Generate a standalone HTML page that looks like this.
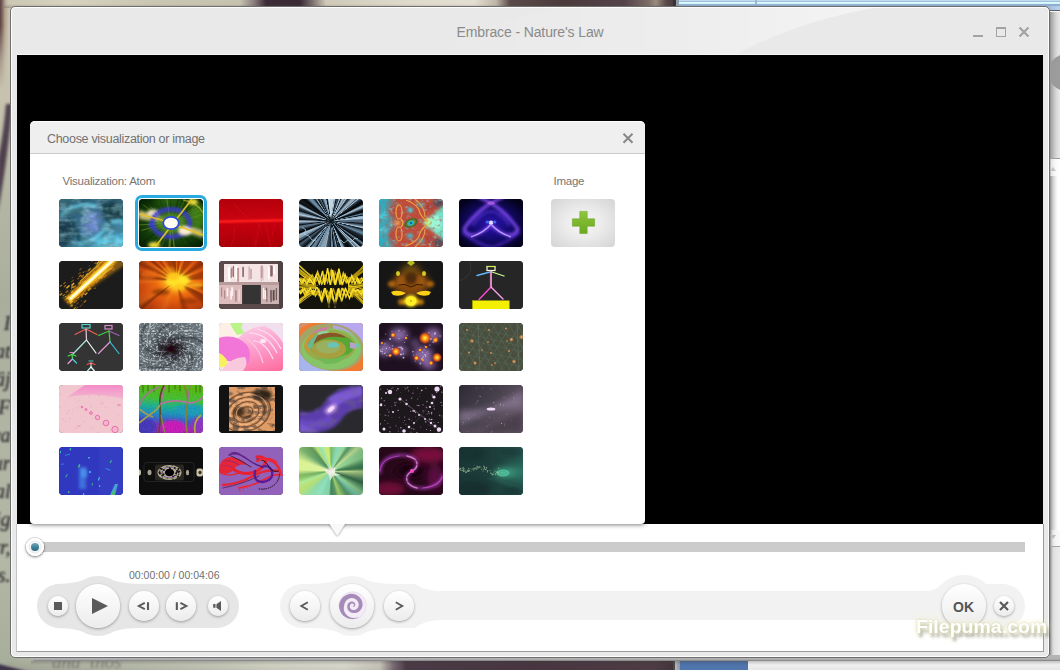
<!DOCTYPE html>
<html>
<head>
<meta charset="utf-8">
<title>Embrace - Nature's Law</title>
<style>
*{box-sizing:border-box;margin:0;padding:0}
html,body{width:1060px;height:670px;overflow:hidden}
body{position:relative;font-family:"Liberation Sans",sans-serif;background:#b9bcaa;color:#666}
.abs{position:absolute}
#desk{position:absolute;left:0;top:0;width:1060px;height:670px;overflow:hidden;background:#b4b8a6}
#desk div{position:absolute}
#win{position:absolute;left:10px;top:6px;width:1040px;height:652px;background:#e9e9e9;border:1px solid #6e6e6e;border-radius:5px;box-shadow:inset 0 0 0 1px #fdfdfd;overflow:hidden}
#title{position:absolute;left:430px;top:24.2px;width:200px;text-align:center;font-size:14px;line-height:16px;color:#8a8a8a;letter-spacing:-.12px;white-space:nowrap}
#video{position:absolute;left:17px;top:55px;width:1026px;height:469px;background:#000}
#panel{position:absolute;left:16px;top:524px;width:1028px;height:128px;background:#fff;border:1px solid #9a9a9a;border-top:none;border-left-color:#c6c6c6}
#dlg{position:absolute;left:30px;top:121px;width:615px;height:403px;background:#fff;border-radius:5px 5px 4px 4px;box-shadow:0 1px 4px rgba(0,0,0,.5)}
#dlgh{position:absolute;left:0;top:0;width:615px;height:33px;background:#efefef;border-top:1px solid #fdfdfd;border-bottom:1px solid #c9c9c9;border-radius:5px 5px 0 0}
.t{position:absolute;white-space:nowrap;color:#6b6b6b}
.th{position:absolute;width:64px;height:48px;border-radius:4px;overflow:hidden;background:#333}
.th svg{position:absolute;left:0;top:0;width:64px;height:48px;display:block}
.btn{position:absolute;border-radius:50%;background:linear-gradient(#ffffff,#ececec);box-shadow:0 1px 3px rgba(0,0,0,.35)}
</style>
</head>
<body>
<div id="desk">
  <!-- left strip: blurred book page -->
  <div style="left:0;top:0;width:14px;height:670px;background:linear-gradient(180deg,#c9c2ae 0px,#cbc6b2 60px,#c3c0ac 120px,#b4b6a4 200px,#a9ae9c 300px,#b0b4a3 420px,#b3b7a6 560px,#aab09d 640px,#a6ad9a 670px)"></div>
  <div style="left:0;top:0;width:14px;height:90px;background:linear-gradient(90deg,#5e4044 0px,#7a6058 2px,rgba(160,140,124,.6) 5px,rgba(200,194,174,0) 9px);-webkit-mask-image:linear-gradient(180deg,#000 0px,#000 25px,rgba(0,0,0,.35) 60px,transparent 90px);mask-image:linear-gradient(180deg,#000 0px,#000 25px,rgba(0,0,0,.35) 60px,transparent 90px)"></div>
  <svg style="position:absolute;left:0;top:100px" width="14" height="140" viewBox="0 100 14 140"><defs><filter id="dk1" x="-50%" y="-10%" width="200%" height="120%"><feGaussianBlur stdDeviation="1.6"/></filter></defs><path d="M12 104 Q9 150 -2 212 L-2 160 Q4 130 6 104Z" fill="#3a2a3c" opacity=".85" filter="url(#dk1)"/></svg>
  <div id="book" style="left:-40px;top:309px;width:50.500px;height:300px;font-family:'Liberation Serif',serif;font-style:italic;font-size:20px;line-height:28px;color:#303032;text-align:right;filter:blur(.9px);opacity:.92;white-space:nowrap;text-shadow:0 0 1px #303032">
    <div style="position:static;height:28px">I</div><div style="position:static;height:28px">nat</div><div style="position:static;height:28px">räj</div><div style="position:static;height:28px">F</div><div style="position:static;height:28px">eva</div><div style="position:static;height:28px">tur</div><div style="position:static;height:28px">mal</div><div style="position:static;height:28px">lig</div><div style="position:static;height:28px">err,</div><div style="position:static;height:28px">s.</div>
  </div>
  <!-- top strip -->
  <div style="left:4px;top:0;width:676px;height:8px;background:linear-gradient(90deg,rgba(201,194,174,0) 0px,#cdc8b4 8px,#d6d2bf 60px,#cac6b2 150px,#c6c2b0 236px,#8a7e7c 250px,#3c2c38 262px,#3a2a36 296px,#7a6e6c 308px,#cfc9b8 322px,#dedacb 400px,#e4dfd2 470px,#c0b6a8 492px,#5a4a48 506px,#4a3a3c 560px,#54424a 620px,#7c6c66 644px,#9a8c80 652px,#5a4a48 662px,#4a3c40 669px,#2c2c2c 670px,#3c3c3c 672px,#c4c4c4 673px,#d0d0d0 676px)"></div>
  <div style="left:4px;top:4px;width:676px;height:4px;background:linear-gradient(180deg,rgba(90,84,70,0),rgba(90,84,70,.35))"></div>
  <!-- top right: blue window frame -->
  <div style="left:679px;top:0;width:381px;height:9px;background:linear-gradient(180deg,#c3daef 0px,#c0d8ee 1px,#a2c1dd 1px,#a2c1dd 2px,#e6fcfd 2px,#c6f2f8 4px,#93b2d2 4px,#8faacb 6px,#9ab4d4 9px)"></div>
  <div style="left:676px;top:0;width:3px;height:8px;background:#8e9aa8"></div>
  <div style="left:755px;top:0;width:2px;height:4px;background:#9ab8d6"></div>
  <!-- right strip -->
  <div style="left:1046px;top:6px;width:14px;height:155px;background:linear-gradient(90deg,#8c8c8c 0px,#8c8c8c 4px,#a4a4a4 5px,#c4c4c4 8px,#dcdcdc 11px,#e8e8e8 14px)"></div>
  <div style="left:1046px;top:6px;width:14px;height:4px;background:linear-gradient(90deg,#9ab4d4 0px,#a8c4e2 6px,#b8d2ec 14px)"></div>
  <div style="left:1050px;top:10px;width:10px;height:1px;background:#5e5e5e"></div>
  <div style="left:1050px;top:11px;width:10px;height:1px;background:#f4f4f4"></div>
  <div style="left:1048px;top:54px;width:37px;height:37px;border-radius:50%;background:radial-gradient(circle at 50% 50%,#a0a0a0 0%,#9a9a9a 70%,#8c8c8c 100%)"></div>
  <div style="left:1046px;top:158px;width:14px;height:1px;background:#a0a0a0"></div>
  <div style="left:1046px;top:159px;width:14px;height:17px;background:linear-gradient(90deg,#9a9a9a 0px,#9a9a9a 4px,#e4e4e4 5px,#f8f8f8 9px,#ffffff 14px)"></div>
  <div style="left:1050px;top:167px;width:0;height:0;border-left:3px solid transparent;border-right:3px solid transparent;border-bottom:4px solid #c4c4c4"></div>
  <div style="left:1046px;top:176px;width:14px;height:354px;background:linear-gradient(90deg,#8c8c8c 0px,#8c8c8c 4px,#a8a8a8 5px,#cfcfcf 7px,#f2f2f2 10px,#ffffff 12px)"></div>
  <div style="left:1046px;top:530px;width:14px;height:16px;background:linear-gradient(90deg,#8c8c8c 0px,#8c8c8c 4px,#b4b4b4 5px,#e8e8e8 7px,#f6f6f6 10px,#fafafa 14px)"></div>
  <div style="left:1050px;top:535px;width:0;height:0;border-left:3px solid transparent;border-right:3px solid transparent;border-top:4px solid #bdbdbd"></div>
  <div style="left:1046px;top:546px;width:14px;height:1px;background:#a4a4a4"></div>
  <div style="left:1046px;top:547px;width:14px;height:120px;background:linear-gradient(90deg,#8c8c8c 0px,#8c8c8c 4px,#a6a6a6 5px,#cacaca 6px,#e2e2e2 8px,#ececec 14px)"></div>
  <!-- bottom strip -->
  <div style="left:14px;top:650px;width:660px;height:20px;background:linear-gradient(90deg,#a9ae9c 0px,#b2b6a4 40px,#bcc0ae 120px,#c8ccbc 200px,#d8d9ca 260px,#e0e0d3 330px,#cdcabf 366px,#7a6a72 380px,#4a3a46 392px,#47363f 520px,#4d3c44 640px,#43343c 660px)"></div>
  <div style="left:0px;top:660px;width:400px;height:10px;background:linear-gradient(180deg,rgba(80,80,70,0),rgba(70,66,70,.12))"></div>
  <div id="book2" style="left:52px;top:652px;width:120px;height:20px;font-family:'Liberation Serif',serif;font-style:italic;font-size:19px;line-height:20px;color:#4a4a48;filter:blur(1.2px);opacity:.5;white-space:nowrap">ana&nbsp; thos</div>
  <svg style="position:absolute;left:0;top:656px" width="60" height="14" viewBox="0 656 60 14"><defs><filter id="dk2" x="-20%" y="-50%" width="140%" height="200%"><feGaussianBlur stdDeviation="1.200"/></filter></defs><path d="M-4 663.5 L34 673 L-4 674Z" fill="#3c3448" filter="url(#dk2)"/></svg>
  <div style="left:673px;top:655px;width:2px;height:15px;background:#4a4a4a"></div>
  <div style="left:675px;top:655px;width:5px;height:15px;background:linear-gradient(90deg,#b8b8b8,#8e96a4)"></div>
  <div style="left:680px;top:655px;width:68px;height:15px;background:linear-gradient(180deg,#4b70a6,#4f76ad)"></div>
  <div style="left:748px;top:655px;width:312px;height:15px;background:linear-gradient(180deg,#fafafa 0px,#f4f4f4 8px,#e6e6e6 15px)"></div>
  <!-- window shadow band under the window -->
  <div style="left:30px;top:655px;width:1030px;height:6px;background:linear-gradient(180deg,#b4b4b4 0px,#b4b4b4 3px,#a8a8a8 5px,#6e6e6e 6px);clip-path:polygon(0 0,100% 0,100% 100%,4px 100%,0 3px)"></div>
  <div style="left:31px;top:661px;width:1029px;height:4px;background:linear-gradient(180deg,rgba(60,60,60,.28),rgba(60,60,60,0))"></div>
</div>
<div id="win"><svg style="position:absolute;left:0;top:0" width="1038" height="48" viewBox="11 7 1038 48"><defs><linearGradient id="tbg" x1="0" y1="0" x2="1" y2="0"><stop offset="0" stop-color="#fff" stop-opacity="0"/><stop offset=".55" stop-color="#fff" stop-opacity=".18"/><stop offset="1" stop-color="#fff" stop-opacity=".5"/></linearGradient></defs><path d="M420 55 L735 55 Q800 20 880 7 L560 7 Q470 30 420 55Z" fill="url(#tbg)"/></svg></div>
<div id="title">Embrace - Nature's Law</div>
<svg class="abs" style="left:960px;top:20px" width="80" height="24" viewBox="960 20 80 24">
  <g fill="none" stroke="#a3a3a3">
    <path d="M973 36 H983" stroke-width="2"/>
    <rect x="996.5" y="28" width="9" height="8.5" stroke-width="1"/>
    <path d="M996 28 H1006" stroke-width="2"/>
    <path d="M1019.500 27.500 L1028.500 36.500 M1028.500 27.500 L1019.500 36.500" stroke-width="2.200"/>
  </g>
</svg>
<div class="abs" style="left:17px;top:54px;width:1026px;height:1px;background:#f7f7f7"></div>
<div id="video"></div>
<div id="panel"></div>
<!-- seek bar -->
<div class="abs" style="left:36px;top:542px;width:989px;height:10px;background:#cccccc"></div>
<div class="abs" id="knob" style="left:26px;top:538px;width:18px;height:18px;border-radius:50%;background:linear-gradient(#ffffff,#f0f0f0);box-shadow:0 1px 3px rgba(0,0,0,.5),0 0 0 1px rgba(0,0,0,.10),inset 0 0 0 2.500px #fff,inset 0 0 0 3.500px #e9e9e9"></div>
<div class="abs" style="left:31px;top:543px;width:8px;height:8px;border-radius:50%;background:linear-gradient(180deg,#6fa9b9 0%,#3f8196 55%,#2a677d 100%)"></div>

<div class="t" id="time" style="left:129px;top:568px;font-size:10.5px;line-height:14px;color:#707070">00:00:00 / 00:04:06</div>

<svg class="abs" style="left:0;top:560px" width="1060" height="92" viewBox="0 560 1060 92">
  <g fill="#e6e6e6">
    <rect x="37" y="584" width="202" height="44" rx="22"/>
    <circle cx="98" cy="606" r="30"/>
    <path d="M55 584 Q72 584 82 580.600 L82 590 L55 590Z"/><path d="M141 584 Q124 584 114 580.600 L114 590 L141 590Z"/><path d="M55 628 Q72 628 82 631.400 L82 622 L55 622Z"/><path d="M141 628 Q124 628 114 631.400 L114 622 L141 622Z"/>
  </g>
  <g fill="#f2f2f2">
    <rect x="280" y="584" width="142" height="44" rx="22"/>
    <circle cx="352" cy="606" r="30"/>
    <path d="M309 584 Q326 584 336 580.600 L336 590 L309 590Z"/><path d="M395 584 Q378 584 368 580.600 L368 590 L395 590Z"/><path d="M309 628 Q326 628 336 631.400 L336 622 L309 622Z"/><path d="M395 628 Q378 628 368 631.400 L368 622 L395 622Z"/>
    <rect x="400" y="591" width="560" height="29"/>
    <path d="M400 584 L415 584 Q425 591 440 591 L440 620 Q425 620 415 628 L400 628Z"/>
    <rect x="950" y="584" width="75" height="44" rx="22"/>
    <circle cx="964" cy="606" r="31"/>
    <path d="M926 591 Q936 591 942 584 L986 584 Q992 584 1000 584 L1000 628 Q992 628 986 628 L942 628 Q936 620 926 620Z"/>
  </g>
</svg>

<div class="btn" style="left:48px;top:596px;width:20px;height:20px"></div>
<div class="btn" style="left:76px;top:584px;width:44px;height:44px"></div>
<div class="btn" style="left:129px;top:591px;width:30px;height:30px"></div>
<div class="btn" style="left:166px;top:591px;width:30px;height:30px"></div>
<div class="btn" style="left:208px;top:596px;width:20px;height:20px"></div>
<div class="btn" style="left:290px;top:591px;width:30px;height:30px"></div>
<div class="btn" style="left:330px;top:584px;width:44px;height:44px"></div>
<div class="btn" style="left:384px;top:591px;width:30px;height:30px"></div>
<div class="btn" style="left:942px;top:584px;width:44px;height:44px"></div>
<div class="btn" style="left:994px;top:596px;width:20px;height:20px"></div>

<svg class="abs" style="left:0;top:560px" width="1060" height="92" viewBox="0 560 1060 92">
  <rect x="54" y="602" width="8" height="8" fill="#5a5a5a"/>
  <path d="M92 598 L108 606 L92 614Z" fill="#5a5a5a"/>
  <g fill="none" stroke="#5a5a5a" stroke-width="1.6">
    <path d="M144.800 602.800 L138.800 606 L144.800 609.200" stroke-width="1.900"/>
    <path d="M148 602.200 V610" stroke-width="2.100"/>
    <path d="M176.850 602.200 V610" stroke-width="2.100"/>
    <path d="M180.400 602.800 L186.400 606 L180.400 609.200" stroke-width="1.900"/>
    <path d="M307.8 602.3 L301.3 606 L307.8 609.7" stroke-width="1.8"/>
    <path d="M395.8 602.3 L402.3 606 L395.8 609.7" stroke-width="1.8"/>
    <path d="M1000 602 L1008 610 M1008 602 L1000 610" stroke-width="2.2"/>
  </g>
  <path d="M213.200 604.100 h2.300 v3.700 h-2.300Z M216.400 604.300 L221 601 V610.900 L216.400 607.700Z" fill="#5a5a5a"/>
  <!-- spiral icon -->
  <g><circle cx="352.6" cy="605.5" r="13.700" fill="#f3ecf6" stroke="#e6dcec" stroke-width=".8"/><path d="M359.3 617.1 L356.7 618.3 L354.0 618.9 L351.2 618.9 L348.4 618.4 L345.8 617.3 L343.4 615.7 L341.5 613.5 L340.1 611.1 L339.3 608.3 L339.0 605.5 L339.6 602.7 L340.7 600.2 L342.2 598.0 L344.2 596.2 L346.5 594.9 L348.9 594.1 L351.4 593.8 L353.8 594.1 L356.1 594.8 L358.1 595.9 L359.8 597.5 L361.2 599.3 L362.1 601.3 L362.5 603.4 L362.6 605.5 L362.0 607.5 L361.1 609.3 L359.9 610.8 L358.4 611.9 L356.8 612.7 L355.1 613.1 L353.4 613.1 L351.8 612.8 L350.4 612.2 L349.2 611.3 L348.3 610.3 L347.6 609.1 L347.3 607.9 L347.2 606.7 L347.4 605.5 L347.6 604.4 L348.1 603.5 L348.8 602.7 L349.6 602.2 L350.4 601.8 L351.3 601.6 L352.2 601.6 L353.0 601.8 L353.7 602.1 L354.3 602.5 L354.8 603.1 L355.1 603.7 L355.2 604.3 L355.3 604.9 L355.2 605.5 L354.9 606.0 L354.5 606.4 L354.2 606.6 L353.7 606.8 L353.4 606.8 L353.0 606.7 L352.8 606.0 L352.9 606.1 L353.1 606.1 L353.3 606.0 L353.5 605.9 L353.7 605.7 L353.9 605.5 L353.9 605.2 L353.9 604.9 L353.8 604.6 L353.7 604.3 L353.5 604.0 L353.2 603.8 L352.8 603.6 L352.4 603.5 L352.0 603.5 L351.5 603.6 L351.1 603.8 L350.7 604.1 L350.4 604.5 L350.2 605.0 L350.1 605.5 L349.9 606.1 L349.8 606.7 L349.9 607.5 L350.2 608.2 L350.7 608.8 L351.3 609.4 L352.1 609.8 L353.1 610.1 L354.1 610.1 L355.1 609.8 L356.1 609.4 L357.0 608.7 L357.7 607.8 L358.3 606.7 L358.7 605.5 L358.7 604.2 L358.5 602.9 L357.9 601.6 L357.1 600.5 L356.1 599.5 L354.8 598.7 L353.4 598.2 L351.8 598.1 L350.3 598.3 L348.7 598.8 L347.3 599.7 L346.1 600.8 L345.2 602.2 L344.5 603.8 L344.2 605.5 L343.8 607.4 L343.8 609.4 L344.3 611.5 L345.4 613.5 L346.9 615.3 L349.0 616.7 L351.3 617.7 L353.9 618.1 L356.6 617.8 L359.2 616.9Z" fill="#a68bb9"/></g>
</svg>
<div class="t" style="left:953px;top:599px;font-size:14px;line-height:16px;font-weight:bold;color:#555">OK</div>
<div class="t" id="wm" style="left:915.500px;top:615.500px;font-size:17.5px;line-height:22px;font-weight:bold;color:#fff;transform:scaleX(1.116);transform-origin:0 0;filter:blur(.35px);text-shadow:0 0 2px rgba(205,205,160,.95),0 0 5px rgba(238,238,200,.9),0 0 9px rgba(244,244,214,.7),2px 4px 3px rgba(60,60,48,.5)">Filepuma.com</div>
<div id="dlg"><div id="dlgh"></div></div>
<div class="t" id="dt" style="left:47px;top:131px;font-size:12.5px;line-height:16px;color:#727272;letter-spacing:-.31px">Choose visualization or image</div>
<svg class="abs" style="left:620px;top:130px" width="16" height="16" viewBox="620 130 16 16"><path d="M623.500 133.700 L632.500 142.700 M632.500 133.700 L623.500 142.700" stroke="#888" stroke-width="2" fill="none"/></svg>
<div class="t" id="vt" style="left:62.500px;top:173.500px;font-size:11.5px;line-height:15px;color:#767676;letter-spacing:-.23px">Visualization: Atom</div>
<div class="t" id="it" style="left:553.500px;top:173.500px;font-size:11.5px;line-height:15px;color:#767676;letter-spacing:-.25px">Image</div>
<div class="abs" style="left:135px;top:195px;width:72px;height:56px;border:3px solid #29abe2;border-radius:7px;background:#fff"></div>
<div class="th" style="left:59px;top:199px"><svg viewBox="0 0 64 48" preserveAspectRatio="none"><defs><filter id="b1a" x="-20%" y="-20%" width="140%" height="140%"><feGaussianBlur stdDeviation="0.6"/></filter><filter id="b1b" x="-60%" y="-60%" width="220%" height="220%"><feGaussianBlur stdDeviation="1.5"/></filter><filter id="b1c" x="-100%" y="-100%" width="300%" height="300%"><feGaussianBlur stdDeviation="3"/></filter><linearGradient id="g1" x1="0" y1="0" x2="1" y2="1"><stop offset="0" stop-color="#245668"/><stop offset=".45" stop-color="#346a88"/><stop offset="1" stop-color="#48a4c8"/></linearGradient><filter id="n1" x="0" y="0" width="100%" height="100%"><feTurbulence type="fractalNoise" baseFrequency=".06 .12" numOctaves="3" seed="11"/><feColorMatrix values="0 0 0 0 .06  0 0 0 0 .17  0 0 0 0 .2  2.6 0 0 0 -1.05"/></filter><filter id="m1" x="0" y="0" width="100%" height="100%"><feTurbulence type="fractalNoise" baseFrequency=".09 .16" numOctaves="3" seed="5"/><feColorMatrix values="0 0 0 0 .52  0 0 0 0 .86  0 0 0 0 .96  0 2.6 0 0 -1.15"/></filter></defs><rect width="64" height="48" fill="url(#g1)"/><g filter="url(#b1c)"><ellipse cx="55" cy="12" rx="13" ry="11" fill="#163842"/><ellipse cx="5" cy="34" rx="11" ry="14" fill="#123644"/><ellipse cx="32" cy="24" rx="8" ry="12" fill="#7088d4" transform="rotate(25 32 24)"/><ellipse cx="50" cy="44" rx="18" ry="6" fill="#62d2ee"/><ellipse cx="42" cy="35" rx="6" ry="4" fill="#1c4858"/><ellipse cx="22" cy="45" rx="10" ry="4" fill="#3a90b4"/></g><g filter="url(#b1b)" fill="none" stroke-linecap="round"><path d="M3 16 Q14 4 36 7" stroke="#66cce8" stroke-width="3.600"/><path d="M20 46 Q36 42 46 30 T63 23" stroke="#6cd2ee" stroke-width="3"/><path d="M10 20 Q20 30 20 42" stroke="#1a4452" stroke-width="3.500"/><path d="M42 3 Q50 14 51 26" stroke="#1b424c" stroke-width="3"/><path d="M26 10 Q36 18 38 32" stroke="#92a6e8" stroke-width="2"/></g><rect width="64" height="48" filter="url(#n1)" opacity=".7"/><rect width="64" height="48" filter="url(#m1)" opacity=".4"/></svg></div>
<div class="th" style="left:139px;top:199px"><svg viewBox="0 0 64 48" preserveAspectRatio="none"><defs><filter id="b2a" x="-20%" y="-20%" width="140%" height="140%"><feGaussianBlur stdDeviation="0.6"/></filter><filter id="b2b" x="-60%" y="-60%" width="220%" height="220%"><feGaussianBlur stdDeviation="1.5"/></filter><filter id="b2c" x="-100%" y="-100%" width="300%" height="300%"><feGaussianBlur stdDeviation="3"/></filter><radialGradient id="g2" cx=".5" cy=".5" r=".7"><stop offset="0" stop-color="#4e7e1c"/><stop offset=".4" stop-color="#1c4e0c"/><stop offset="1" stop-color="#041c04"/></radialGradient></defs><rect width="64" height="48" fill="url(#g2)"/><g filter="url(#b2c)"><ellipse cx="58" cy="18" rx="9" ry="14" fill="#3c7c14"/><ellipse cx="30" cy="2" rx="14" ry="4" fill="#2c6410"/></g><g filter="url(#b2a)"><path d="M39.7 22.4 L69.4 13.4" stroke="#6a9a24" stroke-width="0.4" opacity=".55"/><path d="M26.9 28.6 L18 40.6" stroke="#0a3006" stroke-width="0.7" opacity=".55"/><path d="M29.1 29.6 L20.8 53.3" stroke="#b0bc38" stroke-width="0.4" opacity=".55"/><path d="M28.7 18.6 L15.3 -12.3" stroke="#082806" stroke-width="0.6" opacity=".55"/><path d="M30.6 18.1 L25.3 -15.3" stroke="#94b42c" stroke-width="0.7" opacity=".55"/><path d="M24.5 26 L9.5 32.1" stroke="#6a9a24" stroke-width="0.8" opacity=".55"/><path d="M26.7 28.5 L6.7 53" stroke="#051c04" stroke-width="0.6" opacity=".55"/><path d="M38 20 L48.1 9.6" stroke="#346c12" stroke-width="0.5" opacity=".55"/><path d="M39.9 24.9 L56.9 27.8" stroke="#346c12" stroke-width="0.7" opacity=".55"/><path d="M26.9 28.6 L13.4 46.6" stroke="#b0bc38" stroke-width="0.5" opacity=".55"/><path d="M38.3 20.3 L59.9 2" stroke="#082806" stroke-width="0.7" opacity=".55"/><path d="M38.7 20.7 L53.8 9.9" stroke="#b0bc38" stroke-width="0.6" opacity=".55"/><path d="M39.9 23.3 L70.9 19.3" stroke="#346c12" stroke-width="0.9" opacity=".55"/><path d="M25.5 27.5 L4.3 44.2" stroke="#082806" stroke-width="0.7" opacity=".55"/><path d="M24 24.4 L-6.3 26.4" stroke="#b0bc38" stroke-width="0.7" opacity=".55"/><path d="M34.3 18.3 L41.3 -7.2" stroke="#051c04" stroke-width="0.8" opacity=".55"/><path d="M24.2 25.5 L2.4 31.4" stroke="#b0bc38" stroke-width="0.8" opacity=".55"/><path d="M24 24.5 L9.2 25.9" stroke="#94b42c" stroke-width="0.8" opacity=".55"/><path d="M36.1 18.8 L51 -8.1" stroke="#b0bc38" stroke-width="0.5" opacity=".55"/><path d="M38.8 20.8 L53.1 10.9" stroke="#0a3006" stroke-width="0.8" opacity=".55"/><path d="M24 23.8 L2.6 23.2" stroke="#082806" stroke-width="0.7" opacity=".55"/><path d="M25.3 27.3 L3.6 42.9" stroke="#051c04" stroke-width="0.7" opacity=".55"/><path d="M39.3 21.6 L61 11.3" stroke="#6a9a24" stroke-width="0.8" opacity=".55"/><path d="M27.7 29 L22.1 39.3" stroke="#0a3006" stroke-width="0.5" opacity=".55"/><path d="M31.7 18 L31.4 4.7" stroke="#082806" stroke-width="0.4" opacity=".55"/><path d="M25.3 20.7 L4.3 6" stroke="#6a9a24" stroke-width="0.8" opacity=".55"/><path d="M37.2 28.5 L47.6 42" stroke="#0a3006" stroke-width="0.5" opacity=".55"/><path d="M37.9 19.9 L52 5.4" stroke="#082806" stroke-width="0.8" opacity=".55"/><path d="M39.5 26.1 L56.3 33.1" stroke="#346c12" stroke-width="0.7" opacity=".55"/><path d="M38.9 27 L65.8 43.4" stroke="#6a9a24" stroke-width="0.4" opacity=".55"/><path d="M39 21.1 L54.9 11.2" stroke="#346c12" stroke-width="0.8" opacity=".55"/><path d="M36.4 29 L44.1 42.4" stroke="#082806" stroke-width="0.4" opacity=".55"/><path d="M25.2 20.8 L2 5.1" stroke="#346c12" stroke-width="0.5" opacity=".55"/><path d="M39.8 25.4 L56.9 29.8" stroke="#b0bc38" stroke-width="0.7" opacity=".55"/><path d="M31.9 18 L31.6 -0.3" stroke="#051c04" stroke-width="0.4" opacity=".55"/><path d="M24.4 25.9 L-1.1 35" stroke="#082806" stroke-width="0.4" opacity=".55"/><path d="M31.3 30 L29.7 50.7" stroke="#b0bc38" stroke-width="0.8" opacity=".55"/><path d="M24.1 25 L9.4 27.9" stroke="#082806" stroke-width="0.7" opacity=".55"/><path d="M36.2 18.9 L41.8 8.3" stroke="#0a3006" stroke-width="0.8" opacity=".55"/><path d="M37.6 28.3 L53.5 46.2" stroke="#051c04" stroke-width="0.6" opacity=".55"/><path d="M28.2 29.3 L14.5 56.9" stroke="#94b42c" stroke-width="0.5" opacity=".55"/><path d="M25.7 20.3 L10.6 7.2" stroke="#6a9a24" stroke-width="0.7" opacity=".55"/><path d="M39.7 22.5 L63.7 15.7" stroke="#94b42c" stroke-width="0.4" opacity=".55"/><path d="M36.2 29.1 L42.7 41.1" stroke="#082806" stroke-width="0.5" opacity=".55"/><path d="M38.9 21 L61.1 7.2" stroke="#6a9a24" stroke-width="0.9" opacity=".55"/><path d="M32.9 30 L35.1 51.6" stroke="#94b42c" stroke-width="0.4" opacity=".55"/><path d="M33.1 29.9 L36.8 59.1" stroke="#b0bc38" stroke-width="0.8" opacity=".55"/><path d="M31.7 30 L30.9 51.3" stroke="#b0bc38" stroke-width="0.8" opacity=".55"/><path d="M36.7 28.9 L47.4 45.5" stroke="#346c12" stroke-width="0.5" opacity=".55"/><path d="M30.7 18.1 L28.2 1" stroke="#6a9a24" stroke-width="0.4" opacity=".55"/></g><g filter="url(#b2b)"><path d="M0 11 L0 20 L30 25 L30 21Z" fill="#e8d488" opacity=".85"/><path d="M34 24 L64 31 L64 39 L34 28Z" fill="#ecd890" opacity=".8"/><ellipse cx="14" cy="14" rx="6" ry="3.500" fill="#f0e0c0"/></g><ellipse cx="32" cy="24" rx="18.500" ry="13.500" fill="none" stroke="#4040d4" stroke-width="5" opacity=".8" filter="url(#b2b)"/><ellipse cx="32" cy="24" rx="19.500" ry="14.500" fill="none" stroke="#3434c4" stroke-width="2.400" stroke-dasharray="1.700 1.300" opacity=".5" filter="url(#b2a)"/><ellipse cx="32" cy="24" rx="14" ry="10" fill="#4e8828" opacity=".8" filter="url(#b2b)"/><g filter="url(#b2b)"><ellipse cx="46" cy="32" rx="7" ry="4.500" fill="#fcecd0"/><ellipse cx="15" cy="46" rx="6" ry="3" fill="#e8dc3c"/><ellipse cx="54" cy="3" rx="5" ry="3" fill="#f0e040"/><ellipse cx="12" cy="26" rx="2.500" ry="2" fill="#3040e0"/></g><g filter="url(#b2a)" opacity=".92"><path d="M0 15 L30 23" stroke="#e8c020" stroke-width="1.600"/><path d="M36 26 L64 36" stroke="#e8c020" stroke-width="1.600"/><path d="M16 48 L53 0" stroke="#e0c428" stroke-width="1.800"/><path d="M44 1 Q58 3 64 14" stroke="#d8c830" stroke-width="1.400" fill="none" opacity=".6"/></g><ellipse cx="32" cy="24" rx="7.800" ry="6.200" fill="#fffce0" stroke="#3048e8" stroke-width="1.800" filter="url(#b2a)"/><ellipse cx="32" cy="24" rx="6.200" ry="4.800" fill="#fffdf0"/></svg></div>
<div class="th" style="left:219px;top:199px"><svg viewBox="0 0 64 48" preserveAspectRatio="none"><defs><filter id="b3a" x="-20%" y="-20%" width="140%" height="140%"><feGaussianBlur stdDeviation="0.6"/></filter><filter id="b3b" x="-60%" y="-60%" width="220%" height="220%"><feGaussianBlur stdDeviation="1.5"/></filter><filter id="b3c" x="-100%" y="-100%" width="300%" height="300%"><feGaussianBlur stdDeviation="3"/></filter><linearGradient id="g3" x1="0" y1="0" x2="0.03" y2="1"><stop offset="0" stop-color="#b2000a"/><stop offset=".42" stop-color="#c80410"/><stop offset=".47" stop-color="#ff1c1c"/><stop offset=".53" stop-color="#c4000e"/><stop offset="1" stop-color="#a80008"/></linearGradient></defs><rect width="64" height="48" fill="url(#g3)"/><g filter="url(#b3a)"><path d="M15.2 24 L15.9 48" stroke="#d81820" stroke-width=".5" opacity=".45"/><path d="M23.7 24 L25.3 48" stroke="#d81820" stroke-width=".5" opacity=".45"/><path d="M40 24 L33.1 48" stroke="#d81820" stroke-width=".5" opacity=".45"/><path d="M0.8 24 L6.2 48" stroke="#d81820" stroke-width=".5" opacity=".45"/><path d="M16.6 24 L12.3 48" stroke="#d81820" stroke-width=".5" opacity=".45"/><path d="M63.7 24 L63.2 48" stroke="#d81820" stroke-width=".5" opacity=".45"/><path d="M53.5 24 L53.2 48" stroke="#d81820" stroke-width=".5" opacity=".45"/><path d="M40.9 24 L35.3 48" stroke="#d81820" stroke-width=".5" opacity=".45"/><path d="M40.6 24 L46.5 48" stroke="#d81820" stroke-width=".5" opacity=".45"/><path d="M33.5 24 L37.3 48" stroke="#d81820" stroke-width=".5" opacity=".45"/><path d="M43 24 L36 48" stroke="#d81820" stroke-width=".5" opacity=".45"/><path d="M48.5 24 L50 48" stroke="#d81820" stroke-width=".5" opacity=".45"/><path d="M19.3 24 L11.8 48" stroke="#d81820" stroke-width=".5" opacity=".45"/><path d="M55.4 24 L55 48" stroke="#d81820" stroke-width=".5" opacity=".45"/><path d="M46 24 L52.1 48" stroke="#d81820" stroke-width=".5" opacity=".45"/><path d="M45.7 24 L52.4 48" stroke="#d81820" stroke-width=".5" opacity=".45"/><path d="M25.3 24 L30.1 48" stroke="#d81820" stroke-width=".5" opacity=".45"/><path d="M28.5 24 L35.4 48" stroke="#d81820" stroke-width=".5" opacity=".45"/><path d="M56.2 24 L49.8 48" stroke="#d81820" stroke-width=".5" opacity=".45"/><path d="M8.7 24 L4.2 48" stroke="#d81820" stroke-width=".5" opacity=".45"/><path d="M61.8 24 L60.8 48" stroke="#d81820" stroke-width=".5" opacity=".45"/><path d="M40.1 24 L36.9 48" stroke="#d81820" stroke-width=".5" opacity=".45"/><path d="M14 4 L30 20 M30 21 L52 0 M40 10 L64 22 M0 8 L20 20" stroke="#d81018" stroke-width=".6" opacity=".6"/></g></svg></div>
<div class="th" style="left:299px;top:199px;background:conic-gradient(from 0deg at 32px 22px,#6a8aa4 0deg,#141c22 2.3deg,#2c3c48 4.9deg,#0a0e12 6.4deg,#b4cee0 9.1deg,#0a0e12 13.2deg,#384c5c 15.2deg,#2c3c48 17.7deg,#b4cee0 21.8deg,#0a0e12 23.8deg,#b4cee0 28deg,#6a8aa4 32.1deg,#b4cee0 33.9deg,#141c22 37.3deg,#4a6278 42deg,#05080a 43.5deg,#0c1014 45.9deg,#2c3c48 48.9deg,#b4cee0 51deg,#384c5c 52.5deg,#0a0e12 56.8deg,#05080a 61.2deg,#b4cee0 65deg,#384c5c 69.2deg,#0c1014 71.1deg,#0c1014 74.5deg,#6a8aa4 77.3deg,#0a0e12 79.6deg,#88a8c0 81.1deg,#b4cee0 84.6deg,#586f84 87.6deg,#4a6278 90.5deg,#586f84 92.3deg,#0c1014 94.2deg,#586f84 98.6deg,#b4cee0 102.1deg,#0c1014 104deg,#4a6278 107.9deg,#6a8aa4 111.4deg,#1a242c 115.8deg,#141c22 120deg,#05080a 122.1deg,#6a8aa4 125.5deg,#2c3c48 127.1deg,#0a0e12 129.4deg,#141c22 130.7deg,#b4cee0 132.2deg,#4a6278 136.1deg,#b4cee0 137.3deg,#2c3c48 139.7deg,#0c1014 143.7deg,#05080a 148deg,#1a242c 151.6deg,#6a8aa4 153.9deg,#b4cee0 158.3deg,#0c1014 160deg,#2c3c48 163.3deg,#0a0e12 165.7deg,#88a8c0 168.2deg,#4a6278 170.1deg,#05080a 174.8deg,#6a8aa4 176.4deg,#6a8aa4 179.1deg,#0a0e12 180.7deg,#2c3c48 182.1deg,#2c3c48 185.5deg,#384c5c 188.9deg,#6a8aa4 191.8deg,#0a0e12 194.2deg,#384c5c 195.8deg,#0c1014 198.1deg,#6a8aa4 201.6deg,#6a8aa4 204.5deg,#88a8c0 207.3deg,#0c1014 208.7deg,#586f84 211.4deg,#6a8aa4 215.9deg,#0a0e12 218.8deg,#b4cee0 220.2deg,#6a8aa4 222.3deg,#0c1014 226.2deg,#2c3c48 230.6deg,#4a6278 232.9deg,#05080a 236.2deg,#586f84 238.8deg,#141c22 242.4deg,#88a8c0 246.3deg,#0c1014 248.8deg,#05080a 250.8deg,#2c3c48 255.2deg,#586f84 257.7deg,#586f84 260.6deg,#0c1014 262.9deg,#586f84 266deg,#b4cee0 270.1deg,#0c1014 272.5deg,#1a242c 277.1deg,#b4cee0 281.4deg,#586f84 286.1deg,#0c1014 288deg,#2c3c48 292.4deg,#b4cee0 296.4deg,#0a0e12 300deg,#141c22 304.3deg,#05080a 307.8deg,#0c1014 310.7deg,#6a8aa4 315.2deg,#6a8aa4 319.3deg,#0a0e12 323.8deg,#b4cee0 327.2deg,#0c1014 328.8deg,#384c5c 333.2deg,#6a8aa4 334.6deg,#05080a 336.4deg,#384c5c 338.8deg,#88a8c0 342.8deg,#88a8c0 347.2deg,#0a0e12 348.5deg,#1a242c 352.2deg,#b4cee0 355.2deg,#2c3c48 358.6deg,#1a242c 359.9deg,#6a8aa4 360deg)"><svg viewBox="0 0 64 48" preserveAspectRatio="none"><defs><filter id="b4a" x="-20%" y="-20%" width="140%" height="140%"><feGaussianBlur stdDeviation="0.6"/></filter><filter id="b4b" x="-60%" y="-60%" width="220%" height="220%"><feGaussianBlur stdDeviation="1.5"/></filter><filter id="b4c" x="-100%" y="-100%" width="300%" height="300%"><feGaussianBlur stdDeviation="3"/></filter></defs><g filter="url(#b4a)"><path d="M32 22 L29 0 L35 0Z" fill="#cfe4f2" opacity=".9"/><path d="M32 22 L52 0 L57 0Z" fill="#c0d8ea" opacity=".8"/><path d="M32 22 L0 40 L0 35Z" fill="#a8c4d8" opacity=".8"/><path d="M32 22 L22 48 L27 48Z" fill="#b8d0e2" opacity=".7"/></g><circle cx="32" cy="22" r="3.500" fill="#0c1216" filter="url(#b4b)"/><path d="M3 28 l4 3 l-2 4 l5 2 l3 4 l4 1 M38 43 l4 -2 l3 3 l4 -3 l3 2 l4 -4 l3 1" stroke="#b0d4ea" stroke-width=".7" fill="none"/></svg></div>
<div class="th" style="left:379px;top:199px"><svg viewBox="0 0 64 48" preserveAspectRatio="none"><defs><filter id="b5a" x="-20%" y="-20%" width="140%" height="140%"><feGaussianBlur stdDeviation="0.6"/></filter><filter id="b5b" x="-60%" y="-60%" width="220%" height="220%"><feGaussianBlur stdDeviation="1.5"/></filter><filter id="b5c" x="-100%" y="-100%" width="300%" height="300%"><feGaussianBlur stdDeviation="3"/></filter><filter id="n5" x="0" y="0" width="100%" height="100%"><feTurbulence type="fractalNoise" baseFrequency=".2 .25" numOctaves="2" seed="21"/><feColorMatrix values="0 0 0 0 .2  0 0 0 0 .74  0 0 0 0 .8  3.4 0 0 0 -1.9"/></filter><filter id="m5" x="0" y="0" width="100%" height="100%"><feTurbulence type="fractalNoise" baseFrequency=".3 .35" numOctaves="2" seed="3"/><feColorMatrix values="0 0 0 0 .42  0 0 0 0 .12  0 0 0 0 .12  0 3.2 0 0 -1.6"/></filter><linearGradient id="g5" x1="0" y1="0" x2="1" y2="0"><stop offset="0" stop-color="#2cb4c6"/><stop offset=".14" stop-color="#3aa8b8" stop-opacity=".85"/><stop offset=".3" stop-color="#40a0b0" stop-opacity="0"/></linearGradient></defs><rect width="64" height="48" fill="#c04a38"/><rect width="64" height="48" fill="url(#g5)"/><g filter="url(#b5b)"><path d="M66 6 L52 17 L43 24 L52 31 L66 42Z" fill="#6ee4c8"/><ellipse cx="57" cy="24" rx="6" ry="8" fill="#9cf8d4"/><ellipse cx="49" cy="23" rx="3" ry="5" fill="#c4f088"/><ellipse cx="60" cy="4" rx="6" ry="5" fill="#5a4a54"/><ellipse cx="60" cy="44" rx="6" ry="5" fill="#5a5058"/><ellipse cx="50" cy="8" rx="4" ry="3" fill="#a84038"/><ellipse cx="50" cy="40" rx="4" ry="3" fill="#a84038"/><ellipse cx="31" cy="11" rx="3" ry="2.500" fill="#34c8dc"/><ellipse cx="31" cy="37" rx="3" ry="2.500" fill="#34c8dc"/><ellipse cx="5" cy="17" rx="3" ry="2.500" fill="#48d8e8"/><ellipse cx="5" cy="31" rx="3" ry="2.500" fill="#48d8e8"/><ellipse cx="2" cy="4" rx="5" ry="5" fill="#28b0c4"/><ellipse cx="2" cy="44" rx="5" ry="5" fill="#28b0c4"/><ellipse cx="14" cy="12" rx="4" ry="5" fill="#c04434"/><ellipse cx="14" cy="36" rx="4" ry="5" fill="#c04434"/><ellipse cx="42" cy="6" rx="3" ry="2" fill="#38b4c4"/><ellipse cx="42" cy="42" rx="3" ry="2" fill="#38b4c4"/><ellipse cx="18" cy="24" rx="3.500" ry="2.500" fill="#f0a458"/></g><rect width="64" height="48" filter="url(#n5)" opacity=".6"/><rect width="64" height="48" filter="url(#m5)" opacity=".55"/><g filter="url(#b5a)" fill="none" stroke="#f0a040" stroke-width="1.200"><ellipse cx="20" cy="13" rx="3" ry="7"/><ellipse cx="20" cy="35" rx="3" ry="7"/><path d="M27 1 Q40 6 41 14 Q44 20 48 22"/><path d="M27 47 Q40 42 41 34 Q44 28 48 26"/><path d="M36 0 Q46 8 46 18" stroke="#e8b048" opacity=".8"/><path d="M36 48 Q46 40 46 30" stroke="#e8b048" opacity=".8"/><path d="M22 20 Q26 24 22 28" stroke="#f0b050"/></g><g transform="rotate(-24 32 24)" filter="url(#b5a)"><ellipse cx="32" cy="24" rx="7" ry="4.200" fill="#3a6a2a"/><ellipse cx="32" cy="24" rx="5" ry="3" fill="#7a8a28"/><ellipse cx="32" cy="24" rx="3" ry="2.300" fill="#18bce0"/><ellipse cx="32" cy="24" rx="1" ry=".9" fill="#0a3040"/></g></svg></div>
<div class="th" style="left:459px;top:199px"><svg viewBox="0 0 64 48" preserveAspectRatio="none"><defs><filter id="b6a" x="-20%" y="-20%" width="140%" height="140%"><feGaussianBlur stdDeviation="0.6"/></filter><filter id="b6b" x="-60%" y="-60%" width="220%" height="220%"><feGaussianBlur stdDeviation="1.5"/></filter><filter id="b6c" x="-100%" y="-100%" width="300%" height="300%"><feGaussianBlur stdDeviation="3"/></filter><radialGradient id="g6" cx=".5" cy=".52" r=".62"><stop offset="0" stop-color="#2a14ac"/><stop offset=".5" stop-color="#150a70"/><stop offset="1" stop-color="#03021a"/></radialGradient></defs><rect width="64" height="48" fill="url(#g6)"/><g fill="none" filter="url(#b6b)" stroke-linecap="round"><path d="M44 -2 Q20 8 5 30 Q12 44 32 26" stroke="#7c46ea" stroke-width="3"/><path d="M20 -2 Q44 8 59 30 Q52 44 32 26" stroke="#7c46ea" stroke-width="3"/><path d="M4 34 Q20 46 32 48 M60 34 Q44 46 32 48" stroke="#4424b8" stroke-width="2.400"/><path d="M14 26 Q22 14 32 12 Q42 14 50 26" stroke="#4a2cc8" stroke-width="2"/></g><g fill="none" filter="url(#b6a)"><path d="M12 38 Q26 33 32 25 Q38 33 52 38" stroke="#b898ff" stroke-width="1.300"/><ellipse cx="32" cy="4" rx="3.500" ry="1.800" fill="#c868e0" opacity=".6"/><ellipse cx="32" cy="23.500" rx="2.400" ry="2" fill="#e8e0ff"/><ellipse cx="28.500" cy="23" rx="2" ry="1.500" fill="#4a60f0"/><ellipse cx="35.500" cy="23" rx="2" ry="1.500" fill="#4a60f0"/></g></svg></div>
<div class="th" style="left:59px;top:261px"><svg viewBox="0 0 64 48" preserveAspectRatio="none"><defs><filter id="b7a" x="-20%" y="-20%" width="140%" height="140%"><feGaussianBlur stdDeviation="0.6"/></filter><filter id="b7b" x="-60%" y="-60%" width="220%" height="220%"><feGaussianBlur stdDeviation="1.5"/></filter><filter id="b7c" x="-100%" y="-100%" width="300%" height="300%"><feGaussianBlur stdDeviation="3"/></filter></defs><rect width="64" height="48" fill="#1c1c1c"/><g filter="url(#b7b)"><path d="M8 41 L58 -5" stroke="#e89a14" stroke-width="9" opacity=".8"/><path d="M28 26 L66 0" stroke="#c88010" stroke-width="6" opacity=".6"/><path d="M22 24 L48 -2" stroke="#c07810" stroke-width="5" opacity=".6"/></g><rect x="44.8" y="4.8" width="3.7" height="1.4" fill="#a05a0c" opacity="0.9" transform="rotate(-42 44.8 4.8)"/><rect x="20.2" y="34.1" width="3.5" height="1.3" fill="#e89818" opacity="0.5" transform="rotate(-42 20.2 34.1)"/><rect x="54.5" y="2.2" width="2.1" height="0.8" fill="#c87810" opacity="0.5" transform="rotate(-42 54.5 2.2)"/><rect x="36.8" y="22.1" width="1.8" height="0.7" fill="#c87810" opacity="0.5" transform="rotate(-42 36.8 22.1)"/><rect x="11.8" y="26.9" width="3.2" height="1.2" fill="#f8c838" opacity="0.8" transform="rotate(-42 11.8 26.9)"/><rect x="45.6" y="3.1" width="3.6" height="1.4" fill="#e89818" opacity="0.8" transform="rotate(-42 45.6 3.1)"/><rect x="54" y="-0.5" width="3.7" height="1.4" fill="#f0b828" opacity="0.5" transform="rotate(-42 54 -0.5)"/><rect x="51.1" y="8.4" width="2.6" height="1" fill="#d88814" opacity="0.6" transform="rotate(-42 51.1 8.4)"/><rect x="28.7" y="21.6" width="1.4" height="0.5" fill="#e89818" opacity="0.8" transform="rotate(-42 28.7 21.6)"/><rect x="37.2" y="2.4" width="3.8" height="1.4" fill="#f0b828" opacity="0.9" transform="rotate(-42 37.2 2.4)"/><rect x="42.7" y="13.5" width="2.6" height="1" fill="#f0b828" opacity="0.5" transform="rotate(-42 42.7 13.5)"/><rect x="30.8" y="22.4" width="2.8" height="1" fill="#a05a0c" opacity="0.5" transform="rotate(-42 30.8 22.4)"/><rect x="29.3" y="20.2" width="3" height="1.1" fill="#e89818" opacity="0.7" transform="rotate(-42 29.3 20.2)"/><rect x="44" y="-2.7" width="1.9" height="0.7" fill="#c87810" opacity="0.6" transform="rotate(-42 44 -2.7)"/><rect x="46.8" y="6.5" width="2.6" height="1" fill="#f8c838" opacity="0.6" transform="rotate(-42 46.8 6.5)"/><rect x="55.4" y="-0.1" width="2.6" height="1" fill="#a05a0c" opacity="0.7" transform="rotate(-42 55.4 -0.1)"/><rect x="46.3" y="-0.9" width="1.3" height="0.5" fill="#c87810" opacity="0.7" transform="rotate(-42 46.3 -0.9)"/><rect x="9.5" y="40.2" width="3.5" height="1.3" fill="#f8c838" opacity="0.7" transform="rotate(-42 9.5 40.2)"/><rect x="40.6" y="12.2" width="3.5" height="1.3" fill="#a05a0c" opacity="0.7" transform="rotate(-42 40.6 12.2)"/><rect x="44" y="4.6" width="2.4" height="0.9" fill="#f8c838" opacity="0.6" transform="rotate(-42 44 4.6)"/><rect x="50.7" y="7.7" width="3.8" height="1.4" fill="#f0b828" opacity="0.8" transform="rotate(-42 50.7 7.7)"/><rect x="50.9" y="-5.9" width="2.6" height="1" fill="#f8c838" opacity="0.7" transform="rotate(-42 50.9 -5.9)"/><rect x="28.3" y="26.5" width="3" height="1.1" fill="#f8c838" opacity="0.9" transform="rotate(-42 28.3 26.5)"/><rect x="15.7" y="25.5" width="1.4" height="0.5" fill="#f8c838" opacity="0.9" transform="rotate(-42 15.7 25.5)"/><rect x="28.7" y="9.1" width="3.7" height="1.4" fill="#f8c838" opacity="0.5" transform="rotate(-42 28.7 9.1)"/><rect x="37.3" y="9.9" width="3.8" height="1.4" fill="#f8c838" opacity="0.5" transform="rotate(-42 37.3 9.9)"/><rect x="23.4" y="11.6" width="2.2" height="0.8" fill="#e89818" opacity="0.8" transform="rotate(-42 23.4 11.6)"/><rect x="35.1" y="2.6" width="2.5" height="1" fill="#c87810" opacity="0.8" transform="rotate(-42 35.1 2.6)"/><rect x="32.8" y="19.6" width="1.4" height="0.5" fill="#c87810" opacity="0.8" transform="rotate(-42 32.8 19.6)"/><rect x="43.1" y="3.8" width="3.6" height="1.4" fill="#f8c838" opacity="0.5" transform="rotate(-42 43.1 3.8)"/><rect x="51.2" y="3.8" width="3.1" height="1.2" fill="#d88814" opacity="0.5" transform="rotate(-42 51.2 3.8)"/><rect x="30.5" y="21.8" width="2.1" height="0.8" fill="#f0b828" opacity="0.6" transform="rotate(-42 30.5 21.8)"/><rect x="25.6" y="15.8" width="2.3" height="0.9" fill="#c87810" opacity="0.5" transform="rotate(-42 25.6 15.8)"/><rect x="46" y="8.9" width="3" height="1.1" fill="#f8c838" opacity="0.6" transform="rotate(-42 46 8.9)"/><rect x="39.4" y="14.2" width="3.3" height="1.2" fill="#f0b828" opacity="0.9" transform="rotate(-42 39.4 14.2)"/><rect x="25.7" y="29.8" width="2" height="0.8" fill="#a05a0c" opacity="0.7" transform="rotate(-42 25.7 29.8)"/><rect x="41.9" y="13.7" width="3.6" height="1.4" fill="#e89818" opacity="0.7" transform="rotate(-42 41.9 13.7)"/><rect x="29.6" y="25.1" width="3.5" height="1.3" fill="#a05a0c" opacity="0.9" transform="rotate(-42 29.6 25.1)"/><rect x="40.8" y="13.7" width="2.3" height="0.9" fill="#c87810" opacity="0.9" transform="rotate(-42 40.8 13.7)"/><rect x="22.8" y="16.5" width="2.1" height="0.8" fill="#d88814" opacity="0.6" transform="rotate(-42 22.8 16.5)"/><rect x="26.5" y="13.8" width="3" height="1.1" fill="#f0b828" opacity="0.7" transform="rotate(-42 26.5 13.8)"/><rect x="48.8" y="4.5" width="3.1" height="1.2" fill="#a05a0c" opacity="0.5" transform="rotate(-42 48.8 4.5)"/><rect x="5.5" y="35.9" width="1.9" height="0.7" fill="#f8c838" opacity="0.8" transform="rotate(-42 5.5 35.9)"/><rect x="12.7" y="31.1" width="1.5" height="0.6" fill="#d88814" opacity="0.8" transform="rotate(-42 12.7 31.1)"/><rect x="17.5" y="31.4" width="2.8" height="1.1" fill="#e89818" opacity="0.7" transform="rotate(-42 17.5 31.4)"/><rect x="-0.4" y="33.6" width="2.5" height="0.9" fill="#a05a0c" opacity="0.7" transform="rotate(-42 -0.4 33.6)"/><rect x="10.9" y="40.6" width="1.4" height="0.5" fill="#f8c838" opacity="0.8" transform="rotate(-42 10.9 40.6)"/><rect x="37.1" y="18.4" width="3.3" height="1.2" fill="#d88814" opacity="0.6" transform="rotate(-42 37.1 18.4)"/><rect x="53.8" y="2" width="2.4" height="0.9" fill="#f8c838" opacity="0.8" transform="rotate(-42 53.8 2)"/><rect x="52.3" y="1.2" width="2.3" height="0.8" fill="#f8c838" opacity="0.7" transform="rotate(-42 52.3 1.2)"/><rect x="27.5" y="19.6" width="3.7" height="1.4" fill="#d88814" opacity="0.8" transform="rotate(-42 27.5 19.6)"/><rect x="23.6" y="29.2" width="3.6" height="1.3" fill="#c87810" opacity="0.5" transform="rotate(-42 23.6 29.2)"/><rect x="11.3" y="44.2" width="2.4" height="0.9" fill="#e89818" opacity="0.5" transform="rotate(-42 11.3 44.2)"/><rect x="16.1" y="32.8" width="2.8" height="1.1" fill="#c87810" opacity="0.8" transform="rotate(-42 16.1 32.8)"/><rect x="14.2" y="25.5" width="2.8" height="1.1" fill="#a05a0c" opacity="0.7" transform="rotate(-42 14.2 25.5)"/><rect x="56" y="4" width="1.4" height="0.5" fill="#c87810" opacity="0.5" transform="rotate(-42 56 4)"/><rect x="22.6" y="43.3" width="1.5" height="0.6" fill="#d88814" opacity="0.6" transform="rotate(-42 22.6 43.3)"/><rect x="51.5" y="-1.6" width="1.4" height="0.5" fill="#a05a0c" opacity="0.9" transform="rotate(-42 51.5 -1.6)"/><rect x="29.2" y="22.8" width="3.2" height="1.2" fill="#f0b828" opacity="0.9" transform="rotate(-42 29.2 22.8)"/><rect x="10.9" y="36" width="1.9" height="0.7" fill="#d88814" opacity="0.5" transform="rotate(-42 10.9 36)"/><rect x="19.8" y="30.9" width="3" height="1.1" fill="#d88814" opacity="0.9" transform="rotate(-42 19.8 30.9)"/><rect x="32.3" y="23.3" width="1.4" height="0.5" fill="#f8c838" opacity="0.8" transform="rotate(-42 32.3 23.3)"/><rect x="42.9" y="5.5" width="3.6" height="1.4" fill="#e89818" opacity="0.9" transform="rotate(-42 42.9 5.5)"/><rect x="43.3" y="-0.2" width="2.5" height="0.9" fill="#d88814" opacity="0.6" transform="rotate(-42 43.3 -0.2)"/><rect x="18.4" y="27.1" width="1.4" height="0.5" fill="#d88814" opacity="0.6" transform="rotate(-42 18.4 27.1)"/><rect x="12.6" y="37.6" width="3.4" height="1.3" fill="#f8c838" opacity="0.5" transform="rotate(-42 12.6 37.6)"/><rect x="33.1" y="21.9" width="2.4" height="0.9" fill="#f8c838" opacity="0.6" transform="rotate(-42 33.1 21.9)"/><rect x="26.2" y="25.4" width="1.8" height="0.7" fill="#d88814" opacity="0.9" transform="rotate(-42 26.2 25.4)"/><rect x="6.1" y="31.3" width="3.6" height="1.4" fill="#d88814" opacity="0.7" transform="rotate(-42 6.1 31.3)"/><rect x="40.9" y="8.5" width="3.1" height="1.1" fill="#a05a0c" opacity="0.9" transform="rotate(-42 40.9 8.5)"/><rect x="35.3" y="22" width="2" height="0.8" fill="#a05a0c" opacity="0.9" transform="rotate(-42 35.3 22)"/><rect x="20.1" y="34" width="3.5" height="1.3" fill="#a05a0c" opacity="0.7" transform="rotate(-42 20.1 34)"/><rect x="21.8" y="35.7" width="2.1" height="0.8" fill="#c87810" opacity="0.7" transform="rotate(-42 21.8 35.7)"/><rect x="40.4" y="1.7" width="2.4" height="0.9" fill="#e89818" opacity="0.7" transform="rotate(-42 40.4 1.7)"/><rect x="43.7" y="1.5" width="2" height="0.8" fill="#f8c838" opacity="0.5" transform="rotate(-42 43.7 1.5)"/><rect x="44.1" y="15.8" width="3.7" height="1.4" fill="#c87810" opacity="0.8" transform="rotate(-42 44.1 15.8)"/><rect x="5.5" y="38.9" width="1.4" height="0.5" fill="#f8c838" opacity="0.8" transform="rotate(-42 5.5 38.9)"/><rect x="43.2" y="8.1" width="2.9" height="1.1" fill="#f8c838" opacity="0.7" transform="rotate(-42 43.2 8.1)"/><rect x="15.9" y="34.7" width="3.7" height="1.4" fill="#f8c838" opacity="0.7" transform="rotate(-42 15.9 34.7)"/><rect x="38.7" y="16.1" width="2.6" height="1" fill="#e89818" opacity="0.9" transform="rotate(-42 38.7 16.1)"/><rect x="28.4" y="29.1" width="3.7" height="1.4" fill="#f8c838" opacity="0.7" transform="rotate(-42 28.4 29.1)"/><rect x="48.5" y="-5.4" width="2.8" height="1" fill="#d88814" opacity="0.7" transform="rotate(-42 48.5 -5.4)"/><rect x="40.7" y="13.8" width="3.7" height="1.4" fill="#e89818" opacity="0.5" transform="rotate(-42 40.7 13.8)"/><rect x="25.7" y="17.2" width="2.5" height="0.9" fill="#c87810" opacity="0.8" transform="rotate(-42 25.7 17.2)"/><rect x="24.9" y="30.9" width="1.7" height="0.6" fill="#e89818" opacity="0.5" transform="rotate(-42 24.9 30.9)"/><rect x="27.4" y="27.2" width="2.7" height="1" fill="#d88814" opacity="0.9" transform="rotate(-42 27.4 27.2)"/><rect x="39.6" y="1.1" width="2.8" height="1" fill="#c87810" opacity="0.9" transform="rotate(-42 39.6 1.1)"/><rect x="13.8" y="35.5" width="2.6" height="1" fill="#c87810" opacity="0.8" transform="rotate(-42 13.8 35.5)"/><rect x="16.8" y="34.9" width="2.9" height="1.1" fill="#f8c838" opacity="0.8" transform="rotate(-42 16.8 34.9)"/><rect x="45.8" y="0.2" width="1.4" height="0.5" fill="#e89818" opacity="0.6" transform="rotate(-42 45.8 0.2)"/><rect x="31" y="21.7" width="2.2" height="0.8" fill="#e89818" opacity="0.9" transform="rotate(-42 31 21.7)"/><rect x="42.3" y="10.6" width="1.6" height="0.6" fill="#c87810" opacity="0.5" transform="rotate(-42 42.3 10.6)"/><rect x="26.2" y="27.9" width="1.6" height="0.6" fill="#f8c838" opacity="0.8" transform="rotate(-42 26.2 27.9)"/><rect x="50.8" y="5.6" width="1.6" height="0.6" fill="#e89818" opacity="0.5" transform="rotate(-42 50.8 5.6)"/><rect x="14.5" y="41.2" width="3.8" height="1.4" fill="#d88814" opacity="0.6" transform="rotate(-42 14.5 41.2)"/><rect x="28.3" y="22.4" width="3.2" height="1.2" fill="#e89818" opacity="0.5" transform="rotate(-42 28.3 22.4)"/><rect x="18.4" y="36.7" width="3.5" height="1.3" fill="#c87810" opacity="0.5" transform="rotate(-42 18.4 36.7)"/><rect x="25.2" y="29.5" width="2.3" height="0.8" fill="#e89818" opacity="0.6" transform="rotate(-42 25.2 29.5)"/><rect x="11.5" y="29.4" width="1.4" height="0.5" fill="#f8c838" opacity="0.8" transform="rotate(-42 11.5 29.4)"/><rect x="19.6" y="15.4" width="2.2" height="0.8" fill="#e89818" opacity="0.9" transform="rotate(-42 19.6 15.4)"/><rect x="0.5" y="30.9" width="1.4" height="0.5" fill="#f0b828" opacity="0.9" transform="rotate(-42 0.5 30.9)"/><rect x="7.1" y="26.6" width="3.8" height="1.4" fill="#f8c838" opacity="0.9" transform="rotate(-42 7.1 26.6)"/><rect x="10.9" y="38.2" width="3.3" height="1.3" fill="#d88814" opacity="0.8" transform="rotate(-42 10.9 38.2)"/><rect x="46.4" y="3.7" width="3.6" height="1.4" fill="#e89818" opacity="0.7" transform="rotate(-42 46.4 3.7)"/><rect x="45.3" y="-4.8" width="1.6" height="0.6" fill="#f0b828" opacity="0.7" transform="rotate(-42 45.3 -4.8)"/><rect x="31.9" y="22.1" width="2.6" height="1" fill="#d88814" opacity="0.9" transform="rotate(-42 31.9 22.1)"/><rect x="20.9" y="15.1" width="1.9" height="0.7" fill="#f0b828" opacity="0.9" transform="rotate(-42 20.9 15.1)"/><rect x="8" y="26" width="3.1" height="1.2" fill="#d88814" opacity="0.5" transform="rotate(-42 8 26)"/><rect x="33.7" y="11.3" width="2.6" height="1" fill="#f8c838" opacity="0.5" transform="rotate(-42 33.7 11.3)"/><rect x="13.4" y="35" width="3.4" height="1.3" fill="#e89818" opacity="0.9" transform="rotate(-42 13.4 35)"/><rect x="22.1" y="36.5" width="2.2" height="0.8" fill="#d88814" opacity="0.7" transform="rotate(-42 22.1 36.5)"/><rect x="4.5" y="25.7" width="2.9" height="1.1" fill="#e89818" opacity="0.7" transform="rotate(-42 4.5 25.7)"/><rect x="0.4" y="34" width="3.3" height="1.2" fill="#f0b828" opacity="0.7" transform="rotate(-42 0.4 34)"/><rect x="12" y="25.4" width="1.8" height="0.7" fill="#e89818" opacity="0.9" transform="rotate(-42 12 25.4)"/><rect x="43.3" y="5" width="1.6" height="0.6" fill="#c87810" opacity="0.9" transform="rotate(-42 43.3 5)"/><rect x="20.7" y="14.3" width="1.3" height="0.5" fill="#a05a0c" opacity="0.8" transform="rotate(-42 20.7 14.3)"/><rect x="52.8" y="0.9" width="3.7" height="1.4" fill="#a05a0c" opacity="0.5" transform="rotate(-42 52.8 0.9)"/><rect x="50.3" y="-0.6" width="2.4" height="0.9" fill="#e89818" opacity="0.8" transform="rotate(-42 50.3 -0.6)"/><rect x="30.8" y="20.6" width="3.8" height="1.4" fill="#f0b828" opacity="0.6" transform="rotate(-42 30.8 20.6)"/><rect x="32.8" y="23.3" width="3.7" height="1.4" fill="#e89818" opacity="0.5" transform="rotate(-42 32.8 23.3)"/><rect x="20.4" y="45.2" width="2.7" height="1" fill="#a05a0c" opacity="0.7" transform="rotate(-42 20.4 45.2)"/><rect x="20.4" y="27.9" width="2.1" height="0.8" fill="#a05a0c" opacity="0.8" transform="rotate(-42 20.4 27.9)"/><rect x="18.5" y="28.2" width="3.2" height="1.2" fill="#e89818" opacity="0.6" transform="rotate(-42 18.5 28.2)"/><rect x="42.6" y="15.8" width="1.7" height="0.6" fill="#f8c838" opacity="0.8" transform="rotate(-42 42.6 15.8)"/><rect x="19.4" y="25.2" width="1.4" height="0.5" fill="#f0b828" opacity="0.5" transform="rotate(-42 19.4 25.2)"/><rect x="36.6" y="20.9" width="3.1" height="1.2" fill="#e89818" opacity="0.9" transform="rotate(-42 36.6 20.9)"/><rect x="37.8" y="12.5" width="3.5" height="1.3" fill="#c87810" opacity="0.5" transform="rotate(-42 37.8 12.5)"/><rect x="13.8" y="26.6" width="2.9" height="1.1" fill="#c87810" opacity="0.9" transform="rotate(-42 13.8 26.6)"/><rect x="14.4" y="34.8" width="1.7" height="0.6" fill="#f0b828" opacity="0.6" transform="rotate(-42 14.4 34.8)"/><rect x="41.8" y="17.4" width="1.9" height="0.7" fill="#d88814" opacity="0.9" transform="rotate(-42 41.8 17.4)"/><rect x="40.1" y="16.9" width="3.2" height="1.2" fill="#e89818" opacity="0.5" transform="rotate(-42 40.1 16.9)"/><rect x="31.3" y="24.5" width="3.4" height="1.3" fill="#c87810" opacity="0.7" transform="rotate(-42 31.3 24.5)"/><rect x="49.8" y="-5.3" width="1.4" height="0.5" fill="#d88814" opacity="0.8" transform="rotate(-42 49.8 -5.3)"/><rect x="42.2" y="11.6" width="3.5" height="1.3" fill="#a05a0c" opacity="0.7" transform="rotate(-42 42.2 11.6)"/><rect x="9.2" y="42.2" width="1.7" height="0.6" fill="#e89818" opacity="0.6" transform="rotate(-42 9.2 42.2)"/><rect x="-3.3" y="28.6" width="2.4" height="0.9" fill="#a05a0c" opacity="0.8" transform="rotate(-42 -3.3 28.6)"/><rect x="12.2" y="44.9" width="2.1" height="0.8" fill="#f8c838" opacity="0.5" transform="rotate(-42 12.2 44.9)"/><rect x="34" y="23.9" width="1.5" height="0.6" fill="#e89818" opacity="0.6" transform="rotate(-42 34 23.9)"/><rect x="-5.8" y="26.1" width="3.4" height="1.3" fill="#e89818" opacity="0.8" transform="rotate(-42 -5.8 26.1)"/><rect x="42.2" y="11.2" width="1.6" height="0.6" fill="#e89818" opacity="0.8" transform="rotate(-42 42.2 11.2)"/><rect x="32.7" y="22" width="3.6" height="1.4" fill="#f0b828" opacity="0.6" transform="rotate(-42 32.7 22)"/><rect x="30.5" y="15.1" width="3.2" height="1.2" fill="#a05a0c" opacity="0.5" transform="rotate(-42 30.5 15.1)"/><rect x="54.3" y="-1.6" width="2.9" height="1.1" fill="#f0b828" opacity="0.9" transform="rotate(-42 54.3 -1.6)"/><rect x="25.5" y="25.9" width="3.3" height="1.2" fill="#f0b828" opacity="0.7" transform="rotate(-42 25.5 25.9)"/><rect x="12.7" y="32.1" width="2.4" height="0.9" fill="#d88814" opacity="0.9" transform="rotate(-42 12.7 32.1)"/><rect x="7.5" y="41.6" width="2.7" height="1" fill="#d88814" opacity="0.9" transform="rotate(-42 7.5 41.6)"/><rect x="48.4" y="9.7" width="3.4" height="1.3" fill="#f0b828" opacity="0.6" transform="rotate(-42 48.4 9.7)"/><rect x="14.4" y="34.9" width="1.6" height="0.6" fill="#e89818" opacity="0.8" transform="rotate(-42 14.4 34.9)"/><rect x="6.9" y="26.7" width="1.6" height="0.6" fill="#e89818" opacity="0.9" transform="rotate(-42 6.9 26.7)"/><rect x="25.4" y="33.5" width="3.5" height="1.3" fill="#f0b828" opacity="0.9" transform="rotate(-42 25.4 33.5)"/><rect x="34.7" y="12.2" width="1.4" height="0.5" fill="#d88814" opacity="0.7" transform="rotate(-42 34.7 12.2)"/><rect x="18.6" y="28.6" width="1.4" height="0.5" fill="#f0b828" opacity="0.9" transform="rotate(-42 18.6 28.6)"/><rect x="46.8" y="9.4" width="3.6" height="1.4" fill="#c87810" opacity="0.8" transform="rotate(-42 46.8 9.4)"/><rect x="44" y="15.2" width="1.6" height="0.6" fill="#f0b828" opacity="0.5" transform="rotate(-42 44 15.2)"/><rect x="37.4" y="6.6" width="3.2" height="1.2" fill="#f8c838" opacity="0.8" transform="rotate(-42 37.4 6.6)"/><rect x="29.8" y="16.4" width="1.7" height="0.6" fill="#e89818" opacity="0.8" transform="rotate(-42 29.8 16.4)"/><rect x="23.4" y="31.7" width="2.3" height="0.9" fill="#c87810" opacity="0.6" transform="rotate(-42 23.4 31.7)"/><rect x="11.9" y="31.1" width="3.1" height="1.2" fill="#f0b828" opacity="0.8" transform="rotate(-42 11.9 31.1)"/><rect x="27.4" y="15.5" width="2.4" height="0.9" fill="#d88814" opacity="0.6" transform="rotate(-42 27.4 15.5)"/><rect x="54.3" y="-0.9" width="2.2" height="0.8" fill="#e89818" opacity="0.9" transform="rotate(-42 54.3 -0.9)"/><rect x="15.5" y="28.3" width="2.5" height="1" fill="#f0b828" opacity="0.6" transform="rotate(-42 15.5 28.3)"/><rect x="7.7" y="40.3" width="2.9" height="1.1" fill="#a05a0c" opacity="0.6" transform="rotate(-42 7.7 40.3)"/><rect x="21.6" y="40" width="1.5" height="0.6" fill="#c87810" opacity="0.6" transform="rotate(-42 21.6 40)"/><rect x="47" y="6.3" width="2.6" height="1" fill="#e89818" opacity="0.7" transform="rotate(-42 47 6.3)"/><rect x="32.2" y="20.4" width="3.4" height="1.3" fill="#c87810" opacity="0.5" transform="rotate(-42 32.2 20.4)"/><rect x="48.2" y="-1.1" width="2.9" height="1.1" fill="#f0b828" opacity="0.6" transform="rotate(-42 48.2 -1.1)"/><rect x="7.1" y="35.5" width="3.1" height="1.2" fill="#c87810" opacity="0.7" transform="rotate(-42 7.1 35.5)"/><rect x="24.3" y="23.4" width="3.8" height="1.4" fill="#d88814" opacity="0.5" transform="rotate(-42 24.3 23.4)"/><rect x="9.1" y="35" width="1.9" height="0.7" fill="#f8c838" opacity="0.7" transform="rotate(-42 9.1 35)"/><rect x="46.4" y="8.8" width="2.1" height="0.8" fill="#f0b828" opacity="0.6" transform="rotate(-42 46.4 8.8)"/><rect x="52.1" y="-2.1" width="1.6" height="0.6" fill="#f8c838" opacity="0.9" transform="rotate(-42 52.1 -2.1)"/><rect x="14.1" y="28.8" width="3.8" height="1.4" fill="#c87810" opacity="0.7" transform="rotate(-42 14.1 28.8)"/><rect x="21.2" y="25.4" width="2.7" height="1" fill="#f0b828" opacity="0.9" transform="rotate(-42 21.2 25.4)"/><rect x="11.4" y="34.7" width="2" height="0.7" fill="#f8c838" opacity="0.7" transform="rotate(-42 11.4 34.7)"/><rect x="35.8" y="13.5" width="2.6" height="1" fill="#c87810" opacity="0.9" transform="rotate(-42 35.8 13.5)"/><rect x="35.3" y="11.7" width="2.2" height="0.8" fill="#e89818" opacity="0.7" transform="rotate(-42 35.3 11.7)"/><rect x="24.5" y="33.4" width="2.3" height="0.9" fill="#d88814" opacity="0.5" transform="rotate(-42 24.5 33.4)"/><rect x="19.6" y="28.3" width="1.4" height="0.5" fill="#c87810" opacity="0.9" transform="rotate(-42 19.6 28.3)"/><rect x="38.1" y="11.8" width="2.5" height="0.9" fill="#d88814" opacity="0.8" transform="rotate(-42 38.1 11.8)"/><rect x="53.1" y="0.2" width="3.5" height="1.3" fill="#a05a0c" opacity="0.7" transform="rotate(-42 53.1 0.2)"/><rect x="38.9" y="17.8" width="3.2" height="1.2" fill="#a05a0c" opacity="0.5" transform="rotate(-42 38.9 17.8)"/><rect x="0.7" y="25.3" width="1.4" height="0.5" fill="#f8c838" opacity="0.5" transform="rotate(-42 0.7 25.3)"/><rect x="25.7" y="25.1" width="3.3" height="1.2" fill="#f8c838" opacity="0.8" transform="rotate(-42 25.7 25.1)"/><rect x="55.8" y="-0.9" width="3.5" height="1.3" fill="#e89818" opacity="0.7" transform="rotate(-42 55.8 -0.9)"/><rect x="43.1" y="16" width="1.7" height="0.6" fill="#f0b828" opacity="0.6" transform="rotate(-42 43.1 16)"/><rect x="28.1" y="17.7" width="3.4" height="1.3" fill="#d88814" opacity="0.8" transform="rotate(-42 28.1 17.7)"/><rect x="35.2" y="20.1" width="2.1" height="0.8" fill="#f0b828" opacity="0.5" transform="rotate(-42 35.2 20.1)"/><rect x="7.1" y="37.3" width="3.6" height="1.3" fill="#f8c838" opacity="0.9" transform="rotate(-42 7.1 37.3)"/><rect x="20.8" y="31.6" width="1.6" height="0.6" fill="#f8c838" opacity="0.9" transform="rotate(-42 20.8 31.6)"/><rect x="43.8" y="4.6" width="2.8" height="1" fill="#e89818" opacity="0.7" transform="rotate(-42 43.8 4.6)"/><rect x="17" y="27.3" width="2" height="0.7" fill="#f0b828" opacity="0.8" transform="rotate(-42 17 27.3)"/><rect x="22.8" y="33.8" width="1.7" height="0.7" fill="#e89818" opacity="0.8" transform="rotate(-42 22.8 33.8)"/><rect x="47.5" y="-2.1" width="3.6" height="1.4" fill="#f8c838" opacity="0.5" transform="rotate(-42 47.5 -2.1)"/><rect x="23.4" y="22.4" width="3.7" height="1.4" fill="#f0b828" opacity="0.6" transform="rotate(-42 23.4 22.4)"/><rect x="32.3" y="0" width="3" height="1.1" fill="#d88814" opacity="0.9" transform="rotate(-42 32.3 0)"/><rect x="22.2" y="35.5" width="1.3" height="0.5" fill="#c87810" opacity="0.7" transform="rotate(-42 22.2 35.5)"/><rect x="40.3" y="9.4" width="3.4" height="1.3" fill="#f8c838" opacity="0.8" transform="rotate(-42 40.3 9.4)"/><rect x="18" y="18.1" width="2.6" height="1" fill="#c87810" opacity="0.7" transform="rotate(-42 18 18.1)"/><rect x="47.6" y="6.6" width="3.7" height="1.4" fill="#d88814" opacity="0.8" transform="rotate(-42 47.6 6.6)"/><rect x="52.4" y="4.4" width="3.3" height="1.2" fill="#f0b828" opacity="0.6" transform="rotate(-42 52.4 4.4)"/><rect x="41.4" y="10.8" width="1.4" height="0.5" fill="#d88814" opacity="0.5" transform="rotate(-42 41.4 10.8)"/><rect x="46.3" y="9.7" width="1.7" height="0.6" fill="#f0b828" opacity="0.7" transform="rotate(-42 46.3 9.7)"/><rect x="30.6" y="18.2" width="3.1" height="1.2" fill="#e89818" opacity="0.5" transform="rotate(-42 30.6 18.2)"/><rect x="-3.3" y="22.2" width="2.7" height="1" fill="#d88814" opacity="0.7" transform="rotate(-42 -3.3 22.2)"/><rect x="25.2" y="15.2" width="2.5" height="0.9" fill="#a05a0c" opacity="0.6" transform="rotate(-42 25.2 15.2)"/><rect x="17.1" y="42.9" width="2.8" height="1" fill="#a05a0c" opacity="0.8" transform="rotate(-42 17.1 42.9)"/><rect x="11.6" y="20.8" width="3.7" height="1.4" fill="#a05a0c" opacity="0.6" transform="rotate(-42 11.6 20.8)"/><rect x="33.1" y="25.6" width="2.4" height="0.9" fill="#a05a0c" opacity="0.6" transform="rotate(-42 33.1 25.6)"/><rect x="21.1" y="22" width="3.6" height="1.3" fill="#e89818" opacity="0.8" transform="rotate(-42 21.1 22)"/><rect x="16.6" y="29.6" width="3.1" height="1.1" fill="#f0b828" opacity="0.7" transform="rotate(-42 16.6 29.6)"/><rect x="55.5" y="-0.1" width="2.5" height="0.9" fill="#e89818" opacity="0.5" transform="rotate(-42 55.5 -0.1)"/><rect x="25.6" y="25.6" width="2.5" height="0.9" fill="#e89818" opacity="0.9" transform="rotate(-42 25.6 25.6)"/><rect x="28.6" y="28.4" width="3.1" height="1.2" fill="#d88814" opacity="0.7" transform="rotate(-42 28.6 28.4)"/><rect x="25" y="21" width="2.8" height="1.1" fill="#f0b828" opacity="0.9" transform="rotate(-42 25 21)"/><rect x="29.7" y="22.1" width="3.8" height="1.4" fill="#f8c838" opacity="0.6" transform="rotate(-42 29.7 22.1)"/><rect x="30.2" y="26.1" width="2" height="0.8" fill="#d88814" opacity="0.5" transform="rotate(-42 30.2 26.1)"/><rect x="14.3" y="47.8" width="2.6" height="1" fill="#f0b828" opacity="0.8" transform="rotate(-42 14.3 47.8)"/><rect x="31" y="16" width="3.7" height="1.4" fill="#c87810" opacity="0.8" transform="rotate(-42 31 16)"/><rect x="19" y="12.9" width="3.1" height="1.2" fill="#c87810" opacity="0.5" transform="rotate(-42 19 12.9)"/><rect x="46.9" y="1" width="3.2" height="1.2" fill="#c87810" opacity="0.6" transform="rotate(-42 46.9 1)"/><rect x="24.9" y="26.1" width="2.5" height="0.9" fill="#e89818" opacity="0.9" transform="rotate(-42 24.9 26.1)"/><rect x="28" y="10.5" width="1.3" height="0.5" fill="#e89818" opacity="0.6" transform="rotate(-42 28 10.5)"/><rect x="18.7" y="22.3" width="3.5" height="1.3" fill="#f0b828" opacity="0.6" transform="rotate(-42 18.7 22.3)"/><rect x="39.5" y="15.7" width="2.5" height="1" fill="#e89818" opacity="0.9" transform="rotate(-42 39.5 15.7)"/><rect x="40.8" y="13.4" width="2.8" height="1" fill="#f8c838" opacity="0.5" transform="rotate(-42 40.8 13.4)"/><rect x="18.8" y="28.7" width="3.4" height="1.3" fill="#d88814" opacity="0.9" transform="rotate(-42 18.8 28.7)"/><rect x="56.6" y="0.1" width="1.6" height="0.6" fill="#f0b828" opacity="0.7" transform="rotate(-42 56.6 0.1)"/><rect x="44.5" y="2.1" width="3.2" height="1.2" fill="#f0b828" opacity="0.9" transform="rotate(-42 44.5 2.1)"/><rect x="30.7" y="22" width="3.5" height="1.3" fill="#f0b828" opacity="0.6" transform="rotate(-42 30.7 22)"/><rect x="46.8" y="9.9" width="3.3" height="1.2" fill="#a05a0c" opacity="0.9" transform="rotate(-42 46.8 9.9)"/><rect x="39.4" y="18.1" width="1.6" height="0.6" fill="#c87810" opacity="0.6" transform="rotate(-42 39.4 18.1)"/><rect x="45.1" y="8.2" width="2" height="0.8" fill="#a05a0c" opacity="0.5" transform="rotate(-42 45.1 8.2)"/><rect x="29.2" y="22.7" width="1.3" height="0.5" fill="#a05a0c" opacity="0.8" transform="rotate(-42 29.2 22.7)"/><rect x="48.4" y="6.1" width="1.6" height="0.6" fill="#f8c838" opacity="0.5" transform="rotate(-42 48.4 6.1)"/><rect x="21.6" y="34.3" width="3.7" height="1.4" fill="#e89818" opacity="0.8" transform="rotate(-42 21.6 34.3)"/><rect x="52.2" y="3.7" width="1.9" height="0.7" fill="#c87810" opacity="0.6" transform="rotate(-42 52.2 3.7)"/><rect x="13" y="36.7" width="3.6" height="1.3" fill="#d88814" opacity="0.8" transform="rotate(-42 13 36.7)"/><rect x="15.3" y="36.5" width="2.4" height="0.9" fill="#f8c838" opacity="0.7" transform="rotate(-42 15.3 36.5)"/><rect x="43.2" y="11.4" width="2" height="0.8" fill="#a05a0c" opacity="0.9" transform="rotate(-42 43.2 11.4)"/><rect x="26.5" y="26.9" width="3.2" height="1.2" fill="#a05a0c" opacity="0.7" transform="rotate(-42 26.5 26.9)"/><rect x="36.9" y="17.1" width="1.4" height="0.5" fill="#d88814" opacity="0.9" transform="rotate(-42 36.9 17.1)"/><rect x="22.2" y="33.5" width="3.2" height="1.2" fill="#c87810" opacity="0.8" transform="rotate(-42 22.2 33.5)"/><rect x="10.8" y="41.9" width="3.5" height="1.3" fill="#f0b828" opacity="0.9" transform="rotate(-42 10.8 41.9)"/><rect x="28.5" y="9.8" width="2.6" height="1" fill="#d88814" opacity="0.7" transform="rotate(-42 28.5 9.8)"/><rect x="12.1" y="38.8" width="2.2" height="0.8" fill="#e89818" opacity="0.6" transform="rotate(-42 12.1 38.8)"/><rect x="15.5" y="45" width="1.5" height="0.6" fill="#c87810" opacity="0.7" transform="rotate(-42 15.5 45)"/><rect x="36" y="15.8" width="2.8" height="1.1" fill="#e89818" opacity="0.6" transform="rotate(-42 36 15.8)"/><rect x="24.3" y="41.1" width="3.3" height="1.2" fill="#d88814" opacity="0.8" transform="rotate(-42 24.3 41.1)"/><rect x="27.9" y="27.2" width="1.8" height="0.7" fill="#a05a0c" opacity="0.5" transform="rotate(-42 27.9 27.2)"/><rect x="44" y="1.7" width="3.2" height="1.2" fill="#c87810" opacity="0.9" transform="rotate(-42 44 1.7)"/><rect x="10.8" y="37.9" width="3.2" height="1.2" fill="#c87810" opacity="0.8" transform="rotate(-42 10.8 37.9)"/><rect x="22.6" y="28.9" width="3.6" height="1.4" fill="#e89818" opacity="0.5" transform="rotate(-42 22.6 28.9)"/><rect x="3.3" y="34.7" width="2.9" height="1.1" fill="#f8c838" opacity="0.6" transform="rotate(-42 3.3 34.7)"/><rect x="36.6" y="4.3" width="2.3" height="0.8" fill="#f8c838" opacity="0.5" transform="rotate(-42 36.6 4.3)"/><rect x="37" y="16" width="1.6" height="0.6" fill="#f8c838" opacity="0.9" transform="rotate(-42 37 16)"/><rect x="35.9" y="16.2" width="1.6" height="0.6" fill="#f0b828" opacity="0.9" transform="rotate(-42 35.9 16.2)"/><rect x="43.5" y="12.7" width="3" height="1.1" fill="#f0b828" opacity="0.7" transform="rotate(-42 43.5 12.7)"/><rect x="17.2" y="37.4" width="3.1" height="1.2" fill="#f0b828" opacity="0.5" transform="rotate(-42 17.2 37.4)"/><rect x="43.3" y="11.8" width="2.9" height="1.1" fill="#e89818" opacity="0.9" transform="rotate(-42 43.3 11.8)"/><rect x="37.7" y="16.1" width="3.2" height="1.2" fill="#f0b828" opacity="0.7" transform="rotate(-42 37.7 16.1)"/><rect x="10.9" y="45.4" width="2.7" height="1" fill="#f8c838" opacity="0.5" transform="rotate(-42 10.9 45.4)"/><rect x="47" y="-1.3" width="2.8" height="1.1" fill="#f8c838" opacity="0.7" transform="rotate(-42 47 -1.3)"/><rect x="53.1" y="9" width="3.1" height="1.2" fill="#e89818" opacity="0.5" transform="rotate(-42 53.1 9)"/><rect x="38.9" y="15.8" width="3.8" height="1.4" fill="#f8c838" opacity="0.7" transform="rotate(-42 38.9 15.8)"/><rect x="52.5" y="-0.3" width="3.1" height="1.2" fill="#f0b828" opacity="0.8" transform="rotate(-42 52.5 -0.3)"/><rect x="46.1" y="10.9" width="2.7" height="1" fill="#a05a0c" opacity="0.7" transform="rotate(-42 46.1 10.9)"/><rect x="11.3" y="39.9" width="2.6" height="1" fill="#c87810" opacity="0.6" transform="rotate(-42 11.3 39.9)"/><rect x="45.7" y="1.9" width="2.5" height="1" fill="#f8c838" opacity="0.6" transform="rotate(-42 45.7 1.9)"/><rect x="31.2" y="28.2" width="1.5" height="0.6" fill="#c87810" opacity="0.9" transform="rotate(-42 31.2 28.2)"/><rect x="46.8" y="6.4" width="3.3" height="1.2" fill="#f8c838" opacity="0.7" transform="rotate(-42 46.8 6.4)"/><rect x="32.2" y="20.9" width="2.9" height="1.1" fill="#c87810" opacity="0.9" transform="rotate(-42 32.2 20.9)"/><rect x="35.5" y="7.5" width="2.2" height="0.8" fill="#c87810" opacity="0.8" transform="rotate(-42 35.5 7.5)"/><rect x="32.8" y="14.4" width="2.8" height="1.1" fill="#e89818" opacity="0.8" transform="rotate(-42 32.8 14.4)"/><rect x="20" y="8.7" width="2.8" height="1.1" fill="#d88814" opacity="0.5" transform="rotate(-42 20 8.7)"/><rect x="31.2" y="22" width="3.1" height="1.1" fill="#f8c838" opacity="0.5" transform="rotate(-42 31.2 22)"/><rect x="21.5" y="15.8" width="3.8" height="1.4" fill="#d88814" opacity="0.7" transform="rotate(-42 21.5 15.8)"/><rect x="30.4" y="11.6" width="1.6" height="0.6" fill="#a05a0c" opacity="0.8" transform="rotate(-42 30.4 11.6)"/><rect x="14.1" y="35.9" width="2.2" height="0.8" fill="#c87810" opacity="0.6" transform="rotate(-42 14.1 35.9)"/><rect x="32.2" y="23.9" width="3.6" height="1.3" fill="#c87810" opacity="0.9" transform="rotate(-42 32.2 23.9)"/><rect x="6.3" y="28.3" width="1.4" height="0.5" fill="#f8c838" opacity="0.5" transform="rotate(-42 6.3 28.3)"/><rect x="23" y="32.3" width="2.3" height="0.9" fill="#c87810" opacity="0.7" transform="rotate(-42 23 32.3)"/><rect x="49.4" y="5.5" width="3.8" height="1.4" fill="#f0b828" opacity="0.8" transform="rotate(-42 49.4 5.5)"/><rect x="33.6" y="18.4" width="3.3" height="1.2" fill="#e89818" opacity="0.6" transform="rotate(-42 33.6 18.4)"/><rect x="51.2" y="4.4" width="3.5" height="1.3" fill="#c87810" opacity="0.9" transform="rotate(-42 51.2 4.4)"/><rect x="38.2" y="10.4" width="1.8" height="0.7" fill="#c87810" opacity="0.6" transform="rotate(-42 38.2 10.4)"/><rect x="16.3" y="29.5" width="2.2" height="0.8" fill="#d88814" opacity="0.8" transform="rotate(-42 16.3 29.5)"/><rect x="37.2" y="8.8" width="2.5" height="0.9" fill="#a05a0c" opacity="0.5" transform="rotate(-42 37.2 8.8)"/><rect x="20.7" y="32.5" width="2.9" height="1.1" fill="#a05a0c" opacity="0.7" transform="rotate(-42 20.7 32.5)"/><rect x="16.8" y="28.8" width="2.6" height="1" fill="#c87810" opacity="0.8" transform="rotate(-42 16.8 28.8)"/><rect x="4.1" y="22.6" width="2.9" height="1.1" fill="#e89818" opacity="0.6" transform="rotate(-42 4.1 22.6)"/><rect x="12" y="23.9" width="3.7" height="1.4" fill="#f8c838" opacity="0.9" transform="rotate(-42 12 23.9)"/><rect x="24.3" y="28.3" width="1.6" height="0.6" fill="#f8c838" opacity="0.6" transform="rotate(-42 24.3 28.3)"/><rect x="1" y="25.1" width="2.5" height="0.9" fill="#f8c838" opacity="0.7" transform="rotate(-42 1 25.1)"/><rect x="40.6" y="12" width="1.6" height="0.6" fill="#c87810" opacity="0.5" transform="rotate(-42 40.6 12)"/><rect x="40.7" y="17" width="3.3" height="1.3" fill="#f0b828" opacity="0.9" transform="rotate(-42 40.7 17)"/><rect x="42.4" y="5.4" width="1.5" height="0.6" fill="#f0b828" opacity="0.6" transform="rotate(-42 42.4 5.4)"/><rect x="37.8" y="15" width="3.4" height="1.3" fill="#d88814" opacity="0.7" transform="rotate(-42 37.8 15)"/><rect x="16.3" y="28.3" width="2.5" height="0.9" fill="#a05a0c" opacity="0.7" transform="rotate(-42 16.3 28.3)"/><rect x="43" y="16.3" width="1.7" height="0.6" fill="#c87810" opacity="0.9" transform="rotate(-42 43 16.3)"/><rect x="12.2" y="17.1" width="2.4" height="0.9" fill="#a05a0c" opacity="0.6" transform="rotate(-42 12.2 17.1)"/><rect x="51.2" y="4.5" width="3.5" height="1.3" fill="#f8c838" opacity="0.8" transform="rotate(-42 51.2 4.5)"/><rect x="11.7" y="33.8" width="1.7" height="0.6" fill="#f8c838" opacity="0.7" transform="rotate(-42 11.7 33.8)"/><rect x="39.7" y="9.2" width="1.4" height="0.5" fill="#e89818" opacity="0.8" transform="rotate(-42 39.7 9.2)"/><rect x="35.9" y="21" width="1.6" height="0.6" fill="#f0b828" opacity="0.5" transform="rotate(-42 35.9 21)"/><rect x="53.5" y="-1.6" width="2.8" height="1" fill="#e89818" opacity="0.6" transform="rotate(-42 53.5 -1.6)"/><rect x="44.6" y="8.3" width="2.9" height="1.1" fill="#a05a0c" opacity="0.5" transform="rotate(-42 44.6 8.3)"/><rect x="46.5" y="1.5" width="1.9" height="0.7" fill="#c87810" opacity="0.9" transform="rotate(-42 46.5 1.5)"/><rect x="31.3" y="15.3" width="1.7" height="0.7" fill="#f0b828" opacity="0.8" transform="rotate(-42 31.3 15.3)"/><rect x="41.3" y="4.5" width="3.8" height="1.4" fill="#a05a0c" opacity="0.5" transform="rotate(-42 41.3 4.5)"/><rect x="28.6" y="22.9" width="3.3" height="1.2" fill="#a05a0c" opacity="0.9" transform="rotate(-42 28.6 22.9)"/><rect x="41.2" y="14.7" width="2.5" height="0.9" fill="#a05a0c" opacity="0.5" transform="rotate(-42 41.2 14.7)"/><rect x="19.8" y="23" width="2.4" height="0.9" fill="#f0b828" opacity="0.8" transform="rotate(-42 19.8 23)"/><rect x="18.8" y="33.4" width="3.4" height="1.3" fill="#c87810" opacity="0.9" transform="rotate(-42 18.8 33.4)"/><rect x="43.7" y="7.4" width="1.9" height="0.7" fill="#d88814" opacity="0.7" transform="rotate(-42 43.7 7.4)"/><rect x="47.2" y="9.7" width="2.3" height="0.9" fill="#f0b828" opacity="0.7" transform="rotate(-42 47.2 9.7)"/><rect x="18.4" y="33.7" width="3" height="1.1" fill="#e89818" opacity="0.6" transform="rotate(-42 18.4 33.7)"/><rect x="39.4" y="10.1" width="2.2" height="0.8" fill="#f0b828" opacity="0.9" transform="rotate(-42 39.4 10.1)"/><rect x="37.9" y="11.7" width="2.5" height="0.9" fill="#d88814" opacity="0.6" transform="rotate(-42 37.9 11.7)"/><rect x="35.3" y="27.5" width="1.5" height="0.6" fill="#f8c838" opacity="0.9" transform="rotate(-42 35.3 27.5)"/><rect x="10.8" y="41.7" width="3.1" height="1.1" fill="#f0b828" opacity="0.8" transform="rotate(-42 10.8 41.7)"/><rect x="34.6" y="15.6" width="2.7" height="1" fill="#f8c838" opacity="0.9" transform="rotate(-42 34.6 15.6)"/><rect x="50.1" y="5.7" width="1.6" height="0.6" fill="#e89818" opacity="0.7" transform="rotate(-42 50.1 5.7)"/><rect x="47.2" y="0.7" width="3.4" height="1.3" fill="#a05a0c" opacity="0.9" transform="rotate(-42 47.2 0.7)"/><rect x="42.5" y="7.8" width="3.1" height="1.2" fill="#e89818" opacity="0.5" transform="rotate(-42 42.5 7.8)"/><rect x="12.6" y="45.5" width="1.5" height="0.6" fill="#f8c838" opacity="0.5" transform="rotate(-42 12.6 45.5)"/><rect x="48.5" y="0.8" width="3.1" height="1.2" fill="#f0b828" opacity="0.8" transform="rotate(-42 48.5 0.8)"/><rect x="14.7" y="41.6" width="1.4" height="0.5" fill="#d88814" opacity="0.5" transform="rotate(-42 14.7 41.6)"/><rect x="37.9" y="14.9" width="1.3" height="0.5" fill="#f0b828" opacity="0.6" transform="rotate(-42 37.9 14.9)"/><rect x="53.2" y="-4.9" width="1.9" height="0.7" fill="#a05a0c" opacity="0.9" transform="rotate(-42 53.2 -4.9)"/><rect x="16.5" y="47.4" width="2.8" height="1" fill="#a05a0c" opacity="0.9" transform="rotate(-42 16.5 47.4)"/><rect x="23.6" y="18.2" width="1.6" height="0.6" fill="#a05a0c" opacity="0.5" transform="rotate(-42 23.6 18.2)"/><rect x="41.9" y="12.2" width="2.7" height="1" fill="#d88814" opacity="0.7" transform="rotate(-42 41.9 12.2)"/><rect x="38.2" y="11.1" width="1.9" height="0.7" fill="#f8c838" opacity="0.8" transform="rotate(-42 38.2 11.1)"/><rect x="20" y="29.6" width="1.9" height="0.7" fill="#f8c838" opacity="0.7" transform="rotate(-42 20 29.6)"/><rect x="52.9" y="2.5" width="1.8" height="0.7" fill="#d88814" opacity="0.6" transform="rotate(-42 52.9 2.5)"/><rect x="56.2" y="0.4" width="1.7" height="0.6" fill="#e89818" opacity="0.7" transform="rotate(-42 56.2 0.4)"/><rect x="40.7" y="12.7" width="3.8" height="1.4" fill="#c87810" opacity="0.7" transform="rotate(-42 40.7 12.7)"/><rect x="11.8" y="31.4" width="2.4" height="0.9" fill="#f0b828" opacity="0.7" transform="rotate(-42 11.8 31.4)"/><rect x="46.1" y="9.2" width="1.5" height="0.6" fill="#c87810" opacity="0.9" transform="rotate(-42 46.1 9.2)"/><rect x="22.9" y="29.5" width="2.6" height="1" fill="#c87810" opacity="0.9" transform="rotate(-42 22.9 29.5)"/><rect x="51.5" y="0.8" width="3.2" height="1.2" fill="#a05a0c" opacity="0.9" transform="rotate(-42 51.5 0.8)"/><rect x="18.5" y="38.8" width="1.9" height="0.7" fill="#a05a0c" opacity="0.8" transform="rotate(-42 18.5 38.8)"/><rect x="29.4" y="5.2" width="1.7" height="0.6" fill="#a05a0c" opacity="0.7" transform="rotate(-42 29.4 5.2)"/><rect x="11.5" y="38.7" width="1.4" height="0.5" fill="#c87810" opacity="0.7" transform="rotate(-42 11.5 38.7)"/><rect x="49.3" y="5" width="1.3" height="0.5" fill="#c87810" opacity="0.9" transform="rotate(-42 49.3 5)"/><rect x="26.2" y="24.9" width="2.1" height="0.8" fill="#f0b828" opacity="0.6" transform="rotate(-42 26.2 24.9)"/><rect x="48" y="5.8" width="2.4" height="0.9" fill="#e89818" opacity="0.5" transform="rotate(-42 48 5.8)"/><rect x="29.6" y="16.5" width="3.1" height="1.2" fill="#c87810" opacity="0.9" transform="rotate(-42 29.6 16.5)"/><rect x="42.2" y="8.9" width="1.4" height="0.5" fill="#d88814" opacity="0.9" transform="rotate(-42 42.2 8.9)"/><rect x="19.9" y="34.6" width="2.7" height="1" fill="#c87810" opacity="0.5" transform="rotate(-42 19.9 34.6)"/><rect x="39.4" y="-0.3" width="3" height="1.1" fill="#e89818" opacity="0.7" transform="rotate(-42 39.4 -0.3)"/><rect x="24.1" y="21.1" width="2.7" height="1" fill="#f0b828" opacity="0.8" transform="rotate(-42 24.1 21.1)"/><rect x="26" y="10.9" width="2" height="0.8" fill="#d88814" opacity="0.5" transform="rotate(-42 26 10.9)"/><rect x="20.8" y="26.9" width="2.4" height="0.9" fill="#f0b828" opacity="0.7" transform="rotate(-42 20.8 26.9)"/><rect x="32.2" y="14.3" width="2.6" height="1" fill="#f8c838" opacity="0.9" transform="rotate(-42 32.2 14.3)"/><rect x="31.6" y="18.9" width="2.9" height="1.1" fill="#f0b828" opacity="0.7" transform="rotate(-42 31.6 18.9)"/><rect x="39.3" y="14" width="3.1" height="1.2" fill="#c87810" opacity="0.9" transform="rotate(-42 39.3 14)"/><rect x="48.5" y="2.9" width="2" height="0.8" fill="#a05a0c" opacity="0.8" transform="rotate(-42 48.5 2.9)"/><rect x="17.2" y="33.6" width="1.9" height="0.7" fill="#e89818" opacity="0.7" transform="rotate(-42 17.2 33.6)"/><rect x="3.1" y="37.1" width="1.7" height="0.6" fill="#f0b828" opacity="0.5" transform="rotate(-42 3.1 37.1)"/><g filter="url(#b7a)"><path d="M36.6 20.1 L48.6 9.2" stroke="#f8c838" stroke-width="1.4" opacity=".85"/><path d="M31.7 20.4 L47.3 6.2" stroke="#f8c838" stroke-width="1.2" opacity=".85"/><path d="M36.1 15.3 L58.9 -5.6" stroke="#c88010" stroke-width="0.9" opacity=".85"/><path d="M21.1 20.5 L54.5 -10" stroke="#f0b020" stroke-width="1.2" opacity=".85"/><path d="M29 27.2 L57.7 1" stroke="#c88010" stroke-width="1" opacity=".85"/><path d="M25 26.4 L46.9 6.3" stroke="#e09818" stroke-width="0.8" opacity=".85"/><path d="M19.1 24.2 L55.8 -9.3" stroke="#c88010" stroke-width="0.9" opacity=".85"/><path d="M32.9 19.8 L49.3 4.9" stroke="#c88010" stroke-width="1.4" opacity=".85"/><path d="M27.2 26.6 L49.7 6.2" stroke="#f8c838" stroke-width="1.4" opacity=".85"/><path d="M39.4 18.2 L52.1 6.7" stroke="#f8c838" stroke-width="1.3" opacity=".85"/><path d="M32.2 19.1 L56 -2.7" stroke="#f0b020" stroke-width="1.2" opacity=".85"/><path d="M22.4 23.4 L45.6 2.3" stroke="#f8c838" stroke-width="0.8" opacity=".85"/><path d="M33.1 14.4 L53.3 -4" stroke="#f0b020" stroke-width="1.2" opacity=".85"/><path d="M35.8 22.3 L55.3 4.4" stroke="#c88010" stroke-width="0.9" opacity=".85"/><path d="M27.8 22 L47.1 4.4" stroke="#e09818" stroke-width="1.3" opacity=".85"/><path d="M27.9 25.5 L62.3 -5.9" stroke="#c88010" stroke-width="1.4" opacity=".85"/><path d="M10 39 L56 -3" stroke="#ffd838" stroke-width="4.800"/><path d="M11 38 L54 -1" stroke="#fffbe0" stroke-width="2.400"/></g></svg></div>
<div class="th" style="left:139px;top:261px"><svg viewBox="0 0 64 48" preserveAspectRatio="none"><defs><filter id="b8a" x="-20%" y="-20%" width="140%" height="140%"><feGaussianBlur stdDeviation="0.6"/></filter><filter id="b8b" x="-60%" y="-60%" width="220%" height="220%"><feGaussianBlur stdDeviation="1.5"/></filter><filter id="b8c" x="-100%" y="-100%" width="300%" height="300%"><feGaussianBlur stdDeviation="3"/></filter><radialGradient id="g8" cx=".58" cy=".42" r=".8"><stop offset="0" stop-color="#fff23a"/><stop offset=".18" stop-color="#ffb81c"/><stop offset=".38" stop-color="#ee6c10"/><stop offset=".68" stop-color="#cc4a0e"/><stop offset="1" stop-color="#96320c"/></radialGradient></defs><rect width="64" height="48" fill="url(#g8)"/></svg><div style="position:absolute;left:0;top:0;width:64px;height:48px;background:conic-gradient(from 0deg at 37px 20px,rgba(255,140,30,.0) 0deg,rgba(120,30,4,.55) 6.6deg,rgba(90,24,4,.5) 10.9deg,rgba(255,140,30,.0) 14.5deg,rgba(0,0,0,0) 19.9deg,rgba(90,24,4,.5) 25deg,rgba(120,30,4,.55) 28.4deg,rgba(120,30,4,.55) 35.8deg,rgba(240,100,20,.2) 44.3deg,rgba(120,30,4,.55) 51.2deg,rgba(100,26,4,.65) 56.6deg,rgba(0,0,0,0) 66.3deg,rgba(120,30,4,.55) 73.2deg,rgba(90,24,4,.5) 83.2deg,rgba(240,100,20,.2) 88.8deg,rgba(0,0,0,0) 92.5deg,rgba(100,26,4,.65) 103.4deg,rgba(255,160,40,.22) 112.7deg,rgba(100,26,4,.65) 118.1deg,rgba(90,24,4,.5) 125.9deg,rgba(255,140,30,.0) 133.9deg,rgba(255,140,30,.0) 142.4deg,rgba(0,0,0,0) 151.3deg,rgba(120,30,4,.55) 163.3deg,rgba(255,140,30,.0) 173deg,rgba(0,0,0,0) 185deg,rgba(0,0,0,0) 192.4deg,rgba(255,160,40,.22) 203.8deg,rgba(240,100,20,.2) 212.2deg,rgba(255,140,30,.0) 223.6deg,rgba(0,0,0,0) 228.2deg,rgba(90,24,4,.5) 232.2deg,rgba(255,160,40,.22) 238.3deg,rgba(240,100,20,.2) 250.4deg,rgba(0,0,0,0) 258.2deg,rgba(255,140,30,.0) 263.1deg,rgba(255,160,40,.22) 269.6deg,rgba(100,26,4,.65) 277.5deg,rgba(240,100,20,.2) 288.3deg,rgba(90,24,4,.5) 296.1deg,rgba(255,160,40,.22) 304.4deg,rgba(100,26,4,.65) 309.8deg,rgba(255,140,30,.0) 315.7deg,rgba(120,30,4,.55) 321.4deg,rgba(255,160,40,.22) 326.9deg,rgba(120,30,4,.55) 337.8deg,rgba(120,30,4,.55) 342.6deg,rgba(90,24,4,.5) 346.8deg,rgba(100,26,4,.65) 358deg,rgba(255,140,30,.0) 360deg)"></div><svg viewBox="0 0 64 48" style="z-index:3"><defs><filter id="b8z" x="-60%" y="-60%" width="220%" height="220%"><feGaussianBlur stdDeviation="1.800"/></filter></defs><ellipse cx="39" cy="20" rx="12" ry="6.500" fill="#ffe42c" filter="url(#b8z)"/><ellipse cx="34" cy="15" rx="6" ry="4.500" fill="#ffc81c" filter="url(#b8z)"/><ellipse cx="40" cy="26" rx="6" ry="3" fill="#ffc81c" filter="url(#b8z)"/><ellipse cx="56" cy="24" rx="9" ry="2.500" fill="#ffa81c" filter="url(#b8z)"/><ellipse cx="30" cy="9" rx="6" ry="3" fill="#f09014" filter="url(#b8z)" opacity=".7"/><ellipse cx="10" cy="14" rx="9" ry="4" fill="#f07414" filter="url(#b8z)" opacity=".6"/><ellipse cx="22" cy="31" rx="9" ry="3" fill="#5a1c06" filter="url(#b8z)" opacity=".55"/><ellipse cx="50" cy="40" rx="9" ry="3" fill="#6a2006" filter="url(#b8z)" opacity=".45"/></svg></div>
<div class="th" style="left:219px;top:261px"><svg viewBox="0 0 64 48" preserveAspectRatio="none"><defs><filter id="b9a" x="-20%" y="-20%" width="140%" height="140%"><feGaussianBlur stdDeviation="0.6"/></filter><filter id="b9b" x="-60%" y="-60%" width="220%" height="220%"><feGaussianBlur stdDeviation="1.5"/></filter><filter id="b9c" x="-100%" y="-100%" width="300%" height="300%"><feGaussianBlur stdDeviation="3"/></filter></defs><rect width="64" height="48" fill="#4a3c3c"/><rect x="0" y="0" width="5" height="23" fill="#5e4a4a"/><rect x="5" y="3" width="54" height="18" fill="#f4e4e4"/><rect x="0" y="24" width="23" height="19" fill="#dcbcbc"/><rect x="24" y="24" width="17" height="19" fill="#343434"/><rect x="42" y="24" width="18" height="19" fill="#ccb2b2"/><rect x="0" y="43" width="64" height="5" fill="#5a4a4a"/><rect x="60" y="0" width="4" height="48" fill="#4e4242"/><rect x="5" y="0" width="54" height="3" fill="#5a4848"/><rect x="0" y="21" width="60" height="3" fill="#b89c9c"/><g filter="url(#b9a)"><rect x="29.6" y="5.5" width="1" height="13.2" fill="#c49a9a"/><rect x="23.3" y="5.9" width="1.6" height="10" fill="#8a6464"/><rect x="41.7" y="6.9" width="1" height="13.7" fill="#d8b0b0"/><rect x="14" y="5" width="1" height="11" fill="#8a6464"/><rect x="9.2" y="6.8" width="1.9" height="13.3" fill="#ffffff"/><rect x="16.5" y="4.9" width="1.9" height="13.3" fill="#ffffff"/><rect x="52.5" y="5.6" width="1.3" height="8.3" fill="#c49a9a"/><rect x="50.8" y="4.2" width="1.3" height="11" fill="#c49a9a"/><rect x="18.1" y="6.9" width="2" height="13.8" fill="#c49a9a"/><rect x="12.2" y="6.3" width="2.1" height="9.2" fill="#c49a9a"/><rect x="51.5" y="4.5" width="2.1" height="11" fill="#8a6464"/><rect x="31.3" y="7.7" width="1.4" height="10.4" fill="#c49a9a"/><rect x="41.7" y="4.6" width="2.1" height="12.3" fill="#c49a9a"/><rect x="8.8" y="6.2" width="1.6" height="8.9" fill="#ffffff"/><rect x="43.6" y="6.3" width="0.8" height="13.2" fill="#d8b0b0"/><rect x="54.5" y="4.9" width="1.7" height="8.3" fill="#ffffff"/><rect x="49.1" y="6.1" width="1.6" height="12.1" fill="#ffffff"/><rect x="11.6" y="7.5" width="1.3" height="9.3" fill="#b08080"/><rect x="19.7" y="28.3" width="0.8" height="12" fill="#fff0f0"/><rect x="2" y="26.4" width="1.2" height="9.3" fill="#b08888"/><rect x="7.5" y="27.1" width="1.7" height="8.3" fill="#fff0f0"/><rect x="16.1" y="29.2" width="1.6" height="11.5" fill="#b08888"/><rect x="12.2" y="26.3" width="1.9" height="8.5" fill="#fff0f0"/><rect x="11.2" y="29.8" width="1.8" height="8.7" fill="#fff0f0"/><rect x="5.1" y="29.4" width="1.2" height="8.3" fill="#b08888"/><rect x="46.9" y="26.7" width="0.9" height="8.7" fill="#5a4848"/><rect x="43.9" y="26.8" width="1.3" height="11.1" fill="#fff0f0"/><rect x="47.3" y="27.9" width="1.1" height="12.8" fill="#7a6060"/><rect x="51.3" y="28.8" width="0.9" height="10.3" fill="#7a6060"/><rect x="51.4" y="29.2" width="1.5" height="12" fill="#7a6060"/><rect x="53.7" y="29.1" width="1.9" height="10.5" fill="#5a4848"/><rect x="56.8" y="27.1" width="1" height="12" fill="#5a4848"/><rect x="45.4" y="29.2" width="1.8" height="9" fill="#fff0f0"/></g></svg></div>
<div class="th" style="left:299px;top:261px"><svg viewBox="0 0 64 48" preserveAspectRatio="none"><defs><filter id="b10a" x="-20%" y="-20%" width="140%" height="140%"><feGaussianBlur stdDeviation="0.6"/></filter><filter id="b10b" x="-60%" y="-60%" width="220%" height="220%"><feGaussianBlur stdDeviation="1.5"/></filter><filter id="b10c" x="-100%" y="-100%" width="300%" height="300%"><feGaussianBlur stdDeviation="3"/></filter></defs><rect width="64" height="48" fill="#15140c"/><path d="M-1 27.1 Q8 25.1 17 25.9" stroke="#f0d428" stroke-width="1" fill="none" opacity=".9"/><path d="M65 22.4 Q56 23.1 49 24.5" stroke="#b09010" stroke-width="1.7" fill="none" opacity=".9"/><path d="M-1 9.1 Q8 16.6 17 20.5" stroke="#b89810" stroke-width="1.1" fill="none" opacity=".9"/><path d="M65 43.9 Q56 35.4 49 31" stroke="#b09010" stroke-width="1" fill="none" opacity=".9"/><path d="M-1 39.8 Q8 32.5 17 29.8" stroke="#b89810" stroke-width="1.4" fill="none" opacity=".9"/><path d="M65 38.4 Q56 29.8 49 29.3" stroke="#d0b018" stroke-width="1.7" fill="none" opacity=".9"/><path d="M-1 31.1 Q8 25.4 17 27.1" stroke="#d8b818" stroke-width="2" fill="none" opacity=".9"/><path d="M65 29 Q56 23.8 49 26.5" stroke="#d0b018" stroke-width="1.2" fill="none" opacity=".9"/><path d="M-1 10.6 Q8 19.7 17 21" stroke="#f0d428" stroke-width="1.4" fill="none" opacity=".9"/><path d="M65 41.5 Q56 31.6 49 30.3" stroke="#e8cc20" stroke-width="1.5" fill="none" opacity=".9"/><path d="M-1 22.7 Q8 24.3 17 24.6" stroke="#b89810" stroke-width="1.8" fill="none" opacity=".9"/><path d="M65 8.9 Q56 14.8 49 20.5" stroke="#b09010" stroke-width="1.2" fill="none" opacity=".9"/><path d="M-1 3.4 Q8 12.5 17 18.8" stroke="#f0d428" stroke-width="1.7" fill="none" opacity=".9"/><path d="M65 25.5 Q56 26.9 49 25.4" stroke="#d0b018" stroke-width="1.4" fill="none" opacity=".9"/><path d="M-1 43.6 Q8 36.3 17 30.9" stroke="#d8b818" stroke-width="1.1" fill="none" opacity=".9"/><path d="M65 36.1 Q56 27.6 49 28.6" stroke="#d0b018" stroke-width="2" fill="none" opacity=".9"/><path d="M-1 10.4 Q8 16.3 17 20.9" stroke="#b89810" stroke-width="1.4" fill="none" opacity=".9"/><path d="M65 32 Q56 25.8 49 27.4" stroke="#e8cc20" stroke-width="1.2" fill="none" opacity=".9"/><path d="M-1 7.3 Q8 15.4 17 20" stroke="#d8b818" stroke-width="1.7" fill="none" opacity=".9"/><path d="M65 43.5 Q56 31.8 49 30.8" stroke="#d0b018" stroke-width="1.5" fill="none" opacity=".9"/><path d="M-1 17.3 Q8 20.3 17 23" stroke="#d8b818" stroke-width="1.5" fill="none" opacity=".9"/><path d="M65 3.9 Q56 16.3 49 19" stroke="#d0b018" stroke-width="1.1" fill="none" opacity=".9"/><path d="M-1 21.7 Q8 23.4 17 24.3" stroke="#b89810" stroke-width="1.9" fill="none" opacity=".9"/><path d="M65 23.8 Q56 26.3 49 24.9" stroke="#e8cc20" stroke-width="1.5" fill="none" opacity=".9"/><path d="M-1 42.1 Q8 33.2 17 30.4" stroke="#f0d428" stroke-width="1.5" fill="none" opacity=".9"/><path d="M65 9.3 Q56 17.7 49 20.6" stroke="#b09010" stroke-width="1.1" fill="none" opacity=".9"/><path d="M-1 25.8 Q8 24 17 25.5" stroke="#b89810" stroke-width="1.5" fill="none" opacity=".9"/><path d="M65 9.3 Q56 16.3 49 20.6" stroke="#b09010" stroke-width="1.8" fill="none" opacity=".9"/><path d="M-1 40.4 Q8 31.8 17 29.9" stroke="#d8b818" stroke-width="1.1" fill="none" opacity=".9"/><path d="M65 6.1 Q56 12.7 49 19.6" stroke="#b09010" stroke-width="1.8" fill="none" opacity=".9"/><polyline points="-2 20.3 1.6 17.9 4.5 21 6.5 16.5 10.5 21 13.1 14.5 15.3 20.5 18.6 11.2 22.7 23.1 26.5 15.4 28.6 20.9 32.2 9.7 36 23.2 38.9 11.5 41 23.5 44.3 12.6 47.3 21.5 50.4 17.2 53 21.7 56.8 16.2 59.2 22.1 62.7 17.1 65.7 19.8" fill="none" stroke="#e8c818" stroke-width="1.7" stroke-linejoin="miter"/><polyline points="-2 18.7 2.1 16.9 5.5 18.6 8 16.2 12.1 18.6 14.1 15.4 17.1 20.1 19.8 16.4 22.4 20.5 25.8 14.1 28.6 20.2 31.3 11.2 34.2 20.4 36.1 11.1 39.2 18.8 41.5 15.8 44.9 20.1 48.3 15.9 52.2 20.5 55.7 15.5 57.7 18.9 61.7 17.7 63.8 20.2" fill="none" stroke="#b89810" stroke-width="1.3" stroke-linejoin="miter"/><polyline points="-2 21.7 0.2 18 2.9 22.1 4.8 18.2 7.9 23 10.6 17.4 14.3 23.1 17.2 14.2 20.3 22.6 23.6 9.8 25.6 23.8 28.6 7.2 31.4 25.1 33.7 9 36.5 24.3 39.9 7.6 43.3 24.5 46.1 13.6 49.6 23.1 52.8 14.5 55.9 22.8 58.6 17.1 60.9 22.3 64.8 18.1" fill="none" stroke="#f8e030" stroke-width="1.4" stroke-linejoin="miter"/><polyline points="-2 29 1.5 32 3.5 28.3 6.2 34.5 8.3 28.9 12.1 31 14.2 29.4 16.4 34.7 19.9 29.1 23.1 38.9 25.8 28.5 29.1 37.8 31.6 29.3 35.5 42.8 39 28.1 41.1 36.3 43.2 26 46.9 35.8 49.9 29 53 35.3 55.5 29.2 58.3 33.5 61.9 29.5 63.8 33.4" fill="none" stroke="#e8c818" stroke-width="1.7" stroke-linejoin="miter"/><polyline points="-2 31.3 1.6 31.5 5.1 29.2 7.3 32.5 10.6 30.9 14.5 33.5 17.1 30.3 19.9 34.6 22.3 30.4 24.3 36.8 28.1 29.7 32.1 36.8 34.4 27.6 37.8 38.2 41.1 30.1 43.4 34.2 46.1 29.5 49.4 31.7 51.2 29.3 53.2 34.1 56.5 30.5 60 33 63.5 31.4" fill="none" stroke="#b89810" stroke-width="1.3" stroke-linejoin="miter"/><polyline points="-2 27.6 1.7 32.6 5.3 27.5 8 32.5 11.4 27.2 14.2 33.3 18.1 25.5 22.3 39.5 26 25.4 30.1 46.4 32.1 25.1 36.1 46.9 39.6 26.5 42.6 40.7 46.4 27 50.5 37.3 54 28.1 56.5 30.8 58.6 28.7 62.5 33.5 64.3 27.4" fill="none" stroke="#f8e030" stroke-width="1.4" stroke-linejoin="miter"/><ellipse cx="33" cy="25.500" rx="16" ry="1.600" fill="#15140c" filter="url(#b10a)"/><ellipse cx="38" cy="44" rx="12" ry="3.500" fill="#15140c" filter="url(#b10b)" opacity=".9"/><ellipse cx="30" cy="2" rx="13" ry="3" fill="#15140c" filter="url(#b10b)" opacity=".9"/></svg></div>
<div class="th" style="left:379px;top:261px"><svg viewBox="0 0 64 48" preserveAspectRatio="none"><defs><filter id="b11a" x="-20%" y="-20%" width="140%" height="140%"><feGaussianBlur stdDeviation="0.6"/></filter><filter id="b11b" x="-60%" y="-60%" width="220%" height="220%"><feGaussianBlur stdDeviation="1.5"/></filter><filter id="b11c" x="-100%" y="-100%" width="300%" height="300%"><feGaussianBlur stdDeviation="3"/></filter></defs><rect width="64" height="48" fill="#161616"/><g filter="url(#b11c)"><ellipse cx="32" cy="22" rx="18" ry="13" fill="#86480e"/><ellipse cx="32" cy="10" rx="9" ry="7" fill="#6e4c10"/></g><g filter="url(#b11b)"><ellipse cx="32" cy="17" rx="6" ry="6" fill="#4e2a08"/><ellipse cx="22" cy="20" rx="4" ry="5" fill="#9a5410"/><ellipse cx="42" cy="20" rx="4" ry="5" fill="#9a5410"/><ellipse cx="13" cy="23" rx="4" ry="3" fill="#b0640e"/><ellipse cx="51" cy="23" rx="4" ry="3" fill="#b0640e"/><ellipse cx="23" cy="41" rx="4" ry="3" fill="#c07810"/><ellipse cx="41" cy="41" rx="4" ry="3" fill="#c07810"/><ellipse cx="32" cy="40" rx="7" ry="6" fill="#ffe020"/></g><g filter="url(#b11a)"><path d="M12 31 Q18 28 27 32 Q22 36 14 34Z" fill="#fcd018"/><path d="M52 31 Q46 28 37 32 Q42 36 50 34Z" fill="#fcd018"/><ellipse cx="19" cy="12.500" rx="2" ry="2.600" fill="#d4cc24"/><ellipse cx="45" cy="12.500" rx="2" ry="2.600" fill="#d4cc24"/><path d="M28 2 L32 5 L36 2 L34 0 L30 0Z" fill="#b4bc20"/><ellipse cx="32" cy="40" rx="5.400" ry="4.800" fill="#fff028"/><circle cx="32" cy="40" r=".8" fill="#b08010"/><path d="M20 24 Q26 22 32 26 Q38 22 44 24" stroke="#3a1e06" stroke-width="1" fill="none"/></g></svg></div>
<div class="th" style="left:459px;top:261px"><svg viewBox="0 0 64 48" preserveAspectRatio="none"><defs><filter id="b12a" x="-20%" y="-20%" width="140%" height="140%"><feGaussianBlur stdDeviation="0.6"/></filter><filter id="b12b" x="-60%" y="-60%" width="220%" height="220%"><feGaussianBlur stdDeviation="1.5"/></filter><filter id="b12c" x="-100%" y="-100%" width="300%" height="300%"><feGaussianBlur stdDeviation="3"/></filter></defs><rect width="64" height="48" fill="#262626"/><circle cx="-2" cy="6" r="14" fill="none" stroke="#3c3c3c" stroke-width=".7"/><g filter="url(#b12a)" stroke-linecap="round" fill="none"><rect x="28" y="5.500" width="8" height="4" stroke="#f4ffd0" stroke-width="1.2"/><path d="M28 5.500 h8" stroke="#d0f040" stroke-width="1"/><path d="M18 14.500 L31 11" stroke="#60b8ff" stroke-width="1.300"/><path d="M33 11 L45 15" stroke="#c8ff90" stroke-width="1.300"/><path d="M32 10 L32 26" stroke="#ffe8f8" stroke-width="1.300"/><path d="M31.300 10 L31.300 26" stroke="#ff60d0" stroke-width=".6"/><path d="M32 26 L20 38.500" stroke="#ff48d0" stroke-width="1.400"/><path d="M32 26 L44 38" stroke="#ffa0e8" stroke-width="1.400"/></g><rect x="13" y="39.500" width="37.500" height="9" fill="#f2f000"/><rect x="13" y="39.500" width="1" height="9" fill="#a0a000"/></svg></div>
<div class="th" style="left:59px;top:323px"><svg viewBox="0 0 64 48" preserveAspectRatio="none"><defs><filter id="b13a" x="-20%" y="-20%" width="140%" height="140%"><feGaussianBlur stdDeviation="0.6"/></filter><filter id="b13b" x="-60%" y="-60%" width="220%" height="220%"><feGaussianBlur stdDeviation="1.5"/></filter><filter id="b13c" x="-100%" y="-100%" width="300%" height="300%"><feGaussianBlur stdDeviation="3"/></filter></defs><rect width="64" height="48" fill="#343434"/><g filter="url(#b13a)" stroke-linecap="round" fill="none" stroke-width="1.200"><rect x="23" y="1.500" width="8" height="3.500" stroke="#50d0c8"/><path d="M16 11.500 L27 6" stroke="#f05858"/><path d="M27 6 L38 11.500" stroke="#f06048"/><path d="M27 6 L27.500 17" stroke="#f0c8e0"/><path d="M27.500 17 L14 31" stroke="#a8e8e0"/><path d="M27.500 17 L37 30" stroke="#e8f8f4"/><rect x="46" y="2.500" width="7" height="3.500" stroke="#d888c8"/><path d="M39.500 12.500 L50 8" stroke="#40d040"/><path d="M50 8 L60 12.500" stroke="#a060b0"/><path d="M50 8 L51 19" stroke="#48d838"/><path d="M51 19 L39.500 30.500" stroke="#e898d8"/><path d="M51 19 L60 30.500" stroke="#38c0e0"/><path d="M11 29.500 h4" stroke="#e080c8"/><path d="M9 33 L13 31.500 L17 33" stroke="#40d850"/><path d="M13 31 L13.500 36" stroke="#50e050"/><path d="M13.500 36 L9 40.500" stroke="#e8a0e0"/><path d="M13.500 36 L17.500 40" stroke="#50d0e0"/><path d="M30 38 h4" stroke="#40c8c0"/><path d="M28 41.500 L32 40 L36 41.500" stroke="#f05050"/><path d="M32 40 L32 44" stroke="#f0c0c0"/><path d="M32 44 L28.500 48" stroke="#b0f0e8"/><path d="M32 44 L35.500 48" stroke="#e8ffff"/></g></svg></div>
<div class="th" style="left:139px;top:323px"><svg viewBox="0 0 64 48" preserveAspectRatio="none"><defs><filter id="b14a" x="-20%" y="-20%" width="140%" height="140%"><feGaussianBlur stdDeviation="0.6"/></filter><filter id="b14b" x="-60%" y="-60%" width="220%" height="220%"><feGaussianBlur stdDeviation="1.5"/></filter><filter id="b14c" x="-100%" y="-100%" width="300%" height="300%"><feGaussianBlur stdDeviation="3"/></filter><radialGradient id="g14" cx=".5" cy=".54" r=".6"><stop offset="0" stop-color="#1a060e"/><stop offset=".2" stop-color="#34343c"/><stop offset=".5" stop-color="#545c62"/><stop offset="1" stop-color="#6a747a"/></radialGradient><filter id="n14" x="0" y="0" width="100%" height="100%"><feTurbulence type="turbulence" baseFrequency=".3 .4" numOctaves="2" seed="4"/><feColorMatrix values="0 0 0 0 .86  0 0 0 0 .94  0 0 0 0 .97  2.4 0 0 0 -.5"/></filter></defs><rect width="64" height="48" fill="url(#g14)"/><rect width="64" height="48" filter="url(#n14)" opacity=".7"/><g filter="url(#b14a)"><polyline points="35.7 25.6 39 26.1 42.1 27.3 44.7 29.4 46.5 32 47.4 35.2 47.1 38.7 45.6 42.4 42.7 46 38.5 49.3 33 52.1 26.4 54.2 18.9 55.3 10.7 55.3 2.1 54.2" fill="none" stroke="#d0e0e8" stroke-width="0.7" opacity="0.7"/><polyline points="34.8 27.8 36.5 29.9 37.1 32.4 36.6 35.1 35 37.9 32.2 40.4 28.3 42.5 23.4 44.1 17.8 44.8 11.5 44.6 5 43.4 -1.4 41.2 -7.5 37.8 -12.9 33.3 -17.2 27.9" fill="none" stroke="#1c2026" stroke-width="2.4" opacity="0.4"/><polyline points="32.9 28.6 32.6 31 31.1 33.4 28.6 35.4 25.1 37 20.8 37.9 15.9 38.1 10.7 37.3 5.4 35.6 0.4 32.9 -4 29.2 -7.5 24.7 -9.8 19.4 -10.6 13.5 -9.8 7.3" fill="none" stroke="#d0e0e8" stroke-width="0.7" opacity="0.7"/><polyline points="30.2 28.4 27.7 30 24.4 31 20.6 31.2 16.6 30.7 12.5 29.3 8.8 27 5.7 23.9 3.4 20.1 2.3 15.7 2.5 10.8 4.2 5.8 7.5 0.8 12.4 -3.9 18.8 -8.2" fill="none" stroke="#1c2026" stroke-width="2.4" opacity="0.4"/><polyline points="29.2 27.8 26 28.6 22.5 28.7 18.8 28 15.3 26.5 12.2 24.1 9.8 21.1 8.4 17.4 8.1 13.2 9.2 8.8 11.8 4.3 15.9 0 21.4 -3.8 28.3 -7 36.4 -9.3" fill="none" stroke="#d0e0e8" stroke-width="0.7" opacity="0.7"/><polyline points="28.3 26.3 25 25.6 22 24.2 19.6 22.1 18 19.4 17.4 16.2 18 12.7 19.8 9.1 23 5.6 27.4 2.5 33.1 -0.1 39.9 -1.9 47.5 -2.7 55.7 -2.4 64.2 -0.9" fill="none" stroke="#1c2026" stroke-width="2.4" opacity="0.4"/><polyline points="29.2 24.2 27.6 22.1 27 19.6 27.5 16.8 29.2 14.1 32 11.6 36 9.5 40.9 8 46.6 7.3 52.8 7.5 59.3 8.8 65.7 11.1 71.7 14.6 77 19.1 81.2 24.6" fill="none" stroke="#d0e0e8" stroke-width="0.7" opacity="0.7"/><polyline points="31.1 23.4 31.4 21 32.9 18.6 35.5 16.6 39 15 43.3 14.1 48.2 14 53.4 14.7 58.6 16.5 63.6 19.2 68 22.8 71.5 27.4 73.7 32.7 74.6 38.5 73.8 44.8" fill="none" stroke="#1c2026" stroke-width="2.4" opacity="0.4"/><polyline points="32.9 23.4 34.8 21.4 37.6 19.8 41.2 18.9 45.3 18.6 49.7 19.3 54.1 20.8 58.2 23.2 61.7 26.5 64.4 30.6 65.9 35.3 66 40.5 64.6 45.9 61.5 51.4 56.7 56.7" fill="none" stroke="#d0e0e8" stroke-width="0.7" opacity="0.7"/><polyline points="35.2 24.6 38.5 24.1 42 24.4 45.5 25.6 48.6 27.5 51.1 30.2 52.8 33.5 53.3 37.3 52.6 41.4 50.5 45.7 47 49.8 42 53.5 35.6 56.7 28.1 59 19.6 60.3" fill="none" stroke="#1c2026" stroke-width="2.4" opacity="0.4"/></g><path d="M25.4 37.3 l5.4 2.1" stroke="#dcecf2" stroke-width=".5" opacity="0.8"/><path d="M22.9 12.5 l-7.4 5.2" stroke="#dcecf2" stroke-width=".5" opacity="0.4"/><path d="M35.3 31.9 l8 4.6" stroke="#dcecf2" stroke-width=".5" opacity="0.4"/><path d="M21.6 4 l9.5 7.1" stroke="#dcecf2" stroke-width=".5" opacity="0.5"/><path d="M63.4 21.1 l-3.6 10.4" stroke="#dcecf2" stroke-width=".5" opacity="0.6"/><path d="M7.1 28.3 l-2.2 5" stroke="#dcecf2" stroke-width=".5" opacity="0.3"/><path d="M56 24.7 l6.3 4.4" stroke="#dcecf2" stroke-width=".5" opacity="0.4"/><path d="M51.1 24 l10 3.3" stroke="#dcecf2" stroke-width=".5" opacity="0.3"/><path d="M18 1.3 l-3.4 3.6" stroke="#dcecf2" stroke-width=".5" opacity="0.6"/><path d="M6 23.1 l-4.6 6.9" stroke="#dcecf2" stroke-width=".5" opacity="0.5"/><path d="M31 21 l-1.4 4.5" stroke="#dcecf2" stroke-width=".5" opacity="0.5"/><path d="M15.1 41.5 l-4.4 0.9" stroke="#dcecf2" stroke-width=".5" opacity="0.4"/><path d="M45 27.4 l9.6 0.6" stroke="#dcecf2" stroke-width=".5" opacity="0.8"/><path d="M27.1 16.7 l-2.5 11.2" stroke="#dcecf2" stroke-width=".5" opacity="0.4"/><path d="M19.3 9.1 l-3 7.1" stroke="#dcecf2" stroke-width=".5" opacity="0.4"/><path d="M24.8 1.7 l6.6 9.9" stroke="#dcecf2" stroke-width=".5" opacity="0.6"/><path d="M18.1 44.9 l2.6 5.4" stroke="#dcecf2" stroke-width=".5" opacity="0.3"/><path d="M9.4 9.6 l8.2 7.3" stroke="#dcecf2" stroke-width=".5" opacity="0.4"/><path d="M15.9 29 l-6.1 1.6" stroke="#dcecf2" stroke-width=".5" opacity="0.7"/><path d="M23.6 26.9 l-3.4 11" stroke="#dcecf2" stroke-width=".5" opacity="0.7"/><path d="M32.5 40.4 l2.9 6.5" stroke="#dcecf2" stroke-width=".5" opacity="0.8"/><path d="M34.9 37.1 l6.2 9.5" stroke="#dcecf2" stroke-width=".5" opacity="0.6"/><path d="M15.8 44.8 l0.7 6.7" stroke="#dcecf2" stroke-width=".5" opacity="0.4"/><path d="M6.6 9.6 l-2.9 4.2" stroke="#dcecf2" stroke-width=".5" opacity="0.4"/><path d="M28.6 26.1 l3.8 9.6" stroke="#dcecf2" stroke-width=".5" opacity="0.4"/><path d="M23.6 20.4 l5.3 2.3" stroke="#dcecf2" stroke-width=".5" opacity="0.4"/><path d="M46.4 7 l-2.9 5" stroke="#dcecf2" stroke-width=".5" opacity="0.6"/><path d="M42 17 l-9.1 1.9" stroke="#dcecf2" stroke-width=".5" opacity="0.6"/><path d="M3 19.5 l5.2 5.8" stroke="#dcecf2" stroke-width=".5" opacity="0.8"/><path d="M55.3 3 l-6.2 9.7" stroke="#dcecf2" stroke-width=".5" opacity="0.6"/><path d="M6.2 41.6 l2.7 11.5" stroke="#dcecf2" stroke-width=".5" opacity="0.7"/><path d="M53 44.7 l10.1 2.2" stroke="#dcecf2" stroke-width=".5" opacity="0.5"/><path d="M8.7 18.2 l-1.1 3.9" stroke="#dcecf2" stroke-width=".5" opacity="0.5"/><path d="M50.2 23.8 l-0.6 6.3" stroke="#dcecf2" stroke-width=".5" opacity="0.8"/><path d="M15.9 32.7 l-1.8 3.6" stroke="#dcecf2" stroke-width=".5" opacity="0.8"/><path d="M15.1 47.5 l-10.9 2.5" stroke="#dcecf2" stroke-width=".5" opacity="0.7"/><path d="M25.5 21.4 l5.4 10.2" stroke="#dcecf2" stroke-width=".5" opacity="0.3"/><path d="M8.8 45.9 l-7.9 5.5" stroke="#dcecf2" stroke-width=".5" opacity="0.8"/><path d="M33.5 40.1 l2 11" stroke="#dcecf2" stroke-width=".5" opacity="0.3"/><path d="M28.1 27.7 l-5.9 4.4" stroke="#dcecf2" stroke-width=".5" opacity="0.6"/><path d="M61.9 20.1 l3.4 2.5" stroke="#dcecf2" stroke-width=".5" opacity="0.7"/><path d="M30.5 18.6 l-0.3 5" stroke="#dcecf2" stroke-width=".5" opacity="0.4"/><path d="M15.1 12.2 l-5.4 2.6" stroke="#dcecf2" stroke-width=".5" opacity="0.3"/><path d="M55.5 26.8 l9.4 0.8" stroke="#dcecf2" stroke-width=".5" opacity="0.6"/><path d="M41.6 37.2 l1.4 5.6" stroke="#dcecf2" stroke-width=".5" opacity="0.7"/><path d="M40 33.8 l5.9 3.8" stroke="#dcecf2" stroke-width=".5" opacity="0.6"/><ellipse cx="32" cy="26" rx="10" ry="6" fill="#1a0c14" filter="url(#b14c)" opacity=".9"/><ellipse cx="32" cy="26" rx="4" ry="2.500" fill="#24060e" filter="url(#b14b)"/></svg></div>
<div class="th" style="left:219px;top:323px"><svg viewBox="0 0 64 48" preserveAspectRatio="none"><defs><filter id="b15a" x="-20%" y="-20%" width="140%" height="140%"><feGaussianBlur stdDeviation="0.6"/></filter><filter id="b15b" x="-60%" y="-60%" width="220%" height="220%"><feGaussianBlur stdDeviation="1.5"/></filter><filter id="b15c" x="-100%" y="-100%" width="300%" height="300%"><feGaussianBlur stdDeviation="3"/></filter><linearGradient id="g15" x1="0" y1="0" x2=".3" y2="1"><stop offset="0" stop-color="#fcd4ea"/><stop offset=".45" stop-color="#fc98c8"/><stop offset="1" stop-color="#ff5080"/></linearGradient></defs><rect width="64" height="48" fill="#f2e2ee"/><g filter="url(#b15a)"><rect x="0" y="0" width="22" height="14" fill="#fdeee6"/><path d="M11 0 L24 0 L22 5 L26 10 L18 12 L14 6Z" fill="#b8f488"/><circle cx="46" cy="38" r="35" fill="url(#g15)"/><path d="M0 15 Q16 10 28 22 Q34 32 28 42 L0 36Z" fill="#f274d8"/><path d="M0 30 Q10 34 8 44 L0 44Z" fill="#f8f060"/><path d="M4 46 Q12 34 26 34 Q30 40 24 48 L0 48Z" fill="#f8c8dc"/><path d="M30 0 Q52 0 64 20 L64 0Z" fill="#f0e0ee"/></g><g filter="url(#b15a)" stroke="#fde0f0" fill="none" stroke-width="1.200"><path d="M30 10 Q48 10 58 30"/><path d="M34 18 Q46 18 54 36"/><path d="M38 6 Q54 10 62 26"/><path d="M28 16 Q40 24 44 40" stroke="#fcc8e4"/></g><ellipse cx="44" cy="18" rx="3" ry="2" fill="#fde8f4" filter="url(#b15a)"/></svg></div>
<div class="th" style="left:299px;top:323px"><svg viewBox="0 0 64 48" preserveAspectRatio="none"><defs><filter id="b16a" x="-20%" y="-20%" width="140%" height="140%"><feGaussianBlur stdDeviation="0.6"/></filter><filter id="b16b" x="-60%" y="-60%" width="220%" height="220%"><feGaussianBlur stdDeviation="1.5"/></filter><filter id="b16c" x="-100%" y="-100%" width="300%" height="300%"><feGaussianBlur stdDeviation="3"/></filter></defs><rect width="64" height="48" fill="#f07a32"/><g filter="url(#b16a)"><path d="M26 0 L64 0 L64 32 Q60 8 26 0Z" fill="#b8a8ee"/><path d="M0 26 L0 48 L36 48 Q6 46 0 26Z" fill="#a8b4ec"/><path d="M0 0 L0 8 Q4 2 14 0Z" fill="#d89068"/><ellipse cx="32" cy="24" rx="33" ry="23.500" fill="#a4a468" transform="rotate(8 32 24)"/><path d="M34 2 Q58 6 62 28 L58 30 Q54 10 34 6Z" fill="#b4a4dc"/><ellipse cx="32" cy="26" rx="30" ry="20.500" fill="#86c468"/><path d="M8 16 Q14 6 28 4 L28 9 Q18 10 11 19Z" fill="#cc7aa8"/><ellipse cx="31" cy="23" rx="26" ry="16" fill="#9aaa4a"/><path d="M5 24 Q6 14 14 10 L16 16 Q10 20 10 30Z" fill="#c89838"/><ellipse cx="33" cy="23" rx="22" ry="12.500" fill="#56a832"/><path d="M9 20 Q18 8 36 10 Q44 11 47 15 Q32 12 23 16 Q15 20 12 24Z" fill="#8a5428"/><path d="M8 24 Q10 15 20 11 Q14 18 14 27Z" fill="#68b890"/><path d="M18 10 Q24 7 30 8 L29 10 Q24 10 20 12Z" fill="#90d0a0"/><ellipse cx="30" cy="26" rx="17" ry="9.500" fill="#a8a040"/><ellipse cx="29" cy="24" rx="12" ry="6.500" fill="#98b060"/><ellipse cx="34" cy="22" rx="6" ry="2.800" fill="#68c4b8"/><path d="M16 33 Q30 40 48 31 Q42 42 26 41Z" fill="#70b858"/><path d="M51 19 L58 21 L57 26 L51 25Z" fill="#b8a0c8"/><path d="M56 20 L60 22 L59 24 L56 23Z" fill="#60c8d0"/></g></svg></div>
<div class="th" style="left:379px;top:323px"><svg viewBox="0 0 64 48" preserveAspectRatio="none"><defs><filter id="b17a" x="-20%" y="-20%" width="140%" height="140%"><feGaussianBlur stdDeviation="0.6"/></filter><filter id="b17b" x="-60%" y="-60%" width="220%" height="220%"><feGaussianBlur stdDeviation="1.5"/></filter><filter id="b17c" x="-100%" y="-100%" width="300%" height="300%"><feGaussianBlur stdDeviation="3"/></filter><radialGradient id="g17"><stop offset="0" stop-color="#fff060"/><stop offset=".35" stop-color="#ffa418"/><stop offset=".7" stop-color="#e05010" stop-opacity=".8"/><stop offset="1" stop-color="#a02010" stop-opacity="0"/></radialGradient></defs><rect width="64" height="48" fill="#1e1020"/><g filter="url(#b17c)"><ellipse cx="20" cy="12" rx="9" ry="7" fill="#9a78bc" opacity=".85"/><ellipse cx="6" cy="26" rx="8" ry="7" fill="#9a78bc" opacity=".85"/><ellipse cx="22" cy="28" rx="7" ry="5" fill="#9a78bc" opacity=".85"/><ellipse cx="44" cy="32" rx="10" ry="8" fill="#9a78bc" opacity=".85"/><ellipse cx="54" cy="12" rx="8" ry="7" fill="#9a78bc" opacity=".85"/><ellipse cx="50" cy="42" rx="7" ry="4" fill="#9a78bc" opacity=".85"/><ellipse cx="36" cy="20" rx="4" ry="3" fill="#9a78bc" opacity=".85"/></g><g filter="url(#b17a)"><circle cx="18.4" cy="29.7" r="0.6" fill="#e8d0f0" opacity="0.5"/><circle cx="41.9" cy="24.4" r="0.5" fill="#e8d0f0" opacity="0.4"/><circle cx="56.1" cy="10.2" r="0.9" fill="#e8d0f0" opacity="0.8"/><circle cx="50.9" cy="22.1" r="0.6" fill="#e8d0f0" opacity="0.8"/><circle cx="25.6" cy="19.5" r="0.5" fill="#e8d0f0" opacity="0.8"/><circle cx="10.4" cy="24.4" r="0.5" fill="#e8d0f0" opacity="0.6"/><circle cx="41.2" cy="27.4" r="0.4" fill="#e8d0f0" opacity="0.8"/><circle cx="49.7" cy="9.8" r="0.8" fill="#e8d0f0" opacity="0.6"/><circle cx="22.8" cy="27.6" r="0.6" fill="#e8d0f0" opacity="0.4"/><circle cx="36.3" cy="38" r="0.6" fill="#e8d0f0" opacity="0.7"/><circle cx="54.4" cy="19.1" r="1" fill="#e8d0f0" opacity="0.6"/><circle cx="46.7" cy="33.5" r="0.6" fill="#e8d0f0" opacity="0.7"/><circle cx="11.5" cy="26.2" r="0.6" fill="#e8d0f0" opacity="0.5"/><circle cx="43.1" cy="36.3" r="0.9" fill="#e8d0f0" opacity="0.7"/><circle cx="44.2" cy="34.1" r="1" fill="#e8d0f0" opacity="0.4"/><circle cx="43" cy="35.6" r="0.8" fill="#e8d0f0" opacity="0.5"/><circle cx="19.9" cy="7.7" r="0.7" fill="#e8d0f0" opacity="0.7"/><circle cx="20" cy="24.3" r="0.8" fill="#e8d0f0" opacity="0.8"/><circle cx="23.3" cy="25.7" r="1" fill="#e8d0f0" opacity="0.8"/><circle cx="46.7" cy="31.8" r="0.9" fill="#e8d0f0" opacity="0.6"/><circle cx="45.6" cy="31.8" r="1" fill="#e8d0f0" opacity="0.4"/><circle cx="48.9" cy="28" r="0.6" fill="#e8d0f0" opacity="0.4"/><circle cx="6.6" cy="11" r="0.5" fill="#e8d0f0" opacity="0.8"/><circle cx="24.2" cy="30.9" r="0.8" fill="#e8d0f0" opacity="0.6"/><circle cx="55.6" cy="11.5" r="0.6" fill="#e8d0f0" opacity="0.7"/><circle cx="28.2" cy="12.6" r="0.5" fill="#e8d0f0" opacity="0.5"/><circle cx="13.6" cy="26" r="1" fill="#e8d0f0" opacity="0.7"/><circle cx="12.6" cy="32" r="0.6" fill="#e8d0f0" opacity="0.7"/><circle cx="22.5" cy="31.4" r="0.5" fill="#e8d0f0" opacity="0.8"/><circle cx="5.5" cy="30.5" r="0.8" fill="#e8d0f0" opacity="0.6"/><circle cx="33.9" cy="28.6" r="0.9" fill="#e8d0f0" opacity="0.6"/><circle cx="1.8" cy="28.4" r="0.7" fill="#e8d0f0" opacity="0.6"/><circle cx="50" cy="15" r="0.5" fill="#e8d0f0" opacity="0.4"/><circle cx="51.7" cy="17" r="0.4" fill="#e8d0f0" opacity="0.4"/><circle cx="43.6" cy="29.1" r="0.7" fill="#e8d0f0" opacity="0.8"/><circle cx="24.5" cy="34.7" r="0.9" fill="#e8d0f0" opacity="0.8"/><circle cx="11.1" cy="16.1" r="1" fill="#e8d0f0" opacity="0.8"/><circle cx="25.2" cy="8.3" r="0.7" fill="#e8d0f0" opacity="0.4"/><circle cx="34.6" cy="32" r="0.6" fill="#e8d0f0" opacity="0.6"/><circle cx="6" cy="20.8" r="0.6" fill="#e8d0f0" opacity="0.8"/><circle cx="22" cy="24.4" r="0.9" fill="#e8d0f0" opacity="0.8"/><circle cx="13" cy="8.3" r="0.6" fill="#e8d0f0" opacity="0.5"/><circle cx="3.4" cy="26.3" r="0.7" fill="#e8d0f0" opacity="0.5"/><circle cx="19.9" cy="15.6" r="0.7" fill="#e8d0f0" opacity="0.7"/><circle cx="51.7" cy="16.1" r="1" fill="#e8d0f0" opacity="0.8"/><circle cx="7.5" cy="25.4" r="0.7" fill="#e8d0f0" opacity="0.8"/><circle cx="13.5" cy="22.8" r="0.8" fill="#e8d0f0" opacity="0.5"/><circle cx="17.7" cy="27.2" r="0.9" fill="#e8d0f0" opacity="0.8"/><circle cx="57.4" cy="15.2" r="0.9" fill="#e8d0f0" opacity="0.5"/><circle cx="3" cy="28.6" r="0.9" fill="#e8d0f0" opacity="0.7"/><circle cx="6.1" cy="29.9" r="0.6" fill="#e8d0f0" opacity="0.5"/><circle cx="17" cy="11.3" r="0.4" fill="#e8d0f0" opacity="0.4"/><circle cx="19.8" cy="29.7" r="1" fill="#e8d0f0" opacity="0.4"/><circle cx="49.6" cy="30.5" r="0.5" fill="#e8d0f0" opacity="0.5"/><circle cx="41.4" cy="40.5" r="1" fill="#e8d0f0" opacity="0.6"/><circle cx="-4.2" cy="30.8" r="0.9" fill="#e8d0f0" opacity="0.8"/><circle cx="45.3" cy="23" r="0.5" fill="#e8d0f0" opacity="0.5"/><circle cx="47.8" cy="29.4" r="0.6" fill="#e8d0f0" opacity="0.4"/><circle cx="61.1" cy="13" r="0.9" fill="#e8d0f0" opacity="0.4"/><circle cx="17.9" cy="26.2" r="0.8" fill="#e8d0f0" opacity="0.6"/><circle cx="21.8" cy="31.4" r="0.9" fill="#e8d0f0" opacity="0.8"/><circle cx="54.8" cy="16.7" r="0.6" fill="#e8d0f0" opacity="0.8"/><circle cx="7.9" cy="32.6" r="0.6" fill="#e8d0f0" opacity="0.6"/><circle cx="3.4" cy="30.7" r="0.5" fill="#e8d0f0" opacity="0.7"/><circle cx="37.3" cy="32.1" r="0.5" fill="#e8d0f0" opacity="0.8"/><circle cx="54.7" cy="18" r="0.7" fill="#e8d0f0" opacity="0.8"/><circle cx="45.2" cy="26.6" r="0.6" fill="#e8d0f0" opacity="0.5"/><circle cx="1.3" cy="27.2" r="0.6" fill="#e8d0f0" opacity="0.8"/><circle cx="66.8" cy="21.4" r="0.7" fill="#e8d0f0" opacity="0.5"/><circle cx="8.2" cy="29.9" r="0.4" fill="#e8d0f0" opacity="0.5"/></g><circle cx="46" cy="15" r="6.5" fill="url(#g17)"/><circle cx="56.5" cy="17" r="3.2" fill="url(#g17)"/><circle cx="17" cy="28.5" r="4.8" fill="url(#g17)"/><circle cx="58" cy="34.5" r="5.2" fill="url(#g17)"/><circle cx="14" cy="12" r="2.8" fill="url(#g17)"/><circle cx="37.5" cy="35" r="3" fill="url(#g17)"/><circle cx="52" cy="40" r="2.6" fill="url(#g17)"/><circle cx="11" cy="32.5" r="2" fill="url(#g17)"/><circle cx="27" cy="15" r="1.8" fill="url(#g17)"/><circle cx="41" cy="27" r="2" fill="url(#g17)"/><circle cx="3" cy="20" r="1.6" fill="url(#g17)"/><circle cx="47" cy="24" r="1.8" fill="url(#g17)"/><circle cx="44" cy="37" r="1.6" fill="url(#g17)"/></svg></div>
<div class="th" style="left:459px;top:323px"><svg viewBox="0 0 64 48" preserveAspectRatio="none"><defs><filter id="b18a" x="-20%" y="-20%" width="140%" height="140%"><feGaussianBlur stdDeviation="0.6"/></filter><filter id="b18b" x="-60%" y="-60%" width="220%" height="220%"><feGaussianBlur stdDeviation="1.5"/></filter><filter id="b18c" x="-100%" y="-100%" width="300%" height="300%"><feGaussianBlur stdDeviation="3"/></filter><radialGradient id="g18"><stop offset="0" stop-color="#ffc070"/><stop offset=".4" stop-color="#d89050" stop-opacity=".8"/><stop offset="1" stop-color="#c08040" stop-opacity="0"/></radialGradient></defs><rect width="64" height="48" fill="#4a4e3e"/><path d="M-65 0 L-37 48" stroke="#5c9484" stroke-width=".5" opacity=".5"/><path d="M-35 0 L-65 48" stroke="#6a9a7a" stroke-width=".5" opacity=".45"/><path d="M-55.5 0 L-27.5 48" stroke="#5c9484" stroke-width=".5" opacity=".5"/><path d="M-25.5 0 L-55.5 48" stroke="#6a9a7a" stroke-width=".5" opacity=".45"/><path d="M-48.5 0 L-20.5 48" stroke="#5c9484" stroke-width=".5" opacity=".5"/><path d="M-18.5 0 L-48.5 48" stroke="#6a9a7a" stroke-width=".5" opacity=".45"/><path d="M-40.9 0 L-12.9 48" stroke="#5c9484" stroke-width=".5" opacity=".5"/><path d="M-10.9 0 L-40.9 48" stroke="#6a9a7a" stroke-width=".5" opacity=".45"/><path d="M-32 0 L-4 48" stroke="#5c9484" stroke-width=".5" opacity=".5"/><path d="M-2 0 L-32 48" stroke="#6a9a7a" stroke-width=".5" opacity=".45"/><path d="M-24 0 L4 48" stroke="#5c9484" stroke-width=".5" opacity=".5"/><path d="M6 0 L-24 48" stroke="#6a9a7a" stroke-width=".5" opacity=".45"/><path d="M-16.1 0 L11.9 48" stroke="#5c9484" stroke-width=".5" opacity=".5"/><path d="M13.9 0 L-16.1 48" stroke="#6a9a7a" stroke-width=".5" opacity=".45"/><path d="M-8.1 0 L19.9 48" stroke="#5c9484" stroke-width=".5" opacity=".5"/><path d="M21.9 0 L-8.1 48" stroke="#6a9a7a" stroke-width=".5" opacity=".45"/><path d="M-0.7 0 L27.3 48" stroke="#5c9484" stroke-width=".5" opacity=".5"/><path d="M29.3 0 L-0.7 48" stroke="#6a9a7a" stroke-width=".5" opacity=".45"/><path d="M7.3 0 L35.3 48" stroke="#5c9484" stroke-width=".5" opacity=".5"/><path d="M37.3 0 L7.3 48" stroke="#6a9a7a" stroke-width=".5" opacity=".45"/><path d="M16.6 0 L44.6 48" stroke="#5c9484" stroke-width=".5" opacity=".5"/><path d="M46.6 0 L16.6 48" stroke="#6a9a7a" stroke-width=".5" opacity=".45"/><path d="M23.5 0 L51.5 48" stroke="#5c9484" stroke-width=".5" opacity=".5"/><path d="M53.5 0 L23.5 48" stroke="#6a9a7a" stroke-width=".5" opacity=".45"/><path d="M32.5 0 L60.5 48" stroke="#5c9484" stroke-width=".5" opacity=".5"/><path d="M62.5 0 L32.5 48" stroke="#6a9a7a" stroke-width=".5" opacity=".45"/><path d="M40.9 0 L68.9 48" stroke="#5c9484" stroke-width=".5" opacity=".5"/><path d="M70.9 0 L40.9 48" stroke="#6a9a7a" stroke-width=".5" opacity=".45"/><path d="M49.1 0 L77.1 48" stroke="#5c9484" stroke-width=".5" opacity=".5"/><path d="M79.1 0 L49.1 48" stroke="#6a9a7a" stroke-width=".5" opacity=".45"/><path d="M57.3 0 L85.3 48" stroke="#5c9484" stroke-width=".5" opacity=".5"/><path d="M87.3 0 L57.3 48" stroke="#6a9a7a" stroke-width=".5" opacity=".45"/><path d="M63.2 0 L91.2 48" stroke="#5c9484" stroke-width=".5" opacity=".5"/><path d="M93.2 0 L63.2 48" stroke="#6a9a7a" stroke-width=".5" opacity=".45"/><path d="M71.2 0 L99.2 48" stroke="#5c9484" stroke-width=".5" opacity=".5"/><path d="M101.2 0 L71.2 48" stroke="#6a9a7a" stroke-width=".5" opacity=".45"/><path d="M80.7 0 L108.7 48" stroke="#5c9484" stroke-width=".5" opacity=".5"/><path d="M110.7 0 L80.7 48" stroke="#6a9a7a" stroke-width=".5" opacity=".45"/><path d="M88.2 0 L116.2 48" stroke="#5c9484" stroke-width=".5" opacity=".5"/><path d="M118.2 0 L88.2 48" stroke="#6a9a7a" stroke-width=".5" opacity=".45"/><path d="M95.1 0 L123.1 48" stroke="#5c9484" stroke-width=".5" opacity=".5"/><path d="M125.1 0 L95.1 48" stroke="#6a9a7a" stroke-width=".5" opacity=".45"/><path d="M104.5 0 L132.5 48" stroke="#5c9484" stroke-width=".5" opacity=".5"/><path d="M134.5 0 L104.5 48" stroke="#6a9a7a" stroke-width=".5" opacity=".45"/><path d="M0 1.5 L64 15.5" stroke="#5a8a80" stroke-width=".5" opacity=".45"/><path d="M0 9.3 L64 23.3" stroke="#5a8a80" stroke-width=".5" opacity=".45"/><path d="M0 14.9 L64 28.9" stroke="#5a8a80" stroke-width=".5" opacity=".45"/><path d="M0 23.2 L64 37.2" stroke="#5a8a80" stroke-width=".5" opacity=".45"/><path d="M0 30 L64 44" stroke="#5a8a80" stroke-width=".5" opacity=".45"/><path d="M0 41.9 L64 55.9" stroke="#5a8a80" stroke-width=".5" opacity=".45"/><path d="M0 46.9 L64 60.9" stroke="#5a8a80" stroke-width=".5" opacity=".45"/><path d="M19 0 L21 48" stroke="#809088" stroke-width=".5" opacity=".6"/><path d="M58 0 L60 48" stroke="#809088" stroke-width=".5" opacity=".6"/><circle cx="13" cy="18" r="2.4" fill="url(#g18)"/><circle cx="52.5" cy="16.5" r="2.4" fill="url(#g18)"/><circle cx="62.5" cy="14" r="2.8" fill="url(#g18)"/><circle cx="16" cy="40" r="2.2" fill="url(#g18)"/><circle cx="55" cy="38.5" r="2.4" fill="url(#g18)"/><circle cx="30" cy="7" r="1.6" fill="url(#g18)"/><circle cx="8" cy="7" r="1.5" fill="url(#g18)"/><circle cx="10" cy="29.5" r="1.5" fill="url(#g18)"/><circle cx="32" cy="30" r="1.5" fill="url(#g18)"/><circle cx="50" cy="28" r="1.6" fill="url(#g18)"/><circle cx="47" cy="5.5" r="1.6" fill="url(#g18)"/><circle cx="29" cy="19" r="1.3" fill="url(#g18)"/><circle cx="36" cy="40" r="1.3" fill="url(#g18)"/><circle cx="48" cy="18" r="1.2" fill="url(#g18)"/><circle cx="33" cy="42" r="1.2" fill="url(#g18)"/><circle cx="23" cy="27" r="1.2" fill="url(#g18)"/></svg></div>
<div class="th" style="left:59px;top:385px"><svg viewBox="0 0 64 48" preserveAspectRatio="none"><defs><filter id="b19a" x="-20%" y="-20%" width="140%" height="140%"><feGaussianBlur stdDeviation="0.6"/></filter><filter id="b19b" x="-60%" y="-60%" width="220%" height="220%"><feGaussianBlur stdDeviation="1.5"/></filter><filter id="b19c" x="-100%" y="-100%" width="300%" height="300%"><feGaussianBlur stdDeviation="3"/></filter><linearGradient id="g19" x1="0" y1="0" x2="0" y2="1"><stop offset="0" stop-color="#f48cc8"/><stop offset="1" stop-color="#f2b8d0"/></linearGradient></defs><rect width="64" height="48" fill="#f1c6ce"/><path d="M8 12 L26 0 L64 0 L64 14 Q40 8 26 10Z" fill="url(#g19)" filter="url(#b19a)"/><circle cx="43.3" cy="39" r="0.6" fill="#ec98c0" opacity="0.5"/><circle cx="25.2" cy="47.9" r="0.4" fill="#ec98c0" opacity="0.4"/><circle cx="16.7" cy="16.9" r="0.5" fill="#ec98c0" opacity="0.4"/><circle cx="6.9" cy="19.7" r="0.5" fill="#ec98c0" opacity="0.5"/><circle cx="12.9" cy="9" r="0.4" fill="#ec98c0" opacity="0.5"/><circle cx="24.9" cy="36.8" r="0.7" fill="#ec98c0" opacity="0.5"/><circle cx="6.4" cy="36.6" r="0.7" fill="#ec98c0" opacity="0.5"/><circle cx="42.1" cy="18.6" r="0.8" fill="#ec98c0" opacity="0.6"/><circle cx="50.7" cy="46.1" r="0.4" fill="#ec98c0" opacity="0.5"/><circle cx="46.8" cy="39.7" r="0.5" fill="#ec98c0" opacity="0.4"/><circle cx="40.1" cy="10.4" r="0.7" fill="#ec98c0" opacity="0.3"/><circle cx="29.1" cy="26.1" r="0.4" fill="#ec98c0" opacity="0.5"/><circle cx="32" cy="21.5" r="0.7" fill="#ec98c0" opacity="0.6"/><circle cx="57" cy="16.3" r="0.3" fill="#ec98c0" opacity="0.5"/><circle cx="7.3" cy="35.6" r="0.4" fill="#ec98c0" opacity="0.4"/><circle cx="18.2" cy="22.9" r="0.7" fill="#ec98c0" opacity="0.5"/><circle cx="19.3" cy="34.4" r="0.3" fill="#ec98c0" opacity="0.4"/><circle cx="44" cy="37.6" r="0.4" fill="#ec98c0" opacity="0.3"/><circle cx="32.4" cy="33.6" r="0.3" fill="#ec98c0" opacity="0.5"/><circle cx="17.6" cy="9.6" r="0.4" fill="#ec98c0" opacity="0.4"/><circle cx="29.9" cy="10.7" r="0.6" fill="#ec98c0" opacity="0.7"/><circle cx="43.8" cy="8.9" r="0.6" fill="#ec98c0" opacity="0.6"/><circle cx="0.6" cy="22.2" r="0.6" fill="#ec98c0" opacity="0.7"/><circle cx="59.5" cy="29.9" r="0.6" fill="#ec98c0" opacity="0.7"/><circle cx="13.5" cy="27.4" r="0.3" fill="#ec98c0" opacity="0.6"/><circle cx="41.8" cy="14.8" r="0.4" fill="#ec98c0" opacity="0.5"/><circle cx="48.1" cy="11.7" r="0.5" fill="#ec98c0" opacity="0.5"/><circle cx="16.7" cy="43.1" r="0.7" fill="#ec98c0" opacity="0.7"/><circle cx="41" cy="34.6" r="0.4" fill="#ec98c0" opacity="0.5"/><circle cx="27.5" cy="26.1" r="0.3" fill="#ec98c0" opacity="0.6"/><circle cx="9.9" cy="25.2" r="0.8" fill="#ec98c0" opacity="0.5"/><circle cx="55.6" cy="16.9" r="0.5" fill="#ec98c0" opacity="0.5"/><circle cx="20.8" cy="21.5" r="0.5" fill="#ec98c0" opacity="0.6"/><circle cx="62.1" cy="10" r="0.6" fill="#ec98c0" opacity="0.5"/><circle cx="26.4" cy="7.7" r="0.5" fill="#ec98c0" opacity="0.4"/><circle cx="23.5" cy="30.9" r="0.5" fill="#ec98c0" opacity="0.4"/><circle cx="17.6" cy="47" r="0.5" fill="#ec98c0" opacity="0.7"/><circle cx="10.6" cy="33.9" r="0.6" fill="#ec98c0" opacity="0.6"/><circle cx="32.9" cy="42.7" r="0.6" fill="#ec98c0" opacity="0.3"/><circle cx="43.7" cy="31.8" r="0.4" fill="#ec98c0" opacity="0.6"/><circle cx="53.5" cy="17.6" r="0.4" fill="#ec98c0" opacity="0.4"/><circle cx="37.7" cy="24.7" r="0.3" fill="#ec98c0" opacity="0.5"/><circle cx="35" cy="30.3" r="0.5" fill="#ec98c0" opacity="0.6"/><circle cx="43.3" cy="16.9" r="0.5" fill="#ec98c0" opacity="0.7"/><circle cx="14.1" cy="24.8" r="0.5" fill="#ec98c0" opacity="0.5"/><circle cx="50.9" cy="11.2" r="0.4" fill="#ec98c0" opacity="0.3"/><circle cx="8.1" cy="27.9" r="0.5" fill="#ec98c0" opacity="0.7"/><circle cx="29" cy="28.1" r="0.3" fill="#ec98c0" opacity="0.4"/><circle cx="19.8" cy="16.2" r="0.7" fill="#ec98c0" opacity="0.5"/><circle cx="8.7" cy="28.4" r="0.4" fill="#ec98c0" opacity="0.4"/><circle cx="38.9" cy="9.6" r="0.7" fill="#ec98c0" opacity="0.5"/><circle cx="4.1" cy="34.3" r="0.8" fill="#ec98c0" opacity="0.6"/><circle cx="53.8" cy="45.4" r="0.4" fill="#ec98c0" opacity="0.5"/><circle cx="47.4" cy="22.7" r="0.8" fill="#ec98c0" opacity="0.5"/><circle cx="1.4" cy="10" r="0.5" fill="#ec98c0" opacity="0.3"/><circle cx="39" cy="47.8" r="0.8" fill="#ec98c0" opacity="0.7"/><circle cx="15.9" cy="13.6" r="0.3" fill="#ec98c0" opacity="0.7"/><circle cx="1.7" cy="9" r="0.6" fill="#ec98c0" opacity="0.7"/><circle cx="34.2" cy="8.6" r="0.3" fill="#ec98c0" opacity="0.6"/><circle cx="44.1" cy="19" r="0.8" fill="#ec98c0" opacity="0.4"/><circle cx="9.5" cy="46.6" r="0.3" fill="#ec98c0" opacity="0.4"/><circle cx="11.5" cy="32.9" r="0.5" fill="#ec98c0" opacity="0.4"/><circle cx="40.2" cy="10.5" r="0.8" fill="#ec98c0" opacity="0.6"/><circle cx="13.4" cy="31" r="0.4" fill="#ec98c0" opacity="0.5"/><circle cx="20.2" cy="14.8" r="0.5" fill="#ec98c0" opacity="0.3"/><circle cx="63.5" cy="39.1" r="0.4" fill="#ec98c0" opacity="0.5"/><circle cx="11.3" cy="13" r="0.5" fill="#ec98c0" opacity="0.6"/><circle cx="4.4" cy="45.3" r="0.4" fill="#ec98c0" opacity="0.4"/><circle cx="31.2" cy="44" r="0.5" fill="#ec98c0" opacity="0.5"/><circle cx="63.2" cy="28.1" r="0.5" fill="#ec98c0" opacity="0.4"/><circle cx="23" cy="22" r="0.8" fill="#f4b4cc" stroke="#e868a8" stroke-width=".9"/><circle cx="27" cy="24.5" r="1" fill="#f4b4cc" stroke="#e868a8" stroke-width=".9"/><circle cx="32" cy="28" r="1.4" fill="#f4b4cc" stroke="#e868a8" stroke-width=".9"/><circle cx="38.5" cy="32.5" r="2.2" fill="#f4b4cc" stroke="#e868a8" stroke-width=".9"/><circle cx="47" cy="38" r="2.8" fill="#f4b4cc" stroke="#e868a8" stroke-width=".9"/><circle cx="56" cy="44.5" r="3.2" fill="#f4b4cc" stroke="#e868a8" stroke-width=".9"/><ellipse cx="60" cy="20" rx="2" ry="1.200" fill="#f090c4" opacity=".8"/><ellipse cx="20" cy="41" rx="2" ry="1" fill="#f0a0c8" opacity=".8"/></svg></div>
<div class="th" style="left:139px;top:385px"><svg viewBox="0 0 64 48" preserveAspectRatio="none"><defs><filter id="b20a" x="-20%" y="-20%" width="140%" height="140%"><feGaussianBlur stdDeviation="0.6"/></filter><filter id="b20b" x="-60%" y="-60%" width="220%" height="220%"><feGaussianBlur stdDeviation="1.5"/></filter><filter id="b20c" x="-100%" y="-100%" width="300%" height="300%"><feGaussianBlur stdDeviation="3"/></filter><linearGradient id="g20" x1=".1" y1="0" x2="0" y2="1"><stop offset="0" stop-color="#52b40c"/><stop offset=".25" stop-color="#40bc30"/><stop offset=".42" stop-color="#18ac8c"/><stop offset=".56" stop-color="#188cbc"/><stop offset=".7" stop-color="#3858c0"/><stop offset=".85" stop-color="#ac1cb0"/><stop offset="1" stop-color="#861ca4"/></linearGradient><filter id="n20" x="0" y="0" width="100%" height="100%"><feTurbulence type="fractalNoise" baseFrequency=".9" numOctaves="1" seed="2"/><feColorMatrix values="0 0 0 0 1  0 0 0 0 1  0 0 0 0 1  .9 0 0 0 -.35"/></filter></defs><rect width="64" height="48" fill="url(#g20)"/><g filter="url(#b20b)"><ellipse cx="4" cy="42" rx="14" ry="9" fill="#4030b4"/><ellipse cx="34" cy="42" rx="12" ry="7" fill="#c418b4"/><ellipse cx="60" cy="40" rx="8" ry="8" fill="#8630bc"/><ellipse cx="50" cy="24" rx="14" ry="5" fill="#1898b8"/></g><rect width="64" height="48" filter="url(#n20)" opacity=".3"/><path d="M4 0 v7.5" stroke="#3a5a10" stroke-width="1" opacity=".8"/><path d="M9 0 v6.4" stroke="#3a5a10" stroke-width="1" opacity=".8"/><path d="M15 0 v6.8" stroke="#3a5a10" stroke-width="1" opacity=".8"/><path d="M30 0 v7.5" stroke="#3a5a10" stroke-width="1" opacity=".8"/><path d="M36 0 v4.3" stroke="#3a5a10" stroke-width="1" opacity=".8"/><path d="M41 0 v6.2" stroke="#3a5a10" stroke-width="1" opacity=".8"/><path d="M57 0 v7.5" stroke="#3a5a10" stroke-width="1" opacity=".8"/><path d="M61 0 v7.4" stroke="#3a5a10" stroke-width="1" opacity=".8"/><g filter="url(#b20a)" fill="none" stroke-width="1.700"><path d="M25 0 Q20 10 21 20 Q22 34 20 48" stroke="#5a4a28"/><path d="M27 0 Q22 10 22.500 20" stroke="#b868a8" stroke-width="1.300"/><path d="M45 0 Q50 10 48 20 Q46 34 48 48" stroke="#868038"/><path d="M51 0 Q50 10 48 18" stroke="#a868a8" stroke-width="1.300"/><path d="M0 22 Q4 8 20 2" stroke="#a07888"/><path d="M21 19 Q34 14 46 17 Q56 20 64 12" stroke="#b870a0"/><path d="M0 38 Q10 30 16 26 Q20 22 21 20" stroke="#a0a050"/><path d="M56 48 Q54 36 62 30" stroke="#b0a840"/><path d="M0 24 Q8 30 14 32" stroke="#a09860"/><path d="M22 30 Q24 40 26 48" stroke="#8a8848" stroke-width="1.200"/></g></svg></div>
<div class="th" style="left:219px;top:385px"><svg viewBox="0 0 64 48" preserveAspectRatio="none"><defs><filter id="b21a" x="-20%" y="-20%" width="140%" height="140%"><feGaussianBlur stdDeviation="0.6"/></filter><filter id="b21b" x="-60%" y="-60%" width="220%" height="220%"><feGaussianBlur stdDeviation="1.5"/></filter><filter id="b21c" x="-100%" y="-100%" width="300%" height="300%"><feGaussianBlur stdDeviation="3"/></filter><filter id="n21" x="0" y="0" width="100%" height="100%"><feTurbulence type="turbulence" baseFrequency=".09 .16" numOctaves="3" seed="7"/><feColorMatrix values="0 0 0 0 .07  0 0 0 0 .05  0 0 0 0 .04  3.4 0 0 0 -.75"/></filter><clipPath id="c21"><rect x="10" y="2" width="46" height="44"/></clipPath></defs><rect width="64" height="48" fill="#121212"/><rect x="10" y="2" width="46" height="44" fill="#e09c66"/><g clip-path="url(#c21)"><g filter="url(#b21b)"><ellipse cx="43" cy="10" rx="10" ry="6" fill="#20140e" opacity=".9"/><ellipse cx="20" cy="27" rx="6" ry="5" fill="#2e1c12" opacity=".85"/><ellipse cx="30" cy="33" rx="5" ry="3" fill="#3a2418" opacity=".75"/><ellipse cx="47" cy="24" rx="4" ry="8" fill="#3a2418" opacity=".5"/></g><g filter="url(#b21a)"><ellipse cx="27" cy="27" rx="7" ry="5" fill="none" stroke="#4a2c1a" stroke-width="1.300" opacity=".6" transform="rotate(-20 27 27)"/><ellipse cx="27" cy="27" rx="10" ry="7.5" fill="none" stroke="#f8c898" stroke-width="1.300" opacity=".6" transform="rotate(-20 27 27)"/><ellipse cx="27" cy="27" rx="13" ry="10" fill="none" stroke="#4a2c1a" stroke-width="1.300" opacity=".6" transform="rotate(-20 27 27)"/><ellipse cx="27" cy="27" rx="16" ry="12" fill="none" stroke="#f8c898" stroke-width="1.300" opacity=".6" transform="rotate(-20 27 27)"/><ellipse cx="27" cy="27" rx="19" ry="14.5" fill="none" stroke="#4a2c1a" stroke-width="1.300" opacity=".6" transform="rotate(-20 27 27)"/><ellipse cx="27" cy="27" rx="22" ry="17" fill="none" stroke="#f8c898" stroke-width="1.300" opacity=".6" transform="rotate(-20 27 27)"/><ellipse cx="27" cy="27" rx="25" ry="19" fill="none" stroke="#4a2c1a" stroke-width="1.300" opacity=".6" transform="rotate(-20 27 27)"/></g><rect x="10" y="2" width="46" height="44" filter="url(#n21)" opacity=".7"/></g></svg></div>
<div class="th" style="left:299px;top:385px"><svg viewBox="0 0 64 48" preserveAspectRatio="none"><defs><filter id="b22a" x="-20%" y="-20%" width="140%" height="140%"><feGaussianBlur stdDeviation="0.6"/></filter><filter id="b22b" x="-60%" y="-60%" width="220%" height="220%"><feGaussianBlur stdDeviation="1.5"/></filter><filter id="b22c" x="-100%" y="-100%" width="300%" height="300%"><feGaussianBlur stdDeviation="3"/></filter><filter id="n22" x="0" y="0" width="100%" height="100%"><feTurbulence type="fractalNoise" baseFrequency=".1 .14" numOctaves="3" seed="9"/><feColorMatrix values="0 0 0 0 .16  0 0 0 0 .14  0 0 0 0 .2  2.6 0 0 0 -1.2"/></filter><clipPath id="c22"><path d="M0 24 Q14 28 24 18 Q30 8 40 3 Q52 -2 64 0 L64 24 Q50 24 44 32 Q38 44 22 48 L0 48Z"/></clipPath></defs><rect width="64" height="48" fill="#2a2a2e"/><g filter="url(#b22b)"><path d="M0 26 Q14 30 24 20 Q30 10 40 5 Q52 0 64 1 L64 23 Q50 24 44 32 Q38 44 22 47 L0 48Z" fill="#5c3cac"/><path d="M28 13 Q40 7 64 1 L64 10 Q46 14 36 22Z" fill="#7c5ad4"/><path d="M0 34 Q16 40 30 30 L34 36 Q20 46 0 46Z" fill="#6a4ac4"/><path d="M0 38 L20 48 L0 48Z" fill="#7a58d0"/></g><g clip-path="url(#c22)"><rect width="64" height="48" filter="url(#n22)" opacity=".5"/></g><ellipse cx="32" cy="24" rx="7" ry="3.800" fill="#c89af0" transform="rotate(-38 32 24)" filter="url(#b22b)"/><ellipse cx="32" cy="24" rx="4" ry="2" fill="#f4d8fc" transform="rotate(-42 32 24)" filter="url(#b22a)"/></svg></div>
<div class="th" style="left:379px;top:385px"><svg viewBox="0 0 64 48" preserveAspectRatio="none"><defs><filter id="b23a" x="-20%" y="-20%" width="140%" height="140%"><feGaussianBlur stdDeviation="0.6"/></filter><filter id="b23b" x="-60%" y="-60%" width="220%" height="220%"><feGaussianBlur stdDeviation="1.5"/></filter><filter id="b23c" x="-100%" y="-100%" width="300%" height="300%"><feGaussianBlur stdDeviation="3"/></filter></defs><rect width="64" height="48" fill="#1c181c"/><g filter="url(#b23a)"><circle cx="59.2" cy="45.5" r="0.7" fill="#d8b8dc" opacity="0.4"/><circle cx="37.9" cy="20.3" r="0.6" fill="#d8b8dc" opacity="0.5"/><circle cx="12.3" cy="21.3" r="0.4" fill="#d8b8dc" opacity="0.6"/><circle cx="1.6" cy="4.1" r="0.7" fill="#d8b8dc" opacity="0.6"/><circle cx="32.8" cy="35.2" r="0.5" fill="#d8b8dc" opacity="0.4"/><circle cx="50.1" cy="28.3" r="0.6" fill="#d8b8dc" opacity="0.7"/><circle cx="62.1" cy="17.4" r="0.7" fill="#d8b8dc" opacity="0.6"/><circle cx="36.6" cy="31.7" r="0.5" fill="#d8b8dc" opacity="0.4"/><circle cx="30.3" cy="34.5" r="0.6" fill="#d8b8dc" opacity="0.6"/><circle cx="41.1" cy="8.7" r="0.4" fill="#d8b8dc" opacity="0.6"/><circle cx="52.2" cy="9.4" r="0.4" fill="#d8b8dc" opacity="0.4"/><circle cx="2.5" cy="13.2" r="0.6" fill="#d8b8dc" opacity="0.8"/><circle cx="21.2" cy="17.7" r="0.4" fill="#d8b8dc" opacity="0.6"/><circle cx="49.8" cy="26.4" r="0.4" fill="#d8b8dc" opacity="0.5"/><circle cx="50.2" cy="33.9" r="0.7" fill="#d8b8dc" opacity="0.5"/><circle cx="34.9" cy="44.1" r="0.6" fill="#d8b8dc" opacity="0.9"/><circle cx="10.7" cy="46.8" r="0.3" fill="#d8b8dc" opacity="0.6"/><circle cx="1.5" cy="38.9" r="0.6" fill="#d8b8dc" opacity="0.9"/><circle cx="51.5" cy="45.5" r="0.6" fill="#d8b8dc" opacity="0.9"/><circle cx="47.9" cy="16.6" r="0.8" fill="#d8b8dc" opacity="0.6"/><circle cx="12.4" cy="3.6" r="0.5" fill="#d8b8dc" opacity="0.5"/><circle cx="59.7" cy="45.6" r="0.4" fill="#d8b8dc" opacity="0.5"/><circle cx="33.9" cy="8.1" r="0.6" fill="#d8b8dc" opacity="0.8"/><circle cx="16.2" cy="20.2" r="0.8" fill="#d8b8dc" opacity="0.6"/><circle cx="21.9" cy="42.8" r="0.7" fill="#d8b8dc" opacity="0.8"/><circle cx="44" cy="19.8" r="0.6" fill="#d8b8dc" opacity="0.8"/><circle cx="40.9" cy="11.4" r="0.4" fill="#d8b8dc" opacity="0.6"/><circle cx="49.4" cy="26.7" r="0.6" fill="#d8b8dc" opacity="0.8"/><circle cx="6.9" cy="30.3" r="0.5" fill="#d8b8dc" opacity="0.7"/><circle cx="53.5" cy="11.9" r="0.8" fill="#d8b8dc" opacity="0.4"/><circle cx="36" cy="26" r="0.4" fill="#d8b8dc" opacity="0.7"/><circle cx="30.1" cy="21.6" r="0.7" fill="#d8b8dc" opacity="0.4"/><circle cx="24.1" cy="37.7" r="0.4" fill="#d8b8dc" opacity="0.8"/><circle cx="13" cy="32.7" r="0.4" fill="#d8b8dc" opacity="0.6"/><circle cx="27" cy="3.9" r="0.6" fill="#d8b8dc" opacity="0.6"/><circle cx="44.1" cy="25.9" r="0.6" fill="#d8b8dc" opacity="0.7"/><circle cx="19.1" cy="43.1" r="0.3" fill="#d8b8dc" opacity="0.8"/><circle cx="55.3" cy="23.9" r="0.7" fill="#d8b8dc" opacity="0.7"/><circle cx="38.7" cy="14" r="0.5" fill="#d8b8dc" opacity="0.6"/><circle cx="19.3" cy="46.1" r="0.5" fill="#d8b8dc" opacity="0.6"/><circle cx="26.9" cy="39.2" r="0.5" fill="#d8b8dc" opacity="0.7"/><circle cx="16.4" cy="13.3" r="0.3" fill="#d8b8dc" opacity="0.5"/><circle cx="16.9" cy="40.9" r="0.6" fill="#d8b8dc" opacity="0.5"/><circle cx="29.6" cy="5.8" r="0.6" fill="#d8b8dc" opacity="0.6"/><circle cx="54.9" cy="12.4" r="0.7" fill="#d8b8dc" opacity="0.5"/><circle cx="62.9" cy="30.4" r="0.3" fill="#d8b8dc" opacity="0.8"/><circle cx="17.6" cy="17.4" r="0.4" fill="#d8b8dc" opacity="0.8"/><circle cx="5.8" cy="35.4" r="0.5" fill="#d8b8dc" opacity="0.7"/><circle cx="18.8" cy="3.8" r="0.8" fill="#d8b8dc" opacity="0.7"/><circle cx="10.9" cy="46.9" r="0.8" fill="#d8b8dc" opacity="0.5"/><circle cx="1.2" cy="29.3" r="0.4" fill="#d8b8dc" opacity="0.8"/><circle cx="30" cy="34" r="0.6" fill="#d8b8dc" opacity="0.8"/><circle cx="52.6" cy="28.9" r="0.6" fill="#d8b8dc" opacity="0.6"/><circle cx="8.6" cy="4.4" r="0.7" fill="#d8b8dc" opacity="0.5"/><circle cx="27.3" cy="15.2" r="0.6" fill="#d8b8dc" opacity="0.7"/><circle cx="55" cy="20.9" r="0.5" fill="#d8b8dc" opacity="0.7"/><circle cx="47.7" cy="44.4" r="0.5" fill="#d8b8dc" opacity="0.8"/><circle cx="62.8" cy="47.2" r="0.4" fill="#d8b8dc" opacity="0.6"/><circle cx="49.5" cy="39.9" r="0.3" fill="#d8b8dc" opacity="0.6"/><circle cx="46.3" cy="36.4" r="0.6" fill="#d8b8dc" opacity="0.5"/><circle cx="26" cy="2.8" r="0.5" fill="#d8b8dc" opacity="0.6"/><circle cx="52.7" cy="28.3" r="0.5" fill="#d8b8dc" opacity="0.5"/><circle cx="20.2" cy="32.2" r="0.5" fill="#d8b8dc" opacity="0.5"/><circle cx="52.6" cy="27.6" r="0.8" fill="#d8b8dc" opacity="0.7"/><circle cx="39.9" cy="20.5" r="0.6" fill="#d8b8dc" opacity="0.9"/><circle cx="62.8" cy="31.7" r="0.5" fill="#d8b8dc" opacity="0.4"/><circle cx="53.8" cy="18.8" r="0.5" fill="#d8b8dc" opacity="0.4"/><circle cx="2.2" cy="18.7" r="0.8" fill="#d8b8dc" opacity="0.8"/><circle cx="45.4" cy="32.1" r="0.4" fill="#d8b8dc" opacity="0.5"/><circle cx="38.6" cy="3.1" r="0.6" fill="#d8b8dc" opacity="0.7"/><circle cx="34.7" cy="5.8" r="0.3" fill="#d8b8dc" opacity="0.6"/><circle cx="9.3" cy="30.8" r="0.5" fill="#d8b8dc" opacity="0.7"/><circle cx="48" cy="29.1" r="0.6" fill="#d8b8dc" opacity="0.5"/><circle cx="22.2" cy="46.9" r="0.4" fill="#d8b8dc" opacity="0.5"/><circle cx="31.6" cy="26.2" r="0.7" fill="#d8b8dc" opacity="0.5"/><circle cx="61.6" cy="1.1" r="0.7" fill="#d8b8dc" opacity="0.7"/><circle cx="57.7" cy="7.3" r="0.6" fill="#d8b8dc" opacity="0.9"/><circle cx="42.7" cy="5.4" r="0.8" fill="#d8b8dc" opacity="0.9"/><circle cx="7.1" cy="39.7" r="0.3" fill="#d8b8dc" opacity="0.4"/><circle cx="50.9" cy="34.6" r="0.8" fill="#d8b8dc" opacity="0.7"/><circle cx="32.7" cy="13.1" r="0.6" fill="#d8b8dc" opacity="0.9"/><circle cx="41.4" cy="42" r="0.4" fill="#d8b8dc" opacity="0.8"/><circle cx="46.8" cy="3.4" r="0.7" fill="#d8b8dc" opacity="0.5"/><circle cx="13.9" cy="2.9" r="0.6" fill="#d8b8dc" opacity="0.5"/><circle cx="62.4" cy="0" r="0.7" fill="#d8b8dc" opacity="0.8"/><circle cx="36.4" cy="27.5" r="0.7" fill="#d8b8dc" opacity="0.7"/><circle cx="8.9" cy="38.2" r="0.5" fill="#d8b8dc" opacity="0.7"/><circle cx="32.8" cy="43.4" r="0.5" fill="#d8b8dc" opacity="0.8"/><circle cx="5.2" cy="15.7" r="0.6" fill="#d8b8dc" opacity="0.7"/><circle cx="53.3" cy="10" r="0.7" fill="#d8b8dc" opacity="0.8"/><circle cx="9.1" cy="6.7" r="0.6" fill="#d8b8dc" opacity="0.9"/><circle cx="39.3" cy="20.5" r="0.6" fill="#d8b8dc" opacity="0.8"/><circle cx="33.4" cy="25.8" r="0.6" fill="#d8b8dc" opacity="0.9"/><circle cx="51.2" cy="40.3" r="0.4" fill="#d8b8dc" opacity="0.7"/><circle cx="52.7" cy="34.5" r="0.8" fill="#d8b8dc" opacity="0.9"/><circle cx="8.2" cy="24.4" r="0.5" fill="#d8b8dc" opacity="0.5"/><circle cx="32.1" cy="47.2" r="0.7" fill="#d8b8dc" opacity="0.4"/><circle cx="15.9" cy="17.7" r="0.7" fill="#d8b8dc" opacity="0.6"/><circle cx="10.2" cy="26.4" r="0.4" fill="#d8b8dc" opacity="0.4"/><circle cx="37.9" cy="47.6" r="0.7" fill="#d8b8dc" opacity="0.8"/><circle cx="9.8" cy="27" r="0.6" fill="#d8b8dc" opacity="0.8"/><circle cx="28.6" cy="2.6" r="0.8" fill="#d8b8dc" opacity="0.5"/><circle cx="47.3" cy="22.3" r="0.7" fill="#d8b8dc" opacity="0.6"/><circle cx="5.9" cy="20.5" r="0.5" fill="#d8b8dc" opacity="0.8"/><circle cx="25.8" cy="32" r="0.5" fill="#d8b8dc" opacity="0.8"/><circle cx="11.2" cy="42.2" r="0.8" fill="#d8b8dc" opacity="0.4"/><circle cx="54.9" cy="37.3" r="0.6" fill="#d8b8dc" opacity="0.5"/><circle cx="46.9" cy="37" r="0.6" fill="#d8b8dc" opacity="0.9"/><circle cx="60.6" cy="30.4" r="0.8" fill="#d8b8dc" opacity="0.5"/><circle cx="19.1" cy="25.4" r="0.6" fill="#d8b8dc" opacity="0.9"/><circle cx="40.7" cy="29.8" r="0.6" fill="#d8b8dc" opacity="0.9"/><circle cx="25.6" cy="35.5" r="0.6" fill="#d8b8dc" opacity="0.6"/><circle cx="21.7" cy="7.4" r="0.3" fill="#d8b8dc" opacity="0.6"/><circle cx="19.2" cy="3.9" r="0.5" fill="#d8b8dc" opacity="0.6"/><circle cx="59.3" cy="37.5" r="0.6" fill="#d8b8dc" opacity="0.8"/><circle cx="17.6" cy="5.6" r="0.6" fill="#d8b8dc" opacity="0.5"/><circle cx="63" cy="20.4" r="0.7" fill="#d8b8dc" opacity="0.5"/><circle cx="6" cy="30.1" r="0.6" fill="#d8b8dc" opacity="0.5"/><circle cx="59.3" cy="46.7" r="0.6" fill="#d8b8dc" opacity="0.9"/><circle cx="62.9" cy="7.1" r="0.7" fill="#d8b8dc" opacity="0.8"/><circle cx="11" cy="7" r="2.2" fill="#f0d8f4"/><circle cx="58" cy="4" r="2.6" fill="#f0d8f4"/><circle cx="21" cy="14" r="1.6" fill="#f0d8f4"/><circle cx="27.5" cy="19" r="1.3" fill="#f0d8f4"/><circle cx="55" cy="12" r="1.6" fill="#f0d8f4"/><circle cx="53" cy="18" r="1.3" fill="#f0d8f4"/><circle cx="2" cy="20" r="1.3" fill="#f0d8f4"/><circle cx="5" cy="44" r="1.5" fill="#f0d8f4"/><circle cx="25" cy="46" r="1.8" fill="#f0d8f4"/><circle cx="60" cy="44.5" r="2.2" fill="#f0d8f4"/><circle cx="56" cy="41" r="1.5" fill="#f0d8f4"/><circle cx="30" cy="42" r="1.3" fill="#f0d8f4"/><circle cx="51" cy="22" r="1" fill="#f0d8f4"/><circle cx="35" cy="26" r="0.9" fill="#f0d8f4"/><circle cx="40" cy="30" r="0.9" fill="#f0d8f4"/><circle cx="46" cy="34" r="1" fill="#f0d8f4"/><circle cx="52" cy="38" r="1.2" fill="#f0d8f4"/><circle cx="14" cy="27" r="1" fill="#f0d8f4"/><circle cx="35" cy="38" r="1" fill="#f0d8f4"/><circle cx="7" cy="8" r="1" fill="#f0d8f4"/><path d="M20 13 L58 43" stroke="#c8a8cc" stroke-width=".5" opacity=".7"/><path d="M56 14 L34 40" stroke="#a888ac" stroke-width=".4" opacity=".5"/></g></svg></div>
<div class="th" style="left:459px;top:385px"><svg viewBox="0 0 64 48" preserveAspectRatio="none"><defs><filter id="b24a" x="-20%" y="-20%" width="140%" height="140%"><feGaussianBlur stdDeviation="0.6"/></filter><filter id="b24b" x="-60%" y="-60%" width="220%" height="220%"><feGaussianBlur stdDeviation="1.5"/></filter><filter id="b24c" x="-100%" y="-100%" width="300%" height="300%"><feGaussianBlur stdDeviation="3"/></filter><linearGradient id="g24" x1="0" y1="0" x2="1" y2=".6"><stop offset="0" stop-color="#2e2a34"/><stop offset=".5" stop-color="#46404c"/><stop offset="1" stop-color="#6c5a6a"/></linearGradient></defs><rect width="64" height="48" fill="url(#g24)"/><g filter="url(#b24c)"><path d="M0 26 L30 24 L64 6 L64 22 L34 26 L0 40Z" fill="#8a7894" opacity=".8"/><path d="M20 48 L64 26 L64 48Z" fill="#3a3440" opacity=".7"/><path d="M0 44 L30 48 L0 48Z" fill="#6a5a68"/></g><circle cx="45.6" cy="40.3" r="0.4" fill="#b8a4bc" opacity="0.8"/><circle cx="12.4" cy="32.2" r="0.3" fill="#b8a4bc" opacity="0.7"/><circle cx="9.7" cy="33.9" r="0.6" fill="#b8a4bc" opacity="0.7"/><circle cx="28.2" cy="41.6" r="0.7" fill="#b8a4bc" opacity="0.4"/><circle cx="33.1" cy="46" r="0.6" fill="#b8a4bc" opacity="0.5"/><circle cx="19.5" cy="45.7" r="0.3" fill="#b8a4bc" opacity="0.7"/><circle cx="54" cy="7.6" r="0.4" fill="#b8a4bc" opacity="0.5"/><circle cx="34.7" cy="17.6" r="0.7" fill="#b8a4bc" opacity="0.8"/><circle cx="20.2" cy="42.9" r="0.3" fill="#b8a4bc" opacity="0.3"/><circle cx="42.6" cy="38.4" r="0.6" fill="#b8a4bc" opacity="0.8"/><circle cx="55" cy="12.8" r="0.6" fill="#b8a4bc" opacity="0.8"/><circle cx="6" cy="23.7" r="0.4" fill="#b8a4bc" opacity="0.4"/><circle cx="30.7" cy="32.2" r="0.7" fill="#b8a4bc" opacity="0.4"/><circle cx="32.3" cy="47.9" r="0.6" fill="#b8a4bc" opacity="0.6"/><circle cx="15.5" cy="30.3" r="0.4" fill="#b8a4bc" opacity="0.6"/><circle cx="41.5" cy="18.8" r="0.6" fill="#b8a4bc" opacity="0.5"/><circle cx="30" cy="39.9" r="0.4" fill="#b8a4bc" opacity="0.4"/><circle cx="36.8" cy="20.9" r="0.6" fill="#b8a4bc" opacity="0.4"/><circle cx="23.8" cy="2.8" r="0.5" fill="#b8a4bc" opacity="0.5"/><circle cx="28.7" cy="36.7" r="0.3" fill="#b8a4bc" opacity="0.8"/><circle cx="45.5" cy="38.9" r="0.5" fill="#b8a4bc" opacity="0.6"/><circle cx="26.2" cy="19" r="0.4" fill="#b8a4bc" opacity="0.5"/><circle cx="18.8" cy="16.1" r="0.7" fill="#b8a4bc" opacity="0.7"/><circle cx="41" cy="0.8" r="0.4" fill="#b8a4bc" opacity="0.6"/><circle cx="44.3" cy="20.1" r="0.6" fill="#b8a4bc" opacity="0.8"/><circle cx="17.1" cy="18.3" r="0.6" fill="#b8a4bc" opacity="0.5"/><circle cx="46.2" cy="19.1" r="0.3" fill="#b8a4bc" opacity="0.5"/><circle cx="4.4" cy="37.7" r="0.6" fill="#b8a4bc" opacity="0.6"/><circle cx="57.6" cy="10.2" r="0.5" fill="#b8a4bc" opacity="0.4"/><circle cx="3.1" cy="39.6" r="0.3" fill="#b8a4bc" opacity="0.8"/><circle cx="35.6" cy="33.6" r="0.3" fill="#b8a4bc" opacity="0.8"/><circle cx="50.8" cy="5" r="0.4" fill="#b8a4bc" opacity="0.4"/><circle cx="32.3" cy="3.8" r="0.6" fill="#b8a4bc" opacity="0.5"/><circle cx="45.1" cy="12.2" r="0.6" fill="#b8a4bc" opacity="0.5"/><circle cx="41.5" cy="19.7" r="0.7" fill="#b8a4bc" opacity="0.7"/><circle cx="53.3" cy="16.4" r="0.4" fill="#b8a4bc" opacity="0.4"/><circle cx="8.4" cy="46.4" r="0.4" fill="#b8a4bc" opacity="0.7"/><circle cx="14.9" cy="29.7" r="0.4" fill="#b8a4bc" opacity="0.5"/><circle cx="47.8" cy="29.2" r="0.7" fill="#b8a4bc" opacity="0.4"/><circle cx="17.3" cy="3" r="0.4" fill="#b8a4bc" opacity="0.8"/><circle cx="36.1" cy="22.8" r="0.4" fill="#b8a4bc" opacity="0.7"/><circle cx="44.1" cy="7.5" r="0.3" fill="#b8a4bc" opacity="0.4"/><circle cx="52.3" cy="35.2" r="0.4" fill="#b8a4bc" opacity="0.4"/><circle cx="19.7" cy="32.6" r="0.6" fill="#b8a4bc" opacity="0.4"/><circle cx="21.1" cy="11.4" r="0.7" fill="#b8a4bc" opacity="0.6"/><ellipse cx="32" cy="24" rx="4.400" ry="1.600" fill="#f0dcf8" filter="url(#b24a)"/></svg></div>
<div class="th" style="left:59px;top:447px"><svg viewBox="0 0 64 48" preserveAspectRatio="none"><defs><filter id="b25a" x="-20%" y="-20%" width="140%" height="140%"><feGaussianBlur stdDeviation="0.6"/></filter><filter id="b25b" x="-60%" y="-60%" width="220%" height="220%"><feGaussianBlur stdDeviation="1.5"/></filter><filter id="b25c" x="-100%" y="-100%" width="300%" height="300%"><feGaussianBlur stdDeviation="3"/></filter></defs><rect width="64" height="48" fill="#3038c0"/><g filter="url(#b25b)"><rect x="20" y="20" width="7" height="22" fill="#3c70dc"/><rect x="22" y="22" width="6" height="8" fill="#4890e8"/><rect x="40" y="0" width="24" height="48" fill="#3840c4" opacity=".6"/></g><g filter="url(#b25a)"><rect x="11" y="1" width="1.5" height="2" fill="#30c0a0" transform="rotate(20 11 1)"/><rect x="6" y="8" width="5" height="0.8" fill="#3890e8" transform="rotate(-15 6 8)"/><rect x="29" y="10" width="2" height="1.5" fill="#38b0c0" transform="rotate(0 29 10)"/><rect x="52" y="13" width="1.2" height="3" fill="#38b888" transform="rotate(30 52 13)"/><rect x="20" y="17" width="1.5" height="3.5" fill="#40b890" transform="rotate(20 20 17)"/><rect x="47" y="21" width="5" height="0.8" fill="#3898e0" transform="rotate(25 47 21)"/><rect x="8" y="27" width="1" height="3.5" fill="#40b090" transform="rotate(30 8 27)"/><rect x="30" y="24" width="2" height="2" fill="#40a0f0" transform="rotate(0 30 24)"/><rect x="40" y="30" width="1.2" height="3.5" fill="#38c0e0" transform="rotate(20 40 30)"/><rect x="33" y="36" width="1" height="2.5" fill="#38b088" transform="rotate(10 33 36)"/><rect x="40" y="38" width="1.2" height="2" fill="#38b0e0" transform="rotate(0 40 38)"/><rect x="9" y="44" width="1.5" height="2" fill="#40a888" transform="rotate(0 9 44)"/><rect x="24" y="46" width="1.2" height="2" fill="#30c0c0" transform="rotate(0 24 46)"/><rect x="2" y="17" width="3" height="0.8" fill="#3898d8" transform="rotate(-10 2 17)"/><rect x="1" y="4" width="1" height="2" fill="#30c8b0" transform="rotate(0 1 4)"/><path d="M56 37 L59 37 L56 48 L51 48Z" fill="#48a0d8"/><path d="M54.500 43 L57 43 L55.500 48 L52 48Z" fill="#48b870"/></g></svg></div>
<div class="th" style="left:139px;top:447px"><svg viewBox="0 0 64 48" preserveAspectRatio="none"><defs><filter id="b26a" x="-20%" y="-20%" width="140%" height="140%"><feGaussianBlur stdDeviation="0.6"/></filter><filter id="b26b" x="-60%" y="-60%" width="220%" height="220%"><feGaussianBlur stdDeviation="1.5"/></filter><filter id="b26c" x="-100%" y="-100%" width="300%" height="300%"><feGaussianBlur stdDeviation="3"/></filter></defs><rect width="64" height="48" fill="#0e0e0e"/><rect x="5" y="15.500" width="50" height="19" rx="3" fill="none" stroke="#2c2c2c" stroke-width=".7"/><g filter="url(#b26a)"><rect x="16" y="17.500" width="29" height="16" rx="2" fill="#2a2620"/><ellipse cx="30.500" cy="25.500" rx="12" ry="7.500" fill="#b4ac9a"/><ellipse cx="30.500" cy="25.500" rx="7.500" ry="5.400" fill="none" stroke="#8a50b0" stroke-width="1"/><ellipse cx="30.500" cy="25.500" rx="9.500" ry="6.400" fill="none" stroke="#78a050" stroke-width=".7"/><ellipse cx="30.500" cy="25.500" rx="4.600" ry="3.800" fill="#050505"/><circle cx="30.4" cy="20.7" r="0.6" fill="#1a1410"/><circle cx="24.9" cy="22.9" r="1" fill="#1a1410"/><circle cx="31.1" cy="21.3" r="0.9" fill="#1a1410"/><circle cx="20.5" cy="25.4" r="1.1" fill="#1a1410"/><circle cx="39.3" cy="25" r="1" fill="#1a1410"/><circle cx="33.2" cy="18.3" r="0.5" fill="#1a1410"/><circle cx="37.7" cy="23.6" r="0.6" fill="#1a1410"/><circle cx="21.4" cy="21.5" r="1.1" fill="#1a1410"/><circle cx="23.2" cy="30.7" r="0.5" fill="#1a1410"/><circle cx="38.5" cy="24.5" r="0.8" fill="#1a1410"/><circle cx="35.4" cy="28.5" r="0.5" fill="#1a1410"/><circle cx="22.7" cy="22" r="1" fill="#1a1410"/><circle cx="35.8" cy="21" r="1" fill="#1a1410"/><circle cx="34" cy="32.3" r="0.7" fill="#1a1410"/><circle cx="38.6" cy="23.5" r="0.8" fill="#1a1410"/><circle cx="23.6" cy="25" r="0.5" fill="#1a1410"/><circle cx="20.5" cy="23.7" r="0.5" fill="#1a1410"/><circle cx="23.3" cy="28.5" r="1" fill="#1a1410"/><circle cx="37.6" cy="25.2" r="0.8" fill="#1a1410"/><circle cx="39.1" cy="29.6" r="1.1" fill="#1a1410"/><circle cx="27.9" cy="19.6" r="0.5" fill="#1a1410"/><circle cx="37" cy="28.3" r="0.5" fill="#1a1410"/><circle cx="38.4" cy="31" r="0.7" fill="#1a1410"/><circle cx="39.4" cy="21.8" r="1" fill="#1a1410"/><circle cx="39.4" cy="22.1" r="0.7" fill="#1a1410"/><circle cx="22" cy="26.5" r="0.5" fill="#1a1410"/><circle cx="39.8" cy="27.2" r="0.8" fill="#1a1410"/><circle cx="40.3" cy="24.4" r="1" fill="#1a1410"/><circle cx="20.9" cy="26.4" r="1" fill="#1a1410"/><circle cx="37.1" cy="26.4" r="0.8" fill="#1a1410"/><circle cx="28.2" cy="30.9" r="0.5" fill="#1a1410"/><circle cx="34" cy="29.4" r="0.9" fill="#1a1410"/><circle cx="37.1" cy="26.4" r="0.9" fill="#1a1410"/><circle cx="24.5" cy="27.4" r="1.1" fill="#1a1410"/><ellipse cx="0.500" cy="25.500" rx="1.500" ry="3" fill="#c8c0a8"/><ellipse cx="10.500" cy="25.500" rx="2" ry="2.800" fill="#a8a090"/><ellipse cx="48.500" cy="25.500" rx="1.600" ry="2.800" fill="#a8a090"/><rect x="57.500" y="21.500" width="6.500" height="8" rx="2" fill="#c8c0a8"/><ellipse cx="61" cy="25.500" rx="1.600" ry="1.800" fill="#3a3028"/></g></svg></div>
<div class="th" style="left:219px;top:447px"><svg viewBox="0 0 64 48" preserveAspectRatio="none"><defs><filter id="b27a" x="-20%" y="-20%" width="140%" height="140%"><feGaussianBlur stdDeviation="0.6"/></filter><filter id="b27b" x="-60%" y="-60%" width="220%" height="220%"><feGaussianBlur stdDeviation="1.5"/></filter><filter id="b27c" x="-100%" y="-100%" width="300%" height="300%"><feGaussianBlur stdDeviation="3"/></filter></defs><rect width="64" height="48" fill="#9262ba"/><g filter="url(#b27a)" fill="none" stroke-linecap="round"><path d="M0 22 Q1 12 10 10 Q20 10 28 18 Q20 16 16 21 Q12 27 4 27 Q0 27 0 24Z" fill="#e42838"/><path d="M2 26 Q10 30 20 26" stroke="#d83040" stroke-width="1.600"/><path d="M4 14 Q12 12 20 18" stroke="#a02870" stroke-width="1"/><path d="M2 19 Q10 17 16 22" stroke="#b02868" stroke-width=".9"/><path d="M14 22 Q24 29 36 25 Q46 20 47 14 Q44 9 38 10" stroke="#e82030" stroke-width="3"/><path d="M4 38 Q20 37 34 29 Q46 22 60 24" stroke="#e02838" stroke-width="2.400"/><path d="M20 41 Q34 39 44 33 Q56 26 63 28" stroke="#e82838" stroke-width="1.800"/><path d="M36 24 Q34 35 44 35 Q55 33 53 24 Q50 17 43 20" stroke="#5c1c98" stroke-width="2.400"/><path d="M10 8 Q18 4 28 12 Q36 18 44 20" stroke="#5a2088" stroke-width="1.500"/><path d="M12 9 Q22 13 32 20" stroke="#2a1040" stroke-width=".8"/><path d="M38 12 Q46 12 50 20 Q54 26 60 24" stroke="#1a0820" stroke-width=".9"/><path d="M4 41 Q24 37 40 29" stroke="#401848" stroke-width=".7"/><path d="M40 42 Q52 43 58 35 Q62 28 60 21" stroke="#201020" stroke-width="1" stroke-dasharray=".8 1.500"/><path d="M20 40 L21 45 M24 39 L24.500 43 M28 38 L28 41" stroke="#e83040" stroke-width="1"/><path d="M50 13 Q59 15 62 27" stroke="#e82838" stroke-width="2.400"/><path d="M38 14 Q48 9 57 15" stroke="#e82838" stroke-width="2.200"/><path d="M12 6 Q18 4 22 8" stroke="#6a2890" stroke-width="1.200"/></g></svg></div>
<div class="th" style="left:299px;top:447px;background:linear-gradient(100deg,rgba(214,240,110,.30) 0%,rgba(160,220,120,.0) 45%,rgba(20,70,50,.38) 100%),conic-gradient(from 0deg at 32px 24px,#78b868 0deg,#90e0c0 15.5deg,#a8e8a0 28.9deg,#5c9c6c 37deg,#dcf4a0 48.4deg,#a8e8a0 56.3deg,#a8e8a0 66.7deg,#4a8858 80.2deg,#4a8858 85.4deg,#dcf4a0 91.2deg,#3a6a4a 110.2deg,#a8e8a0 125.1deg,#90e0c0 132.4deg,#5c9c6c 144.7deg,#b4dc70 161deg,#5c9c6c 169.1deg,#4a8858 180.4deg,#88d8b0 185.4deg,#88d8b0 199.3deg,#90e0c0 205.2deg,#88d8b0 223.1deg,#b4dc70 238.4deg,#a8e8a0 249.2deg,#78b868 256.9deg,#68a860 262.2deg,#dcf4a0 272.3deg,#dcf4a0 288.6deg,#5c9c6c 306.1deg,#4a8858 320.5deg,#b4dc70 327.8deg,#90e0c0 335.3deg,#c8ea78 346.2deg,#c8ea78 354.2deg,#78b868 360deg)"><svg viewBox="0 0 64 48" preserveAspectRatio="none"><defs><filter id="b28a" x="-20%" y="-20%" width="140%" height="140%"><feGaussianBlur stdDeviation="0.6"/></filter><filter id="b28b" x="-60%" y="-60%" width="220%" height="220%"><feGaussianBlur stdDeviation="1.5"/></filter><filter id="b28c" x="-100%" y="-100%" width="300%" height="300%"><feGaussianBlur stdDeviation="3"/></filter></defs><g filter="url(#b28b)"><ellipse cx="32" cy="24" rx="4.500" ry="3.500" fill="#f0f0e0"/><ellipse cx="30" cy="25" rx="2" ry="2" fill="#e8b0e0"/></g><path d="M24 22 l8 2 l4 -4 l0 6 l6 2 l-8 1 l-3 5 l-1 -6z" fill="#f4f8e8" opacity=".75" filter="url(#b28a)"/></svg></div>
<div class="th" style="left:379px;top:447px"><svg viewBox="0 0 64 48" preserveAspectRatio="none"><defs><filter id="b29a" x="-20%" y="-20%" width="140%" height="140%"><feGaussianBlur stdDeviation="0.6"/></filter><filter id="b29b" x="-60%" y="-60%" width="220%" height="220%"><feGaussianBlur stdDeviation="1.5"/></filter><filter id="b29c" x="-100%" y="-100%" width="300%" height="300%"><feGaussianBlur stdDeviation="3"/></filter></defs><rect width="64" height="48" fill="#260818"/><g filter="url(#b29c)"><ellipse cx="50" cy="8" rx="18" ry="8" fill="#780a3c"/><ellipse cx="10" cy="42" rx="16" ry="7" fill="#700a38"/><ellipse cx="56" cy="30" rx="8" ry="12" fill="#5a0a40"/><ellipse cx="32" cy="24" rx="12" ry="8" fill="#18040e"/></g><g filter="url(#b29b)" fill="none" stroke-linecap="round"><path d="M1 26 Q1 10 20 8 Q37 8 38 16 Q38 22 33 24 Q26 28 28 34 Q32 43 48 41 Q62 38 64 28" stroke="#9a34a4" stroke-width="3" opacity=".85"/></g><g filter="url(#b29a)" fill="none" stroke-linecap="round"><path d="M1 24 Q2 11 20 9" stroke="#a03cb4" stroke-width="1.200"/><path d="M44 41 Q60 39 63 30" stroke="#b444b8" stroke-width="1.200"/><path d="M28 9 Q38 11 38 17 Q38 22 33 24 Q26 28 28 34 Q30 39 38 41" stroke="#d088c8" stroke-width="1.400" opacity=".9"/><circle cx="33" cy="24" r="2" fill="#ff48c0"/></g><g fill="none" stroke="#4a0c30" stroke-width=".6" opacity=".8"><ellipse cx="32" cy="24" rx="20" ry="11"/><ellipse cx="32" cy="24" rx="14" ry="7"/></g></svg></div>
<div class="th" style="left:459px;top:447px"><svg viewBox="0 0 64 48" preserveAspectRatio="none"><defs><filter id="b30a" x="-20%" y="-20%" width="140%" height="140%"><feGaussianBlur stdDeviation="0.6"/></filter><filter id="b30b" x="-60%" y="-60%" width="220%" height="220%"><feGaussianBlur stdDeviation="1.5"/></filter><filter id="b30c" x="-100%" y="-100%" width="300%" height="300%"><feGaussianBlur stdDeviation="3"/></filter><linearGradient id="g30" x1="0" y1="0" x2="1" y2="0"><stop offset="0" stop-color="#1a3836"/><stop offset=".6" stop-color="#1e403c"/><stop offset="1" stop-color="#285e54"/></linearGradient></defs><rect width="64" height="48" fill="url(#g30)"/><g filter="url(#b30c)"><ellipse cx="12" cy="6" rx="16" ry="8" fill="#163030"/><ellipse cx="14" cy="42" rx="18" ry="8" fill="#152e2e"/><ellipse cx="56" cy="25" rx="13" ry="6" fill="#2e7868"/><ellipse cx="45" cy="26" rx="10" ry="5" fill="#3c9c80"/><ellipse cx="52" cy="5" rx="12" ry="5" fill="#1a3a3a"/><ellipse cx="54" cy="44" rx="12" ry="5" fill="#183634"/></g><g filter="url(#b30a)"><ellipse cx="44" cy="26" rx="6.500" ry="3.400" fill="#52b898"/><ellipse cx="44" cy="26" rx="3.500" ry="1.800" fill="none" stroke="#3aa888" stroke-width=".6"/></g><circle cx="21.6" cy="20.1" r="0.6" fill="#a8c8a0" opacity="0.5"/><circle cx="10.3" cy="23.9" r="0.5" fill="#a8c8a0" opacity="0.7"/><circle cx="39.6" cy="21.2" r="0.8" fill="#a8c8a0" opacity="0.5"/><circle cx="2.9" cy="23.7" r="0.4" fill="#a8c8a0" opacity="0.8"/><circle cx="24" cy="23.9" r="0.6" fill="#a8c8a0" opacity="0.6"/><circle cx="2.7" cy="20.9" r="0.4" fill="#a8c8a0" opacity="0.8"/><circle cx="26.9" cy="22.6" r="0.7" fill="#a8c8a0" opacity="0.7"/><circle cx="35.8" cy="24.5" r="0.4" fill="#a8c8a0" opacity="0.6"/><circle cx="12.4" cy="24.1" r="0.5" fill="#a8c8a0" opacity="0.4"/><circle cx="9.7" cy="21.4" r="0.5" fill="#a8c8a0" opacity="0.7"/><circle cx="16.4" cy="20.9" r="0.6" fill="#a8c8a0" opacity="0.4"/><circle cx="25.8" cy="20.7" r="0.6" fill="#a8c8a0" opacity="0.8"/><circle cx="37.9" cy="25.3" r="0.8" fill="#a8c8a0" opacity="0.8"/><circle cx="19" cy="20.1" r="0.6" fill="#a8c8a0" opacity="0.8"/><circle cx="10.1" cy="23.6" r="0.7" fill="#a8c8a0" opacity="0.7"/><circle cx="33.1" cy="27.8" r="0.6" fill="#a8c8a0" opacity="0.6"/><circle cx="9" cy="24.2" r="0.5" fill="#a8c8a0" opacity="0.7"/><circle cx="24.8" cy="22.5" r="0.6" fill="#a8c8a0" opacity="0.5"/><circle cx="25" cy="19.6" r="0.6" fill="#a8c8a0" opacity="0.7"/><circle cx="14.9" cy="23.1" r="0.6" fill="#a8c8a0" opacity="0.7"/><circle cx="38.3" cy="24.6" r="0.7" fill="#a8c8a0" opacity="0.4"/><circle cx="13.4" cy="22.1" r="0.4" fill="#a8c8a0" opacity="0.6"/><circle cx="10.2" cy="21.9" r="0.6" fill="#a8c8a0" opacity="0.4"/><circle cx="17.7" cy="21.9" r="0.4" fill="#a8c8a0" opacity="0.8"/><circle cx="19.9" cy="20.7" r="0.7" fill="#a8c8a0" opacity="0.4"/><circle cx="34.7" cy="25.3" r="0.5" fill="#a8c8a0" opacity="0.4"/><circle cx="36.6" cy="26.5" r="0.6" fill="#a8c8a0" opacity="0.6"/><circle cx="5.7" cy="23.1" r="0.5" fill="#a8c8a0" opacity="0.8"/><circle cx="15.2" cy="21.6" r="0.7" fill="#a8c8a0" opacity="0.7"/><circle cx="36.1" cy="23.9" r="0.5" fill="#a8c8a0" opacity="0.6"/><circle cx="17.9" cy="21.6" r="0.7" fill="#a8c8a0" opacity="0.6"/><circle cx="7.1" cy="24.9" r="0.5" fill="#a8c8a0" opacity="0.6"/><circle cx="4.2" cy="24" r="0.4" fill="#a8c8a0" opacity="0.4"/><circle cx="6.3" cy="26" r="0.6" fill="#a8c8a0" opacity="0.4"/><circle cx="27.5" cy="20.8" r="0.7" fill="#a8c8a0" opacity="0.7"/><circle cx="20.7" cy="19.2" r="0.5" fill="#a8c8a0" opacity="0.6"/><circle cx="6" cy="24.2" r="0.6" fill="#a8c8a0" opacity="0.4"/><circle cx="17.7" cy="22.5" r="0.6" fill="#a8c8a0" opacity="0.5"/><circle cx="26" cy="22.4" r="0.5" fill="#a8c8a0" opacity="0.5"/><circle cx="28.8" cy="24.2" r="0.5" fill="#a8c8a0" opacity="0.5"/><circle cx="32.7" cy="26.8" r="0.4" fill="#a8c8a0" opacity="0.5"/><circle cx="3.9" cy="21.3" r="0.7" fill="#a8c8a0" opacity="0.6"/><circle cx="3.7" cy="23.6" r="0.4" fill="#a8c8a0" opacity="0.8"/><circle cx="18.1" cy="20.1" r="0.7" fill="#a8c8a0" opacity="0.6"/><circle cx="5.5" cy="21.6" r="0.4" fill="#a8c8a0" opacity="0.7"/><circle cx="14" cy="22.3" r="0.6" fill="#a8c8a0" opacity="0.5"/><circle cx="31.5" cy="23.8" r="0.4" fill="#a8c8a0" opacity="0.7"/><circle cx="6.9" cy="24.2" r="0.6" fill="#a8c8a0" opacity="0.4"/><circle cx="4.3" cy="22.7" r="0.6" fill="#a8c8a0" opacity="0.7"/><circle cx="14.2" cy="21.2" r="0.6" fill="#a8c8a0" opacity="0.5"/><circle cx="1.7" cy="23" r="0.7" fill="#a8c8a0" opacity="0.7"/><circle cx="25.2" cy="20.1" r="0.4" fill="#a8c8a0" opacity="0.7"/><circle cx="17.2" cy="20.5" r="0.4" fill="#a8c8a0" opacity="0.4"/><circle cx="26.4" cy="22.8" r="0.5" fill="#a8c8a0" opacity="0.4"/><circle cx="22.7" cy="22.5" r="0.4" fill="#a8c8a0" opacity="0.7"/><circle cx="24.6" cy="19" r="0.6" fill="#a8c8a0" opacity="0.5"/><circle cx="18.7" cy="19.5" r="0.4" fill="#a8c8a0" opacity="0.7"/><circle cx="34.2" cy="27.1" r="0.8" fill="#a8c8a0" opacity="0.5"/><circle cx="9.3" cy="23.9" r="0.7" fill="#a8c8a0" opacity="0.4"/><circle cx="20" cy="20.3" r="0.7" fill="#a8c8a0" opacity="0.7"/><circle cx="25.2" cy="21.6" r="0.7" fill="#a8c8a0" opacity="0.7"/><circle cx="9" cy="22.1" r="0.4" fill="#a8c8a0" opacity="0.8"/><circle cx="4.5" cy="20.9" r="0.7" fill="#a8c8a0" opacity="0.7"/><circle cx="1.9" cy="21.6" r="0.4" fill="#a8c8a0" opacity="0.6"/><circle cx="4" cy="23.4" r="0.7" fill="#a8c8a0" opacity="0.8"/><circle cx="31.9" cy="26.3" r="0.7" fill="#a8c8a0" opacity="0.8"/><circle cx="7.3" cy="25.2" r="0.7" fill="#a8c8a0" opacity="0.7"/><circle cx="9.1" cy="23.9" r="0.8" fill="#a8c8a0" opacity="0.7"/><circle cx="27.7" cy="21.5" r="0.4" fill="#a8c8a0" opacity="0.5"/><circle cx="28.3" cy="24.9" r="0.7" fill="#a8c8a0" opacity="0.6"/><circle cx="22.8" cy="21.8" r="0.4" fill="#a8c8a0" opacity="0.5"/><circle cx="15.9" cy="21.8" r="0.6" fill="#a8c8a0" opacity="0.5"/><circle cx="28.5" cy="23.7" r="0.7" fill="#a8c8a0" opacity="0.6"/><circle cx="39.3" cy="25.6" r="0.6" fill="#a8c8a0" opacity="0.6"/><circle cx="22.9" cy="22" r="0.5" fill="#a8c8a0" opacity="0.4"/><circle cx="6.9" cy="25.1" r="0.4" fill="#a8c8a0" opacity="0.5"/><circle cx="15.6" cy="18.7" r="0.4" fill="#a8c8a0" opacity="0.4"/><circle cx="1.5" cy="21.4" r="0.6" fill="#a8c8a0" opacity="0.6"/><circle cx="0.7" cy="21" r="0.4" fill="#a8c8a0" opacity="0.6"/><circle cx="3.2" cy="23.8" r="0.4" fill="#a8c8a0" opacity="0.5"/><circle cx="12" cy="21.8" r="0.6" fill="#a8c8a0" opacity="0.5"/><circle cx="16.6" cy="21.2" r="0.4" fill="#a8c8a0" opacity="0.8"/><circle cx="33.7" cy="27.7" r="0.6" fill="#a8c8a0" opacity="0.8"/><circle cx="36.6" cy="27.6" r="0.7" fill="#a8c8a0" opacity="0.7"/><circle cx="18.1" cy="19" r="0.6" fill="#a8c8a0" opacity="0.6"/><circle cx="38.9" cy="26.5" r="0.6" fill="#a8c8a0" opacity="0.5"/><circle cx="30.9" cy="23.5" r="0.5" fill="#a8c8a0" opacity="0.7"/><circle cx="9" cy="23.9" r="0.7" fill="#a8c8a0" opacity="0.5"/><circle cx="4.8" cy="24.6" r="0.7" fill="#a8c8a0" opacity="0.8"/><circle cx="0.6" cy="22.2" r="0.8" fill="#a8c8a0" opacity="0.6"/><path d="M28 32 Q36 29 42 35" fill="none" stroke="#2c5e54" stroke-width=".4"/><path d="M30 32.8 Q38 29.5 44 35.8" fill="none" stroke="#2c5e54" stroke-width=".4"/><path d="M32 33.6 Q40 30 46 36.6" fill="none" stroke="#2c5e54" stroke-width=".4"/><path d="M34 34.4 Q42 30.5 48 37.4" fill="none" stroke="#2c5e54" stroke-width=".4"/><path d="M36 35.2 Q44 31 50 38.2" fill="none" stroke="#2c5e54" stroke-width=".4"/><path d="M38 36 Q46 31.5 52 39" fill="none" stroke="#2c5e54" stroke-width=".4"/><path d="M40 36.8 Q48 32 54 39.8" fill="none" stroke="#2c5e54" stroke-width=".4"/><path d="M42 37.6 Q50 32.5 56 40.6" fill="none" stroke="#2c5e54" stroke-width=".4"/><path d="M44 38.4 Q52 33 58 41.4" fill="none" stroke="#2c5e54" stroke-width=".4"/><path d="M46 39.2 Q54 33.5 60 42.2" fill="none" stroke="#2c5e54" stroke-width=".4"/><path d="M48 40 Q56 34 62 43" fill="none" stroke="#2c5e54" stroke-width=".4"/><path d="M50 40.8 Q58 34.5 64 43.8" fill="none" stroke="#2c5e54" stroke-width=".4"/></svg></div>
<div class="abs" style="left:551px;top:199px;width:64px;height:48px;border-radius:4px;background:radial-gradient(ellipse at 50% 50%,#f6f6f6 0%,#ececec 40%,#d4d4d4 100%)"></div>
<svg class="abs" style="left:551px;top:199px" width="64" height="48" viewBox="551 199 64 48"><defs><linearGradient id="pg" x1="0" y1="0" x2="0" y2="1"><stop offset="0" stop-color="#8fc63d"/><stop offset="1" stop-color="#6aa820"/></linearGradient></defs><path d="M579.800 211.400 h7.400 v7.400 h7.400 v7.400 h-7.400 v7.400 h-7.400 v-7.400 h-7.400 v-7.400 h7.400z" fill="url(#pg)" stroke="#6a9e22" stroke-width=".5"/></svg>
<svg class="abs" style="left:318px;top:516px;overflow:visible" width="40" height="28" viewBox="318 516 40 28"><defs><filter id="tsh" x="-40%" y="-40%" width="180%" height="200%"><feGaussianBlur in="SourceAlpha" stdDeviation="1.300"/><feOffset dy="1"/><feComponentTransfer><feFuncA type="linear" slope=".42"/></feComponentTransfer><feMerge><feMergeNode/><feMergeNode in="SourceGraphic"/></feMerge></filter><clipPath id="tcl"><rect x="318" y="524" width="40" height="20"/></clipPath></defs><g clip-path="url(#tcl)"><path d="M329.500 520 L345 520 L345 524 L337.250 535.500 L329.500 524Z" fill="#f9f9f9" filter="url(#tsh)"/></g></svg>
</body>
</html>
